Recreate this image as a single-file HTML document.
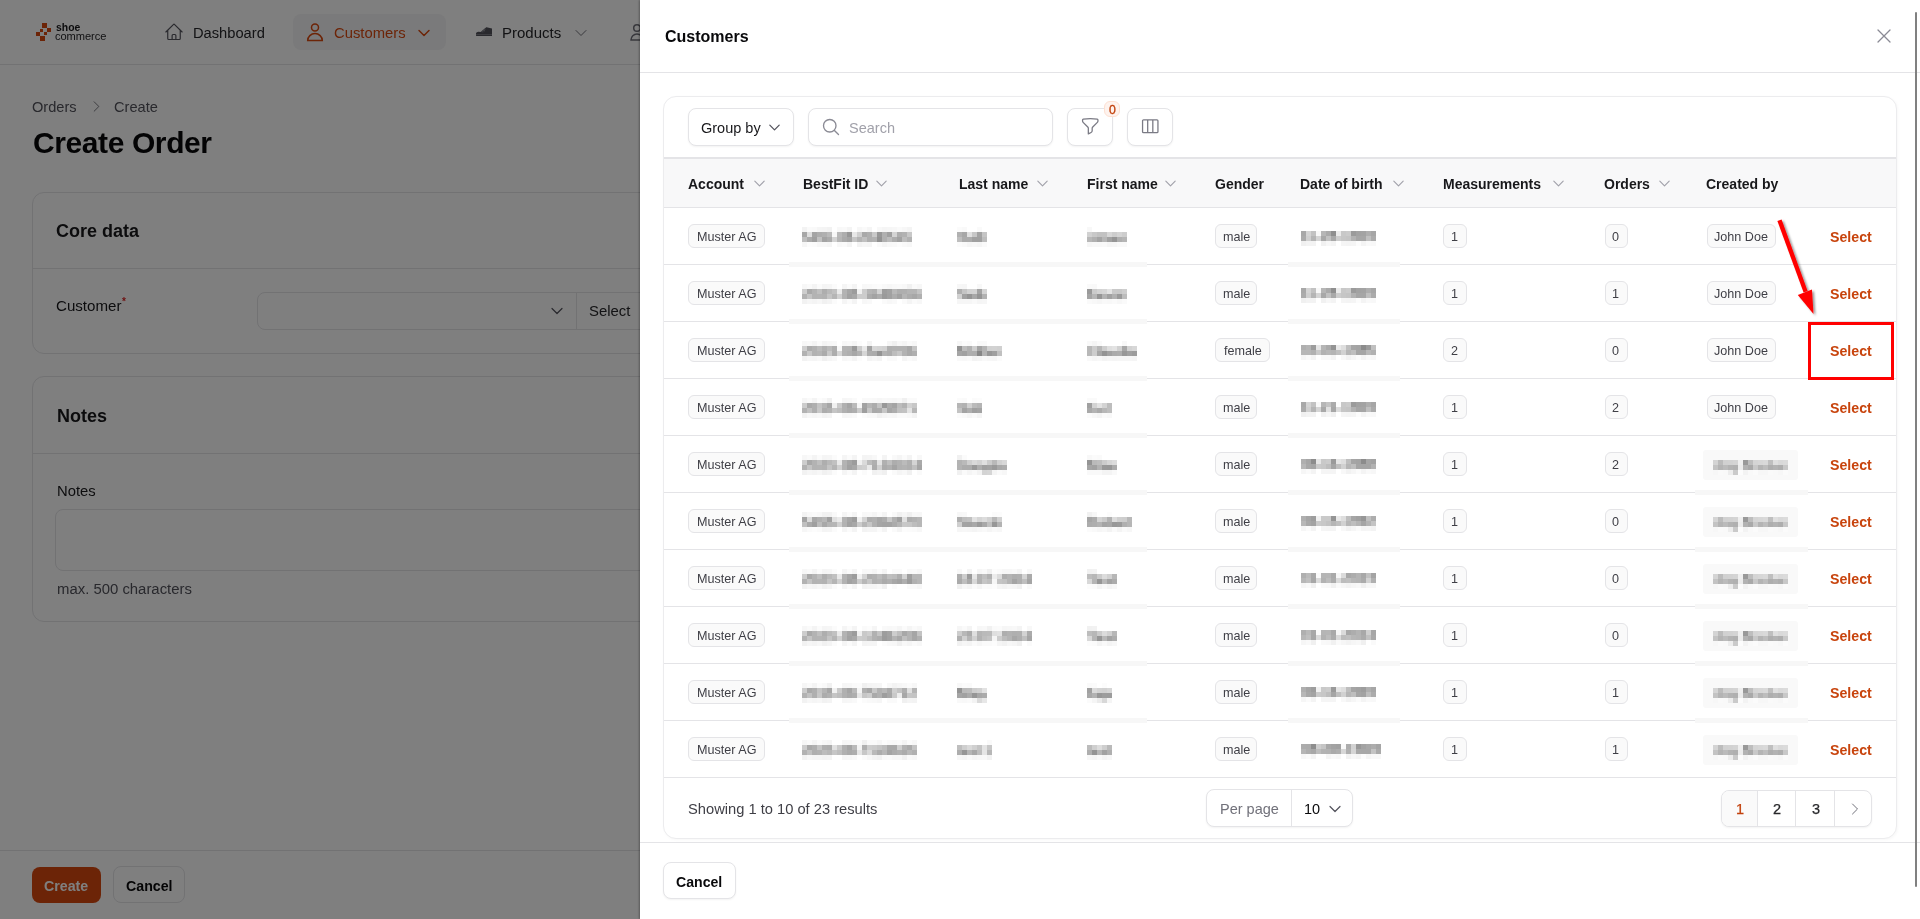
<!DOCTYPE html><html><head><meta charset="utf-8"><style>
html,body{margin:0;padding:0;width:1920px;height:919px;overflow:hidden;background:#fff;font-family:"Liberation Sans",sans-serif}
.a{position:absolute;box-sizing:border-box}
.t{position:absolute;white-space:nowrap;will-change:transform}
</style></head><body>
<div class="a" style="left:0;top:0;width:1920px;height:919px;background:#fff;overflow:hidden">
<div class="a" style="left:0px;top:0px;width:1920px;height:65px;background:#fff;border-bottom:1px solid #e4e4e7"></div>
<div class="a" style="left:42px;top:23px;width:5px;height:5px;background:#d9480f"></div>
<div class="a" style="left:47px;top:27.7px;width:4px;height:4px;background:#d9480f"></div>
<div class="a" style="left:40px;top:29px;width:3px;height:3px;background:#d9480f"></div>
<div class="a" style="left:44.2px;top:31.6px;width:3px;height:3px;background:#d9480f"></div>
<div class="a" style="left:36px;top:32px;width:4px;height:4px;background:#d9480f"></div>
<div class="a" style="left:40px;top:35.8px;width:5px;height:5px;background:#d9480f"></div>
<div class="t" style="left:55.5px;top:23.20px;font-size:10.4px;line-height:10.4px;font-weight:700;color:#18181b;letter-spacing:0px">shoe</div>
<div class="t" style="left:55.3px;top:31.40px;font-size:11.1px;line-height:11.1px;font-weight:400;color:#27272a;letter-spacing:-0.05px">commerce</div>
<svg class="a" style="left:163.5px;top:21.5px" width="20" height="20" viewBox="0 0 24 24" fill="none" stroke="#52525b" stroke-width="1.4" stroke-linecap="round" stroke-linejoin="round"><path d="m2.25 12 8.954-8.955c.44-.439 1.152-.439 1.591 0L21.75 12M4.5 9.75v10.125c0 .621.504 1.125 1.125 1.125H9.75v-4.875c0-.621.504-1.125 1.125-1.125h2.25c.621 0 1.125.504 1.125 1.125V21h4.125c.621 0 1.125-.504 1.125-1.125V9.75M8.25 21h8.25"/></svg>
<div class="t" style="left:192.6px;top:25.56px;font-size:14.7px;line-height:14.7px;font-weight:400;color:#27272a;">Dashboard</div>
<div class="a" style="left:293px;top:14px;width:153px;height:35.5px;background:#f5f5f6;border-radius:8px"></div>
<svg class="a" style="left:306px;top:22px" width="18" height="20" viewBox="0 0 18 20" fill="none" stroke="#d9480f" stroke-width="1.5"><circle cx="9" cy="5.4" r="3.5"/><path d="M1.7 18.6 A7.3 7.0 0 0 1 16.3 18.6 Z"/></svg>
<div class="t" style="left:333.5px;top:25.97px;font-size:14.8px;line-height:14.8px;font-weight:400;color:#d9480f;">Customers</div>
<svg class="a" style="left:416px;top:25px" width="16" height="16" viewBox="0 0 24 24" fill="none" stroke="#d9480f" stroke-width="2.2" stroke-linecap="round" stroke-linejoin="round"><path d="m19.5 8.25-7.5 7.5-7.5-7.5"/></svg>
<svg class="a" style="left:476px;top:27px" width="16" height="9" viewBox="0 0 16 9"><path d="M0 6.3 Q0.4 4.6 2.6 4.7 L4.6 4.9 L10.3 0.3 Q10.8 0 11.6 0.4 L16 1.6 L16 9 L0.4 9 Q0 8.8 0 8.2 Z" fill="#52525b"/><rect x="0" y="7.2" width="16" height="0.7" fill="#8e8e96"/><rect x="5.2" y="4" width="1.1" height="1.1" fill="#8e8e96"/><rect x="6.8" y="2.8" width="1.1" height="1.1" fill="#8e8e96"/><rect x="8.3" y="1.7" width="1.1" height="1.1" fill="#8e8e96"/><rect x="6.3" y="4.3" width="1.1" height="1.1" fill="#8e8e96"/><rect x="7.9" y="3.2" width="1.1" height="1.1" fill="#8e8e96"/></svg>
<div class="t" style="left:502.2px;top:25.30px;font-size:15px;line-height:15px;font-weight:400;color:#27272a;">Products</div>
<svg class="a" style="left:572.5px;top:25px" width="16" height="16" viewBox="0 0 24 24" fill="none" stroke="#71717a" stroke-width="1.5" stroke-linecap="round" stroke-linejoin="round"><path d="m19.5 8.25-7.5 7.5-7.5-7.5"/></svg>
<svg class="a" style="left:630px;top:23px" width="20" height="20" viewBox="0 0 20 20" fill="none" stroke="#71717a" stroke-width="1.5"><circle cx="7" cy="5" r="3.3"/><path d="M1 17 A6 6 0 0 1 13 17 Z"/></svg>
<div class="t" style="left:32.4px;top:99.94px;font-size:14.6px;line-height:14.6px;font-weight:400;color:#52525b;">Orders</div>
<svg class="a" style="left:89px;top:98.5px" width="15" height="15" viewBox="0 0 24 24" fill="none" stroke="#71717a" stroke-width="1.5" stroke-linecap="round" stroke-linejoin="round"><path d="m8.25 4.5 7.5 7.5-7.5 7.5"/></svg>
<div class="t" style="left:114.3px;top:99.94px;font-size:14.6px;line-height:14.6px;font-weight:400;color:#52525b;">Create</div>
<div class="t" style="left:33px;top:127.51px;font-size:30px;line-height:30px;font-weight:700;color:#09090b;letter-spacing:-0.4px">Create Order</div>
<div class="a" style="left:31.8px;top:191.8px;width:1856px;height:162px;background:#fff;border:1px solid #e4e4e7;border-radius:12px"></div>
<div class="a" style="left:32px;top:268px;width:1854px;height:1px;background:#e4e4e7"></div>
<div class="t" style="left:56.2px;top:221.96px;font-size:18px;line-height:18px;font-weight:700;color:#18181b;">Core data</div>
<div class="t" style="left:56.2px;top:298.02px;font-size:15.1px;line-height:15.1px;font-weight:400;color:#18181b;">Customer</div>
<div class="t" style="left:122.3px;top:296.74px;font-size:10px;line-height:10px;font-weight:700;color:#dc2626;">*</div>
<div class="a" style="left:256.5px;top:292px;width:1300px;height:38px;background:#fff;border:1px solid #e4e4e7;border-radius:8px"></div>
<div class="a" style="left:575.5px;top:293px;width:1px;height:36px;background:#e4e4e7"></div>
<svg class="a" style="left:549px;top:302.5px" width="16" height="16" viewBox="0 0 24 24" fill="none" stroke="#52525b" stroke-width="1.8" stroke-linecap="round" stroke-linejoin="round"><path d="m19.5 8.25-7.5 7.5-7.5-7.5"/></svg>
<div class="t" style="left:588.7px;top:304.39px;font-size:14.9px;line-height:14.9px;font-weight:400;color:#27272a;">Select</div>
<div class="a" style="left:31.8px;top:376.4px;width:1856px;height:246px;background:#fff;border:1px solid #e4e4e7;border-radius:12px"></div>
<div class="a" style="left:32px;top:453px;width:1854px;height:1px;background:#e4e4e7"></div>
<div class="t" style="left:56.6px;top:406.56px;font-size:18px;line-height:18px;font-weight:700;color:#18181b;">Notes</div>
<div class="t" style="left:56.6px;top:483.67px;font-size:14.8px;line-height:14.8px;font-weight:400;color:#18181b;">Notes</div>
<div class="a" style="left:55.3px;top:509.3px;width:1810px;height:61.5px;background:#fff;border:1px solid #e4e4e7;border-radius:8px"></div>
<div class="t" style="left:56.6px;top:581.59px;font-size:14.9px;line-height:14.9px;font-weight:400;color:#52525b;">max. 500 characters</div>
<div class="a" style="left:0px;top:850px;width:1920px;height:69px;background:#fff;border-top:1px solid #e4e4e7"></div>
<div class="a" style="left:32.3px;top:867px;width:69px;height:35.5px;background:#d9480f;border-radius:8px"></div>
<div class="t" style="left:44.4px;top:878.88px;font-size:14.2px;line-height:14.2px;font-weight:700;color:#fff;">Create</div>
<div class="a" style="left:112.5px;top:866.3px;width:72px;height:37px;background:#fff;border:1px solid #e4e4e7;border-radius:8px"></div>
<div class="t" style="left:125.6px;top:878.88px;font-size:14.2px;line-height:14.2px;font-weight:700;color:#09090b;">Cancel</div>
</div>
<div class="a" style="left:0px;top:0px;width:1920px;height:919px;background:rgba(0,0,0,0.5)"></div>
<div class="a" style="left:640px;top:0;width:1280px;height:919px;background:#fff;box-shadow:-1px 0 2px rgba(0,0,0,0.3);overflow:hidden">
<div class="t" style="left:24.5px;top:29.06px;font-size:16px;line-height:16px;font-weight:700;color:#09090b;">Customers</div>
<svg class="a" style="left:1232px;top:24px" width="24" height="24" viewBox="0 0 24 24" fill="none" stroke="#8a8a94" stroke-width="1.3" stroke-linecap="round" stroke-linejoin="round"><path d="M6 18 18 6M6 6l12 12"/></svg>
<div class="a" style="left:0px;top:72px;width:1280px;height:1px;background:#e4e4e7"></div>
<div class="a" style="left:23.399999999999977px;top:96px;width:1234px;height:743px;background:#fff;border:1px solid #ececee;border-radius:13px;box-shadow:1px 1px 3px rgba(0,0,0,0.03)"></div>
<div class="a" style="left:47.5px;top:108px;width:106.5px;height:38px;background:#fff;border:1px solid #e4e4e7;border-radius:8px;box-shadow:0 1px 2px rgba(0,0,0,0.05)"></div>
<div class="t" style="left:60.60000000000002px;top:121.03px;font-size:14.5px;line-height:14.5px;font-weight:400;color:#18181b;">Group by</div>
<svg class="a" style="left:127px;top:120px" width="15" height="15" viewBox="0 0 24 24" fill="none" stroke="#52525b" stroke-width="2" stroke-linecap="round" stroke-linejoin="round"><path d="m19.5 8.25-7.5 7.5-7.5-7.5"/></svg>
<div class="a" style="left:168.29999999999995px;top:108px;width:244.5px;height:38px;background:#fff;border:1px solid #e4e4e7;border-radius:8px;box-shadow:0 1px 2px rgba(0,0,0,0.05)"></div>
<svg class="a" style="left:180.5px;top:117px" width="20" height="20" viewBox="0 0 24 24" fill="none" stroke="#8a8a94" stroke-width="1.6" stroke-linecap="round" stroke-linejoin="round"><path d="m21 21-5.197-5.197m0 0A7.5 7.5 0 1 0 5.196 5.196a7.5 7.5 0 0 0 10.607 10.607Z"/></svg>
<div class="t" style="left:209px;top:120.83px;font-size:14.5px;line-height:14.5px;font-weight:400;color:#a1a1aa;">Search</div>
<div class="a" style="left:427.4000000000001px;top:108px;width:46px;height:38px;background:#fff;border:1px solid #e4e4e7;border-radius:8px;box-shadow:0 1px 2px rgba(0,0,0,0.05)"></div>
<svg class="a" style="left:439.5999999999999px;top:116.4px" width="20.5" height="20.5" viewBox="0 0 24 24" fill="none" stroke="#7a7a84" stroke-width="1.5" stroke-linecap="round" stroke-linejoin="round"><path d="M12 3c2.755 0 5.455.232 8.083.678.533.09.917.556.917 1.096v1.044a2.25 2.25 0 0 1-.659 1.591l-5.432 5.432a2.25 2.25 0 0 0-.659 1.591v2.927a2.25 2.25 0 0 1-1.244 2.013L9.75 21v-6.568a2.25 2.25 0 0 0-.659-1.591L3.659 7.409A2.25 2.25 0 0 1 3 5.818V4.774c0-.54.384-1.006.917-1.096A48.32 48.32 0 0 1 12 3Z"/></svg>
<div class="a" style="left:464px;top:101.3px;width:16px;height:15.5px;background:#fef3ee;border:1px solid #fde0d2;border-radius:6px"></div>
<div class="t" style="left:468.79999999999995px;top:103.59px;font-size:12.3px;line-height:12.3px;font-weight:400;color:#c2410c;-webkit-text-stroke:0.3px #c2410c">0</div>
<div class="a" style="left:487.4000000000001px;top:108px;width:46px;height:38px;background:#fff;border:1px solid #e4e4e7;border-radius:8px;box-shadow:0 1px 2px rgba(0,0,0,0.05)"></div>
<svg class="a" style="left:499.5px;top:116px" width="20.5" height="20.5" viewBox="0 0 24 24" fill="none" stroke="#7a7a84" stroke-width="1.5" stroke-linecap="round" stroke-linejoin="round"><path d="M9 4.5v15m6-15v15m-10.875 0h15.75c.621 0 1.125-.504 1.125-1.125V5.625c0-.621-.504-1.125-1.125-1.125H4.125C3.504 4.5 3 5.004 3 5.625v12.75c0 .621.504 1.125 1.125 1.125Z"/></svg>
<div class="a" style="left:24px;top:157px;width:1232px;height:2px;background:#e4e4e7"></div>
<div class="a" style="left:24px;top:159px;width:1232px;height:48px;background:#f8f8f9"></div>
<div class="a" style="left:24px;top:207px;width:1232px;height:1px;background:#e4e4e7"></div>
<div class="t" style="left:48px;top:177.15px;font-size:14px;line-height:14px;font-weight:700;color:#18181b;">Account</div>
<svg class="a" style="left:111.70000000000005px;top:176px" width="15" height="15" viewBox="0 0 24 24" fill="none" stroke="#a1a1aa" stroke-width="1.8" stroke-linecap="round" stroke-linejoin="round"><path d="m19.5 8.25-7.5 7.5-7.5-7.5"/></svg>
<div class="t" style="left:162.70000000000005px;top:177.15px;font-size:14px;line-height:14px;font-weight:700;color:#18181b;">BestFit ID</div>
<svg class="a" style="left:233.5px;top:176px" width="15" height="15" viewBox="0 0 24 24" fill="none" stroke="#a1a1aa" stroke-width="1.8" stroke-linecap="round" stroke-linejoin="round"><path d="m19.5 8.25-7.5 7.5-7.5-7.5"/></svg>
<div class="t" style="left:319.1px;top:177.15px;font-size:14px;line-height:14px;font-weight:700;color:#18181b;">Last name</div>
<svg class="a" style="left:394.5px;top:176px" width="15" height="15" viewBox="0 0 24 24" fill="none" stroke="#a1a1aa" stroke-width="1.8" stroke-linecap="round" stroke-linejoin="round"><path d="m19.5 8.25-7.5 7.5-7.5-7.5"/></svg>
<div class="t" style="left:446.5999999999999px;top:177.15px;font-size:14px;line-height:14px;font-weight:700;color:#18181b;">First name</div>
<svg class="a" style="left:523.3px;top:176px" width="15" height="15" viewBox="0 0 24 24" fill="none" stroke="#a1a1aa" stroke-width="1.8" stroke-linecap="round" stroke-linejoin="round"><path d="m19.5 8.25-7.5 7.5-7.5-7.5"/></svg>
<div class="t" style="left:575.4000000000001px;top:177.15px;font-size:14px;line-height:14px;font-weight:700;color:#18181b;">Gender</div>
<div class="t" style="left:660.3px;top:177.15px;font-size:14px;line-height:14px;font-weight:700;color:#18181b;">Date of birth</div>
<svg class="a" style="left:750.7px;top:176px" width="15" height="15" viewBox="0 0 24 24" fill="none" stroke="#a1a1aa" stroke-width="1.8" stroke-linecap="round" stroke-linejoin="round"><path d="m19.5 8.25-7.5 7.5-7.5-7.5"/></svg>
<div class="t" style="left:802.5px;top:177.15px;font-size:14px;line-height:14px;font-weight:700;color:#18181b;">Measurements</div>
<svg class="a" style="left:910.5px;top:176px" width="15" height="15" viewBox="0 0 24 24" fill="none" stroke="#a1a1aa" stroke-width="1.8" stroke-linecap="round" stroke-linejoin="round"><path d="m19.5 8.25-7.5 7.5-7.5-7.5"/></svg>
<div class="t" style="left:964.2px;top:177.15px;font-size:14px;line-height:14px;font-weight:700;color:#18181b;">Orders</div>
<svg class="a" style="left:1016.7px;top:176px" width="15" height="15" viewBox="0 0 24 24" fill="none" stroke="#a1a1aa" stroke-width="1.8" stroke-linecap="round" stroke-linejoin="round"><path d="m19.5 8.25-7.5 7.5-7.5-7.5"/></svg>
<div class="t" style="left:1065.8px;top:177.15px;font-size:14px;line-height:14px;font-weight:700;color:#18181b;">Created by</div>
<div class="a" style="left:24px;top:264px;width:1232px;height:1px;background:#e4e4e7"></div>
<div class="a" style="left:48.299999999999955px;top:224px;width:76.5px;height:24px;background:#fafafa;border:1px solid #e4e4e7;border-radius:6px"></div>
<div class="t" style="left:56.792187499999955px;top:231.13px;font-size:12.6px;line-height:12.6px;font-weight:400;color:#3f3f46;">Muster AG</div>
<div class="a" style="left:575.3px;top:224px;width:42.2px;height:24px;background:#fafafa;border:1px solid #e4e4e7;border-radius:6px"></div>
<div class="t" style="left:582.7445312499999px;top:231.13px;font-size:12.6px;line-height:12.6px;font-weight:400;color:#3f3f46;">male</div>
<div class="a" style="left:803.3px;top:224px;width:23.3px;height:24px;background:#fafafa;border:1px solid #e4e4e7;border-radius:6px"></div>
<div class="t" style="left:811.44609375px;top:231.13px;font-size:12.6px;line-height:12.6px;font-weight:400;color:#3f3f46;">1</div>
<div class="a" style="left:964.5px;top:224px;width:23px;height:24px;background:#fafafa;border:1px solid #e4e4e7;border-radius:6px"></div>
<div class="t" style="left:972.49609375px;top:231.13px;font-size:12.6px;line-height:12.6px;font-weight:400;color:#3f3f46;">0</div>
<div class="a" style="left:1066.5px;top:224px;width:69px;height:24px;background:#fafafa;border:1px solid #e4e4e7;border-radius:6px"></div>
<div class="t" style="left:1074.03046875px;top:231.13px;font-size:12.6px;line-height:12.6px;font-weight:400;color:#3f3f46;">John Doe</div>
<div class="t" style="left:1189.7px;top:229.98px;font-size:14.2px;line-height:14.2px;font-weight:700;color:#c8440d;">Select</div>
<svg class="a" style="left:162px;top:227px" width="110" height="25" shape-rendering="crispEdges"><rect x="0" y="0" width="5" height="5" fill="rgb(243,243,243)"/><rect x="5" y="0" width="5" height="5" fill="rgb(250,250,250)"/><rect x="10" y="0" width="5" height="5" fill="rgb(249,249,249)"/><rect x="15" y="0" width="5" height="5" fill="rgb(245,245,245)"/><rect x="20" y="0" width="5" height="5" fill="rgb(244,244,244)"/><rect x="25" y="0" width="5" height="5" fill="rgb(242,242,242)"/><rect x="35" y="0" width="5" height="5" fill="rgb(248,248,248)"/><rect x="40" y="0" width="5" height="5" fill="rgb(249,249,249)"/><rect x="45" y="0" width="5" height="5" fill="rgb(244,244,244)"/><rect x="55" y="0" width="5" height="5" fill="rgb(247,247,247)"/><rect x="60" y="0" width="5" height="5" fill="rgb(250,250,250)"/><rect x="65" y="0" width="5" height="5" fill="rgb(245,245,245)"/><rect x="75" y="0" width="5" height="5" fill="rgb(248,248,248)"/><rect x="80" y="0" width="5" height="5" fill="rgb(245,245,245)"/><rect x="85" y="0" width="5" height="5" fill="rgb(246,246,246)"/><rect x="90" y="0" width="5" height="5" fill="rgb(247,247,247)"/><rect x="95" y="0" width="5" height="5" fill="rgb(250,250,250)"/><rect x="100" y="0" width="5" height="5" fill="rgb(247,247,247)"/><rect x="105" y="0" width="5" height="5" fill="rgb(244,244,244)"/><rect x="0" y="5" width="5" height="5" fill="rgb(167,167,167)"/><rect x="5" y="5" width="5" height="5" fill="rgb(223,223,223)"/><rect x="10" y="5" width="5" height="5" fill="rgb(164,164,164)"/><rect x="15" y="5" width="5" height="5" fill="rgb(173,173,173)"/><rect x="20" y="5" width="5" height="5" fill="rgb(176,176,176)"/><rect x="25" y="5" width="5" height="5" fill="rgb(186,186,186)"/><rect x="30" y="5" width="5" height="5" fill="rgb(248,248,248)"/><rect x="35" y="5" width="5" height="5" fill="rgb(185,185,185)"/><rect x="40" y="5" width="5" height="5" fill="rgb(173,173,173)"/><rect x="45" y="5" width="5" height="5" fill="rgb(151,151,151)"/><rect x="50" y="5" width="5" height="5" fill="rgb(232,232,232)"/><rect x="55" y="5" width="5" height="5" fill="rgb(208,208,208)"/><rect x="60" y="5" width="5" height="5" fill="rgb(169,169,169)"/><rect x="65" y="5" width="5" height="5" fill="rgb(175,175,175)"/><rect x="70" y="5" width="5" height="5" fill="rgb(201,201,201)"/><rect x="75" y="5" width="5" height="5" fill="rgb(151,151,151)"/><rect x="80" y="5" width="5" height="5" fill="rgb(176,176,176)"/><rect x="85" y="5" width="5" height="5" fill="rgb(160,160,160)"/><rect x="90" y="5" width="5" height="5" fill="rgb(212,212,212)"/><rect x="95" y="5" width="5" height="5" fill="rgb(174,174,174)"/><rect x="100" y="5" width="5" height="5" fill="rgb(178,178,178)"/><rect x="105" y="5" width="5" height="5" fill="rgb(200,200,200)"/><rect x="0" y="10" width="5" height="5" fill="rgb(190,190,190)"/><rect x="5" y="10" width="5" height="5" fill="rgb(171,171,171)"/><rect x="10" y="10" width="5" height="5" fill="rgb(159,159,159)"/><rect x="15" y="10" width="5" height="5" fill="rgb(193,193,193)"/><rect x="20" y="10" width="5" height="5" fill="rgb(163,163,163)"/><rect x="25" y="10" width="5" height="5" fill="rgb(171,171,171)"/><rect x="30" y="10" width="5" height="5" fill="rgb(211,211,211)"/><rect x="35" y="10" width="5" height="5" fill="rgb(182,182,182)"/><rect x="40" y="10" width="5" height="5" fill="rgb(170,170,170)"/><rect x="45" y="10" width="5" height="5" fill="rgb(164,164,164)"/><rect x="50" y="10" width="5" height="5" fill="rgb(198,198,198)"/><rect x="55" y="10" width="5" height="5" fill="rgb(181,181,181)"/><rect x="60" y="10" width="5" height="5" fill="rgb(192,192,192)"/><rect x="65" y="10" width="5" height="5" fill="rgb(175,175,175)"/><rect x="70" y="10" width="5" height="5" fill="rgb(178,178,178)"/><rect x="75" y="10" width="5" height="5" fill="rgb(146,146,146)"/><rect x="80" y="10" width="5" height="5" fill="rgb(176,176,176)"/><rect x="85" y="10" width="5" height="5" fill="rgb(188,188,188)"/><rect x="90" y="10" width="5" height="5" fill="rgb(173,173,173)"/><rect x="95" y="10" width="5" height="5" fill="rgb(162,162,162)"/><rect x="100" y="10" width="5" height="5" fill="rgb(189,189,189)"/><rect x="105" y="10" width="5" height="5" fill="rgb(178,178,178)"/><rect x="0" y="15" width="5" height="5" fill="rgb(246,246,246)"/><rect x="5" y="15" width="5" height="5" fill="rgb(252,252,252)"/><rect x="10" y="15" width="5" height="5" fill="rgb(251,251,251)"/><rect x="15" y="15" width="5" height="5" fill="rgb(247,247,247)"/><rect x="20" y="15" width="5" height="5" fill="rgb(247,247,247)"/><rect x="25" y="15" width="5" height="5" fill="rgb(245,245,245)"/><rect x="35" y="15" width="5" height="5" fill="rgb(248,248,248)"/><rect x="40" y="15" width="5" height="5" fill="rgb(250,250,250)"/><rect x="45" y="15" width="5" height="5" fill="rgb(244,244,244)"/><rect x="55" y="15" width="5" height="5" fill="rgb(243,243,243)"/><rect x="60" y="15" width="5" height="5" fill="rgb(246,246,246)"/><rect x="65" y="15" width="5" height="5" fill="rgb(245,245,245)"/><rect x="75" y="15" width="5" height="5" fill="rgb(250,250,250)"/><rect x="80" y="15" width="5" height="5" fill="rgb(245,245,245)"/><rect x="85" y="15" width="5" height="5" fill="rgb(248,248,248)"/><rect x="90" y="15" width="5" height="5" fill="rgb(249,249,249)"/><rect x="95" y="15" width="5" height="5" fill="rgb(252,252,252)"/><rect x="100" y="15" width="5" height="5" fill="rgb(249,249,249)"/><rect x="105" y="15" width="5" height="5" fill="rgb(247,247,247)"/></svg>
<svg class="a" style="left:317px;top:227px" width="30" height="25" shape-rendering="crispEdges"><rect x="0" y="0" width="5" height="5" fill="rgb(251,251,251)"/><rect x="5" y="0" width="5" height="5" fill="rgb(249,249,249)"/><rect x="20" y="0" width="5" height="5" fill="rgb(250,250,250)"/><rect x="0" y="5" width="5" height="5" fill="rgb(177,177,177)"/><rect x="5" y="5" width="5" height="5" fill="rgb(167,167,167)"/><rect x="10" y="5" width="5" height="5" fill="rgb(225,225,225)"/><rect x="15" y="5" width="5" height="5" fill="rgb(199,199,199)"/><rect x="20" y="5" width="5" height="5" fill="rgb(163,163,163)"/><rect x="25" y="5" width="5" height="5" fill="rgb(197,197,197)"/><rect x="0" y="10" width="5" height="5" fill="rgb(190,190,190)"/><rect x="5" y="10" width="5" height="5" fill="rgb(171,171,171)"/><rect x="10" y="10" width="5" height="5" fill="rgb(172,172,172)"/><rect x="15" y="10" width="5" height="5" fill="rgb(160,160,160)"/><rect x="20" y="10" width="5" height="5" fill="rgb(160,160,160)"/><rect x="25" y="10" width="5" height="5" fill="rgb(189,189,189)"/><rect x="0" y="15" width="5" height="5" fill="rgb(251,251,251)"/><rect x="5" y="15" width="5" height="5" fill="rgb(249,249,249)"/><rect x="10" y="15" width="5" height="5" fill="rgb(245,245,245)"/><rect x="15" y="15" width="5" height="5" fill="rgb(247,247,247)"/><rect x="20" y="15" width="5" height="5" fill="rgb(245,245,245)"/><rect x="25" y="15" width="5" height="5" fill="rgb(250,250,250)"/></svg>
<svg class="a" style="left:447px;top:227px" width="40" height="25" shape-rendering="crispEdges"><rect x="0" y="0" width="5" height="5" fill="rgb(248,248,248)"/><rect x="0" y="5" width="5" height="5" fill="rgb(209,209,209)"/><rect x="5" y="5" width="5" height="5" fill="rgb(200,200,200)"/><rect x="10" y="5" width="5" height="5" fill="rgb(194,194,194)"/><rect x="15" y="5" width="5" height="5" fill="rgb(194,194,194)"/><rect x="20" y="5" width="5" height="5" fill="rgb(215,215,215)"/><rect x="25" y="5" width="5" height="5" fill="rgb(205,205,205)"/><rect x="30" y="5" width="5" height="5" fill="rgb(212,212,212)"/><rect x="35" y="5" width="5" height="5" fill="rgb(205,205,205)"/><rect x="0" y="10" width="5" height="5" fill="rgb(184,184,184)"/><rect x="5" y="10" width="5" height="5" fill="rgb(176,176,176)"/><rect x="10" y="10" width="5" height="5" fill="rgb(164,164,164)"/><rect x="15" y="10" width="5" height="5" fill="rgb(182,182,182)"/><rect x="20" y="10" width="5" height="5" fill="rgb(162,162,162)"/><rect x="25" y="10" width="5" height="5" fill="rgb(149,149,149)"/><rect x="30" y="10" width="5" height="5" fill="rgb(175,175,175)"/><rect x="35" y="10" width="5" height="5" fill="rgb(181,181,181)"/><rect x="0" y="15" width="5" height="5" fill="rgb(246,246,246)"/><rect x="5" y="15" width="5" height="5" fill="rgb(248,248,248)"/><rect x="10" y="15" width="5" height="5" fill="rgb(248,248,248)"/><rect x="15" y="15" width="5" height="5" fill="rgb(249,249,249)"/><rect x="20" y="15" width="5" height="5" fill="rgb(245,245,245)"/><rect x="25" y="15" width="5" height="5" fill="rgb(246,246,246)"/><rect x="30" y="15" width="5" height="5" fill="rgb(249,249,249)"/><rect x="35" y="15" width="5" height="5" fill="rgb(249,249,249)"/></svg>
<svg class="a" style="left:661px;top:231px" width="75" height="25" shape-rendering="crispEdges"><rect x="0" y="0" width="5" height="5" fill="rgb(168,168,168)"/><rect x="5" y="0" width="5" height="5" fill="rgb(212,212,212)"/><rect x="10" y="0" width="5" height="5" fill="rgb(194,194,194)"/><rect x="15" y="0" width="5" height="5" fill="rgb(248,248,248)"/><rect x="20" y="0" width="5" height="5" fill="rgb(182,182,182)"/><rect x="25" y="0" width="5" height="5" fill="rgb(170,170,170)"/><rect x="30" y="0" width="5" height="5" fill="rgb(143,143,143)"/><rect x="35" y="0" width="5" height="5" fill="rgb(235,235,235)"/><rect x="40" y="0" width="5" height="5" fill="rgb(200,200,200)"/><rect x="45" y="0" width="5" height="5" fill="rgb(203,203,203)"/><rect x="50" y="0" width="5" height="5" fill="rgb(155,155,155)"/><rect x="55" y="0" width="5" height="5" fill="rgb(162,162,162)"/><rect x="60" y="0" width="5" height="5" fill="rgb(163,163,163)"/><rect x="65" y="0" width="5" height="5" fill="rgb(174,174,174)"/><rect x="70" y="0" width="5" height="5" fill="rgb(166,166,166)"/><rect x="0" y="5" width="5" height="5" fill="rgb(171,171,171)"/><rect x="5" y="5" width="5" height="5" fill="rgb(207,207,207)"/><rect x="10" y="5" width="5" height="5" fill="rgb(181,181,181)"/><rect x="15" y="5" width="5" height="5" fill="rgb(213,213,213)"/><rect x="20" y="5" width="5" height="5" fill="rgb(168,168,168)"/><rect x="25" y="5" width="5" height="5" fill="rgb(193,193,193)"/><rect x="30" y="5" width="5" height="5" fill="rgb(169,169,169)"/><rect x="35" y="5" width="5" height="5" fill="rgb(205,205,205)"/><rect x="40" y="5" width="5" height="5" fill="rgb(198,198,198)"/><rect x="45" y="5" width="5" height="5" fill="rgb(196,196,196)"/><rect x="50" y="5" width="5" height="5" fill="rgb(178,178,178)"/><rect x="55" y="5" width="5" height="5" fill="rgb(166,166,166)"/><rect x="60" y="5" width="5" height="5" fill="rgb(166,166,166)"/><rect x="65" y="5" width="5" height="5" fill="rgb(191,191,191)"/><rect x="70" y="5" width="5" height="5" fill="rgb(171,171,171)"/><rect x="0" y="10" width="5" height="5" fill="rgb(240,240,240)"/><rect x="5" y="10" width="5" height="5" fill="rgb(243,243,243)"/><rect x="10" y="10" width="5" height="5" fill="rgb(243,243,243)"/><rect x="20" y="10" width="5" height="5" fill="rgb(241,241,241)"/><rect x="25" y="10" width="5" height="5" fill="rgb(247,247,247)"/><rect x="30" y="10" width="5" height="5" fill="rgb(244,244,244)"/><rect x="40" y="10" width="5" height="5" fill="rgb(245,245,245)"/><rect x="45" y="10" width="5" height="5" fill="rgb(244,244,244)"/><rect x="50" y="10" width="5" height="5" fill="rgb(245,245,245)"/><rect x="55" y="10" width="5" height="5" fill="rgb(252,252,252)"/><rect x="60" y="10" width="5" height="5" fill="rgb(244,244,244)"/><rect x="65" y="10" width="5" height="5" fill="rgb(249,249,249)"/><rect x="70" y="10" width="5" height="5" fill="rgb(248,248,248)"/></svg>
<div class="a" style="left:149px;top:262px;width:358px;height:5px;background:#f7f7f7"></div>
<div class="a" style="left:648px;top:262px;width:112px;height:5px;background:#f7f7f7"></div>
<div class="a" style="left:24px;top:321px;width:1232px;height:1px;background:#e4e4e7"></div>
<div class="a" style="left:48.299999999999955px;top:281px;width:76.5px;height:24px;background:#fafafa;border:1px solid #e4e4e7;border-radius:6px"></div>
<div class="t" style="left:56.792187499999955px;top:288.13px;font-size:12.6px;line-height:12.6px;font-weight:400;color:#3f3f46;">Muster AG</div>
<div class="a" style="left:575.3px;top:281px;width:42.2px;height:24px;background:#fafafa;border:1px solid #e4e4e7;border-radius:6px"></div>
<div class="t" style="left:582.7445312499999px;top:288.13px;font-size:12.6px;line-height:12.6px;font-weight:400;color:#3f3f46;">male</div>
<div class="a" style="left:803.3px;top:281px;width:23.3px;height:24px;background:#fafafa;border:1px solid #e4e4e7;border-radius:6px"></div>
<div class="t" style="left:811.44609375px;top:288.13px;font-size:12.6px;line-height:12.6px;font-weight:400;color:#3f3f46;">1</div>
<div class="a" style="left:964.5px;top:281px;width:23px;height:24px;background:#fafafa;border:1px solid #e4e4e7;border-radius:6px"></div>
<div class="t" style="left:972.49609375px;top:288.13px;font-size:12.6px;line-height:12.6px;font-weight:400;color:#3f3f46;">1</div>
<div class="a" style="left:1066.5px;top:281px;width:69px;height:24px;background:#fafafa;border:1px solid #e4e4e7;border-radius:6px"></div>
<div class="t" style="left:1074.03046875px;top:288.13px;font-size:12.6px;line-height:12.6px;font-weight:400;color:#3f3f46;">John Doe</div>
<div class="t" style="left:1189.7px;top:286.98px;font-size:14.2px;line-height:14.2px;font-weight:700;color:#c8440d;">Select</div>
<svg class="a" style="left:162px;top:284px" width="120" height="25" shape-rendering="crispEdges"><rect x="0" y="0" width="5" height="5" fill="rgb(247,247,247)"/><rect x="5" y="0" width="5" height="5" fill="rgb(250,250,250)"/><rect x="10" y="0" width="5" height="5" fill="rgb(244,244,244)"/><rect x="15" y="0" width="5" height="5" fill="rgb(251,251,251)"/><rect x="20" y="0" width="5" height="5" fill="rgb(245,245,245)"/><rect x="25" y="0" width="5" height="5" fill="rgb(246,246,246)"/><rect x="30" y="0" width="5" height="5" fill="rgb(251,251,251)"/><rect x="40" y="0" width="5" height="5" fill="rgb(245,245,245)"/><rect x="45" y="0" width="5" height="5" fill="rgb(251,251,251)"/><rect x="50" y="0" width="5" height="5" fill="rgb(244,244,244)"/><rect x="60" y="0" width="5" height="5" fill="rgb(248,248,248)"/><rect x="65" y="0" width="5" height="5" fill="rgb(249,249,249)"/><rect x="70" y="0" width="5" height="5" fill="rgb(251,251,251)"/><rect x="75" y="0" width="5" height="5" fill="rgb(252,252,252)"/><rect x="80" y="0" width="5" height="5" fill="rgb(249,249,249)"/><rect x="85" y="0" width="5" height="5" fill="rgb(247,247,247)"/><rect x="90" y="0" width="5" height="5" fill="rgb(249,249,249)"/><rect x="95" y="0" width="5" height="5" fill="rgb(250,250,250)"/><rect x="100" y="0" width="5" height="5" fill="rgb(248,248,248)"/><rect x="105" y="0" width="5" height="5" fill="rgb(241,241,241)"/><rect x="110" y="0" width="5" height="5" fill="rgb(250,250,250)"/><rect x="115" y="0" width="5" height="5" fill="rgb(247,247,247)"/><rect x="0" y="5" width="5" height="5" fill="rgb(205,205,205)"/><rect x="5" y="5" width="5" height="5" fill="rgb(169,169,169)"/><rect x="10" y="5" width="5" height="5" fill="rgb(179,179,179)"/><rect x="15" y="5" width="5" height="5" fill="rgb(191,191,191)"/><rect x="20" y="5" width="5" height="5" fill="rgb(174,174,174)"/><rect x="25" y="5" width="5" height="5" fill="rgb(185,185,185)"/><rect x="30" y="5" width="5" height="5" fill="rgb(193,193,193)"/><rect x="35" y="5" width="5" height="5" fill="rgb(234,234,234)"/><rect x="40" y="5" width="5" height="5" fill="rgb(179,179,179)"/><rect x="45" y="5" width="5" height="5" fill="rgb(166,166,166)"/><rect x="50" y="5" width="5" height="5" fill="rgb(156,156,156)"/><rect x="55" y="5" width="5" height="5" fill="rgb(240,240,240)"/><rect x="60" y="5" width="5" height="5" fill="rgb(204,204,204)"/><rect x="65" y="5" width="5" height="5" fill="rgb(181,181,181)"/><rect x="70" y="5" width="5" height="5" fill="rgb(177,177,177)"/><rect x="75" y="5" width="5" height="5" fill="rgb(210,210,210)"/><rect x="80" y="5" width="5" height="5" fill="rgb(157,157,157)"/><rect x="85" y="5" width="5" height="5" fill="rgb(162,162,162)"/><rect x="90" y="5" width="5" height="5" fill="rgb(184,184,184)"/><rect x="95" y="5" width="5" height="5" fill="rgb(174,174,174)"/><rect x="100" y="5" width="5" height="5" fill="rgb(175,175,175)"/><rect x="105" y="5" width="5" height="5" fill="rgb(180,180,180)"/><rect x="110" y="5" width="5" height="5" fill="rgb(180,180,180)"/><rect x="115" y="5" width="5" height="5" fill="rgb(195,195,195)"/><rect x="0" y="10" width="5" height="5" fill="rgb(178,178,178)"/><rect x="5" y="10" width="5" height="5" fill="rgb(196,196,196)"/><rect x="10" y="10" width="5" height="5" fill="rgb(179,179,179)"/><rect x="15" y="10" width="5" height="5" fill="rgb(180,180,180)"/><rect x="20" y="10" width="5" height="5" fill="rgb(178,178,178)"/><rect x="25" y="10" width="5" height="5" fill="rgb(196,196,196)"/><rect x="30" y="10" width="5" height="5" fill="rgb(181,181,181)"/><rect x="35" y="10" width="5" height="5" fill="rgb(208,208,208)"/><rect x="40" y="10" width="5" height="5" fill="rgb(178,178,178)"/><rect x="45" y="10" width="5" height="5" fill="rgb(162,162,162)"/><rect x="50" y="10" width="5" height="5" fill="rgb(168,168,168)"/><rect x="55" y="10" width="5" height="5" fill="rgb(204,204,204)"/><rect x="60" y="10" width="5" height="5" fill="rgb(204,204,204)"/><rect x="65" y="10" width="5" height="5" fill="rgb(171,171,171)"/><rect x="70" y="10" width="5" height="5" fill="rgb(163,163,163)"/><rect x="75" y="10" width="5" height="5" fill="rgb(173,173,173)"/><rect x="80" y="10" width="5" height="5" fill="rgb(154,154,154)"/><rect x="85" y="10" width="5" height="5" fill="rgb(161,161,161)"/><rect x="90" y="10" width="5" height="5" fill="rgb(173,173,173)"/><rect x="95" y="10" width="5" height="5" fill="rgb(162,162,162)"/><rect x="100" y="10" width="5" height="5" fill="rgb(181,181,181)"/><rect x="105" y="10" width="5" height="5" fill="rgb(172,172,172)"/><rect x="110" y="10" width="5" height="5" fill="rgb(167,167,167)"/><rect x="115" y="10" width="5" height="5" fill="rgb(176,176,176)"/><rect x="0" y="15" width="5" height="5" fill="rgb(242,242,242)"/><rect x="5" y="15" width="5" height="5" fill="rgb(246,246,246)"/><rect x="10" y="15" width="5" height="5" fill="rgb(244,244,244)"/><rect x="15" y="15" width="5" height="5" fill="rgb(247,247,247)"/><rect x="20" y="15" width="5" height="5" fill="rgb(241,241,241)"/><rect x="25" y="15" width="5" height="5" fill="rgb(244,244,244)"/><rect x="30" y="15" width="5" height="5" fill="rgb(251,251,251)"/><rect x="40" y="15" width="5" height="5" fill="rgb(245,245,245)"/><rect x="45" y="15" width="5" height="5" fill="rgb(251,251,251)"/><rect x="50" y="15" width="5" height="5" fill="rgb(244,244,244)"/><rect x="60" y="15" width="5" height="5" fill="rgb(247,247,247)"/><rect x="65" y="15" width="5" height="5" fill="rgb(249,249,249)"/><rect x="80" y="15" width="5" height="5" fill="rgb(250,250,250)"/><rect x="85" y="15" width="5" height="5" fill="rgb(247,247,247)"/><rect x="90" y="15" width="5" height="5" fill="rgb(249,249,249)"/><rect x="100" y="15" width="5" height="5" fill="rgb(250,250,250)"/><rect x="105" y="15" width="5" height="5" fill="rgb(244,244,244)"/><rect x="110" y="15" width="5" height="5" fill="rgb(250,250,250)"/><rect x="115" y="15" width="5" height="5" fill="rgb(247,247,247)"/></svg>
<svg class="a" style="left:317px;top:284px" width="30" height="25" shape-rendering="crispEdges"><rect x="0" y="0" width="5" height="5" fill="rgb(247,247,247)"/><rect x="5" y="0" width="5" height="5" fill="rgb(246,246,246)"/><rect x="20" y="0" width="5" height="5" fill="rgb(248,248,248)"/><rect x="0" y="5" width="5" height="5" fill="rgb(176,176,176)"/><rect x="5" y="5" width="5" height="5" fill="rgb(197,197,197)"/><rect x="10" y="5" width="5" height="5" fill="rgb(210,210,210)"/><rect x="15" y="5" width="5" height="5" fill="rgb(211,211,211)"/><rect x="20" y="5" width="5" height="5" fill="rgb(163,163,163)"/><rect x="25" y="5" width="5" height="5" fill="rgb(212,212,212)"/><rect x="0" y="10" width="5" height="5" fill="rgb(209,209,209)"/><rect x="5" y="10" width="5" height="5" fill="rgb(161,161,161)"/><rect x="10" y="10" width="5" height="5" fill="rgb(149,149,149)"/><rect x="15" y="10" width="5" height="5" fill="rgb(168,168,168)"/><rect x="20" y="10" width="5" height="5" fill="rgb(149,149,149)"/><rect x="25" y="10" width="5" height="5" fill="rgb(178,178,178)"/><rect x="0" y="15" width="5" height="5" fill="rgb(246,246,246)"/><rect x="5" y="15" width="5" height="5" fill="rgb(246,246,246)"/><rect x="10" y="15" width="5" height="5" fill="rgb(246,246,246)"/><rect x="15" y="15" width="5" height="5" fill="rgb(249,249,249)"/><rect x="20" y="15" width="5" height="5" fill="rgb(245,245,245)"/><rect x="25" y="15" width="5" height="5" fill="rgb(246,246,246)"/></svg>
<svg class="a" style="left:447px;top:284px" width="40" height="25" shape-rendering="crispEdges"><rect x="0" y="0" width="5" height="5" fill="rgb(250,250,250)"/><rect x="5" y="0" width="5" height="5" fill="rgb(249,249,249)"/><rect x="0" y="5" width="5" height="5" fill="rgb(154,154,154)"/><rect x="5" y="5" width="5" height="5" fill="rgb(203,203,203)"/><rect x="10" y="5" width="5" height="5" fill="rgb(211,211,211)"/><rect x="15" y="5" width="5" height="5" fill="rgb(214,214,214)"/><rect x="20" y="5" width="5" height="5" fill="rgb(227,227,227)"/><rect x="25" y="5" width="5" height="5" fill="rgb(201,201,201)"/><rect x="30" y="5" width="5" height="5" fill="rgb(200,200,200)"/><rect x="35" y="5" width="5" height="5" fill="rgb(206,206,206)"/><rect x="0" y="10" width="5" height="5" fill="rgb(164,164,164)"/><rect x="5" y="10" width="5" height="5" fill="rgb(182,182,182)"/><rect x="10" y="10" width="5" height="5" fill="rgb(149,149,149)"/><rect x="15" y="10" width="5" height="5" fill="rgb(179,179,179)"/><rect x="20" y="10" width="5" height="5" fill="rgb(161,161,161)"/><rect x="25" y="10" width="5" height="5" fill="rgb(176,176,176)"/><rect x="30" y="10" width="5" height="5" fill="rgb(154,154,154)"/><rect x="35" y="10" width="5" height="5" fill="rgb(189,189,189)"/><rect x="0" y="15" width="5" height="5" fill="rgb(250,250,250)"/><rect x="5" y="15" width="5" height="5" fill="rgb(248,248,248)"/><rect x="10" y="15" width="5" height="5" fill="rgb(246,246,246)"/><rect x="15" y="15" width="5" height="5" fill="rgb(249,249,249)"/><rect x="20" y="15" width="5" height="5" fill="rgb(248,248,248)"/><rect x="25" y="15" width="5" height="5" fill="rgb(250,250,250)"/><rect x="30" y="15" width="5" height="5" fill="rgb(247,247,247)"/><rect x="35" y="15" width="5" height="5" fill="rgb(250,250,250)"/></svg>
<svg class="a" style="left:661px;top:288px" width="75" height="25" shape-rendering="crispEdges"><rect x="0" y="0" width="5" height="5" fill="rgb(168,168,168)"/><rect x="5" y="0" width="5" height="5" fill="rgb(212,212,212)"/><rect x="10" y="0" width="5" height="5" fill="rgb(194,194,194)"/><rect x="15" y="0" width="5" height="5" fill="rgb(248,248,248)"/><rect x="20" y="0" width="5" height="5" fill="rgb(182,182,182)"/><rect x="25" y="0" width="5" height="5" fill="rgb(170,170,170)"/><rect x="30" y="0" width="5" height="5" fill="rgb(143,143,143)"/><rect x="35" y="0" width="5" height="5" fill="rgb(235,235,235)"/><rect x="40" y="0" width="5" height="5" fill="rgb(200,200,200)"/><rect x="45" y="0" width="5" height="5" fill="rgb(203,203,203)"/><rect x="50" y="0" width="5" height="5" fill="rgb(155,155,155)"/><rect x="55" y="0" width="5" height="5" fill="rgb(162,162,162)"/><rect x="60" y="0" width="5" height="5" fill="rgb(163,163,163)"/><rect x="65" y="0" width="5" height="5" fill="rgb(174,174,174)"/><rect x="70" y="0" width="5" height="5" fill="rgb(166,166,166)"/><rect x="0" y="5" width="5" height="5" fill="rgb(171,171,171)"/><rect x="5" y="5" width="5" height="5" fill="rgb(207,207,207)"/><rect x="10" y="5" width="5" height="5" fill="rgb(181,181,181)"/><rect x="15" y="5" width="5" height="5" fill="rgb(213,213,213)"/><rect x="20" y="5" width="5" height="5" fill="rgb(168,168,168)"/><rect x="25" y="5" width="5" height="5" fill="rgb(193,193,193)"/><rect x="30" y="5" width="5" height="5" fill="rgb(169,169,169)"/><rect x="35" y="5" width="5" height="5" fill="rgb(205,205,205)"/><rect x="40" y="5" width="5" height="5" fill="rgb(198,198,198)"/><rect x="45" y="5" width="5" height="5" fill="rgb(196,196,196)"/><rect x="50" y="5" width="5" height="5" fill="rgb(178,178,178)"/><rect x="55" y="5" width="5" height="5" fill="rgb(166,166,166)"/><rect x="60" y="5" width="5" height="5" fill="rgb(166,166,166)"/><rect x="65" y="5" width="5" height="5" fill="rgb(191,191,191)"/><rect x="70" y="5" width="5" height="5" fill="rgb(171,171,171)"/><rect x="0" y="10" width="5" height="5" fill="rgb(240,240,240)"/><rect x="5" y="10" width="5" height="5" fill="rgb(243,243,243)"/><rect x="10" y="10" width="5" height="5" fill="rgb(243,243,243)"/><rect x="20" y="10" width="5" height="5" fill="rgb(241,241,241)"/><rect x="25" y="10" width="5" height="5" fill="rgb(247,247,247)"/><rect x="30" y="10" width="5" height="5" fill="rgb(244,244,244)"/><rect x="40" y="10" width="5" height="5" fill="rgb(245,245,245)"/><rect x="45" y="10" width="5" height="5" fill="rgb(244,244,244)"/><rect x="50" y="10" width="5" height="5" fill="rgb(245,245,245)"/><rect x="55" y="10" width="5" height="5" fill="rgb(252,252,252)"/><rect x="60" y="10" width="5" height="5" fill="rgb(244,244,244)"/><rect x="65" y="10" width="5" height="5" fill="rgb(249,249,249)"/><rect x="70" y="10" width="5" height="5" fill="rgb(248,248,248)"/></svg>
<div class="a" style="left:149px;top:319px;width:358px;height:5px;background:#f7f7f7"></div>
<div class="a" style="left:648px;top:319px;width:112px;height:5px;background:#f7f7f7"></div>
<div class="a" style="left:24px;top:378px;width:1232px;height:1px;background:#e4e4e7"></div>
<div class="a" style="left:48.299999999999955px;top:338px;width:76.5px;height:24px;background:#fafafa;border:1px solid #e4e4e7;border-radius:6px"></div>
<div class="t" style="left:56.792187499999955px;top:345.13px;font-size:12.6px;line-height:12.6px;font-weight:400;color:#3f3f46;">Muster AG</div>
<div class="a" style="left:575.3px;top:338px;width:54.5px;height:24px;background:#fafafa;border:1px solid #e4e4e7;border-radius:6px"></div>
<div class="t" style="left:583.640625px;top:345.13px;font-size:12.6px;line-height:12.6px;font-weight:400;color:#3f3f46;">female</div>
<div class="a" style="left:803.3px;top:338px;width:23.3px;height:24px;background:#fafafa;border:1px solid #e4e4e7;border-radius:6px"></div>
<div class="t" style="left:811.44609375px;top:345.13px;font-size:12.6px;line-height:12.6px;font-weight:400;color:#3f3f46;">2</div>
<div class="a" style="left:964.5px;top:338px;width:23px;height:24px;background:#fafafa;border:1px solid #e4e4e7;border-radius:6px"></div>
<div class="t" style="left:972.49609375px;top:345.13px;font-size:12.6px;line-height:12.6px;font-weight:400;color:#3f3f46;">0</div>
<div class="a" style="left:1066.5px;top:338px;width:69px;height:24px;background:#fafafa;border:1px solid #e4e4e7;border-radius:6px"></div>
<div class="t" style="left:1074.03046875px;top:345.13px;font-size:12.6px;line-height:12.6px;font-weight:400;color:#3f3f46;">John Doe</div>
<div class="t" style="left:1189.7px;top:343.98px;font-size:14.2px;line-height:14.2px;font-weight:700;color:#c8440d;">Select</div>
<svg class="a" style="left:162px;top:341px" width="115" height="25" shape-rendering="crispEdges"><rect x="0" y="0" width="5" height="5" fill="rgb(247,247,247)"/><rect x="5" y="0" width="5" height="5" fill="rgb(249,249,249)"/><rect x="10" y="0" width="5" height="5" fill="rgb(244,244,244)"/><rect x="15" y="0" width="5" height="5" fill="rgb(251,251,251)"/><rect x="20" y="0" width="5" height="5" fill="rgb(244,244,244)"/><rect x="25" y="0" width="5" height="5" fill="rgb(247,247,247)"/><rect x="30" y="0" width="5" height="5" fill="rgb(248,248,248)"/><rect x="40" y="0" width="5" height="5" fill="rgb(247,247,247)"/><rect x="45" y="0" width="5" height="5" fill="rgb(249,249,249)"/><rect x="50" y="0" width="5" height="5" fill="rgb(245,245,245)"/><rect x="55" y="0" width="5" height="5" fill="rgb(252,252,252)"/><rect x="65" y="0" width="5" height="5" fill="rgb(244,244,244)"/><rect x="85" y="0" width="5" height="5" fill="rgb(246,246,246)"/><rect x="90" y="0" width="5" height="5" fill="rgb(240,240,240)"/><rect x="95" y="0" width="5" height="5" fill="rgb(248,248,248)"/><rect x="100" y="0" width="5" height="5" fill="rgb(245,245,245)"/><rect x="105" y="0" width="5" height="5" fill="rgb(250,250,250)"/><rect x="110" y="0" width="5" height="5" fill="rgb(247,247,247)"/><rect x="0" y="5" width="5" height="5" fill="rgb(206,206,206)"/><rect x="5" y="5" width="5" height="5" fill="rgb(172,172,172)"/><rect x="10" y="5" width="5" height="5" fill="rgb(178,178,178)"/><rect x="15" y="5" width="5" height="5" fill="rgb(188,188,188)"/><rect x="20" y="5" width="5" height="5" fill="rgb(177,177,177)"/><rect x="25" y="5" width="5" height="5" fill="rgb(187,187,187)"/><rect x="30" y="5" width="5" height="5" fill="rgb(174,174,174)"/><rect x="35" y="5" width="5" height="5" fill="rgb(248,248,248)"/><rect x="40" y="5" width="5" height="5" fill="rgb(180,180,180)"/><rect x="45" y="5" width="5" height="5" fill="rgb(179,179,179)"/><rect x="50" y="5" width="5" height="5" fill="rgb(154,154,154)"/><rect x="55" y="5" width="5" height="5" fill="rgb(204,204,204)"/><rect x="60" y="5" width="5" height="5" fill="rgb(232,232,232)"/><rect x="65" y="5" width="5" height="5" fill="rgb(163,163,163)"/><rect x="70" y="5" width="5" height="5" fill="rgb(215,215,215)"/><rect x="75" y="5" width="5" height="5" fill="rgb(212,212,212)"/><rect x="80" y="5" width="5" height="5" fill="rgb(209,209,209)"/><rect x="85" y="5" width="5" height="5" fill="rgb(176,176,176)"/><rect x="90" y="5" width="5" height="5" fill="rgb(178,178,178)"/><rect x="95" y="5" width="5" height="5" fill="rgb(178,178,178)"/><rect x="100" y="5" width="5" height="5" fill="rgb(178,178,178)"/><rect x="105" y="5" width="5" height="5" fill="rgb(168,168,168)"/><rect x="110" y="5" width="5" height="5" fill="rgb(196,196,196)"/><rect x="0" y="10" width="5" height="5" fill="rgb(177,177,177)"/><rect x="5" y="10" width="5" height="5" fill="rgb(199,199,199)"/><rect x="10" y="10" width="5" height="5" fill="rgb(178,178,178)"/><rect x="15" y="10" width="5" height="5" fill="rgb(181,181,181)"/><rect x="20" y="10" width="5" height="5" fill="rgb(171,171,171)"/><rect x="25" y="10" width="5" height="5" fill="rgb(200,200,200)"/><rect x="30" y="10" width="5" height="5" fill="rgb(173,173,173)"/><rect x="35" y="10" width="5" height="5" fill="rgb(214,214,214)"/><rect x="40" y="10" width="5" height="5" fill="rgb(179,179,179)"/><rect x="45" y="10" width="5" height="5" fill="rgb(175,175,175)"/><rect x="50" y="10" width="5" height="5" fill="rgb(167,167,167)"/><rect x="55" y="10" width="5" height="5" fill="rgb(178,178,178)"/><rect x="60" y="10" width="5" height="5" fill="rgb(214,214,214)"/><rect x="65" y="10" width="5" height="5" fill="rgb(173,173,173)"/><rect x="70" y="10" width="5" height="5" fill="rgb(171,171,171)"/><rect x="75" y="10" width="5" height="5" fill="rgb(148,148,148)"/><rect x="80" y="10" width="5" height="5" fill="rgb(178,178,178)"/><rect x="85" y="10" width="5" height="5" fill="rgb(173,173,173)"/><rect x="90" y="10" width="5" height="5" fill="rgb(189,189,189)"/><rect x="95" y="10" width="5" height="5" fill="rgb(199,199,199)"/><rect x="100" y="10" width="5" height="5" fill="rgb(178,178,178)"/><rect x="105" y="10" width="5" height="5" fill="rgb(169,169,169)"/><rect x="110" y="10" width="5" height="5" fill="rgb(175,175,175)"/><rect x="0" y="15" width="5" height="5" fill="rgb(242,242,242)"/><rect x="5" y="15" width="5" height="5" fill="rgb(246,246,246)"/><rect x="10" y="15" width="5" height="5" fill="rgb(245,245,245)"/><rect x="15" y="15" width="5" height="5" fill="rgb(248,248,248)"/><rect x="20" y="15" width="5" height="5" fill="rgb(240,240,240)"/><rect x="25" y="15" width="5" height="5" fill="rgb(245,245,245)"/><rect x="30" y="15" width="5" height="5" fill="rgb(248,248,248)"/><rect x="40" y="15" width="5" height="5" fill="rgb(247,247,247)"/><rect x="45" y="15" width="5" height="5" fill="rgb(249,249,249)"/><rect x="50" y="15" width="5" height="5" fill="rgb(244,244,244)"/><rect x="55" y="15" width="5" height="5" fill="rgb(252,252,252)"/><rect x="65" y="15" width="5" height="5" fill="rgb(244,244,244)"/><rect x="70" y="15" width="5" height="5" fill="rgb(247,247,247)"/><rect x="75" y="15" width="5" height="5" fill="rgb(244,244,244)"/><rect x="85" y="15" width="5" height="5" fill="rgb(250,250,250)"/><rect x="90" y="15" width="5" height="5" fill="rgb(250,250,250)"/><rect x="100" y="15" width="5" height="5" fill="rgb(245,245,245)"/><rect x="105" y="15" width="5" height="5" fill="rgb(250,250,250)"/><rect x="110" y="15" width="5" height="5" fill="rgb(247,247,247)"/></svg>
<svg class="a" style="left:317px;top:341px" width="45" height="25" shape-rendering="crispEdges"><rect x="0" y="0" width="5" height="5" fill="rgb(247,247,247)"/><rect x="5" y="0" width="5" height="5" fill="rgb(252,252,252)"/><rect x="10" y="0" width="5" height="5" fill="rgb(250,250,250)"/><rect x="20" y="0" width="5" height="5" fill="rgb(249,249,249)"/><rect x="25" y="0" width="5" height="5" fill="rgb(249,249,249)"/><rect x="0" y="5" width="5" height="5" fill="rgb(147,147,147)"/><rect x="5" y="5" width="5" height="5" fill="rgb(189,189,189)"/><rect x="10" y="5" width="5" height="5" fill="rgb(177,177,177)"/><rect x="15" y="5" width="5" height="5" fill="rgb(205,205,205)"/><rect x="20" y="5" width="5" height="5" fill="rgb(163,163,163)"/><rect x="25" y="5" width="5" height="5" fill="rgb(180,180,180)"/><rect x="30" y="5" width="5" height="5" fill="rgb(209,209,209)"/><rect x="35" y="5" width="5" height="5" fill="rgb(210,210,210)"/><rect x="40" y="5" width="5" height="5" fill="rgb(208,208,208)"/><rect x="0" y="10" width="5" height="5" fill="rgb(165,165,165)"/><rect x="5" y="10" width="5" height="5" fill="rgb(161,161,161)"/><rect x="10" y="10" width="5" height="5" fill="rgb(174,174,174)"/><rect x="15" y="10" width="5" height="5" fill="rgb(173,173,173)"/><rect x="20" y="10" width="5" height="5" fill="rgb(135,135,135)"/><rect x="25" y="10" width="5" height="5" fill="rgb(179,179,179)"/><rect x="30" y="10" width="5" height="5" fill="rgb(151,151,151)"/><rect x="35" y="10" width="5" height="5" fill="rgb(159,159,159)"/><rect x="40" y="10" width="5" height="5" fill="rgb(192,192,192)"/><rect x="0" y="15" width="5" height="5" fill="rgb(249,249,249)"/><rect x="5" y="15" width="5" height="5" fill="rgb(248,248,248)"/><rect x="10" y="15" width="5" height="5" fill="rgb(250,250,250)"/><rect x="15" y="15" width="5" height="5" fill="rgb(243,243,243)"/><rect x="20" y="15" width="5" height="5" fill="rgb(245,245,245)"/><rect x="25" y="15" width="5" height="5" fill="rgb(249,249,249)"/><rect x="30" y="15" width="5" height="5" fill="rgb(247,247,247)"/><rect x="35" y="15" width="5" height="5" fill="rgb(246,246,246)"/><rect x="40" y="15" width="5" height="5" fill="rgb(251,251,251)"/></svg>
<svg class="a" style="left:447px;top:341px" width="50" height="25" shape-rendering="crispEdges"><rect x="0" y="0" width="5" height="5" fill="rgb(249,249,249)"/><rect x="5" y="0" width="5" height="5" fill="rgb(245,245,245)"/><rect x="10" y="0" width="5" height="5" fill="rgb(250,250,250)"/><rect x="35" y="0" width="5" height="5" fill="rgb(248,248,248)"/><rect x="0" y="5" width="5" height="5" fill="rgb(184,184,184)"/><rect x="5" y="5" width="5" height="5" fill="rgb(204,204,204)"/><rect x="10" y="5" width="5" height="5" fill="rgb(183,183,183)"/><rect x="15" y="5" width="5" height="5" fill="rgb(206,206,206)"/><rect x="20" y="5" width="5" height="5" fill="rgb(223,223,223)"/><rect x="25" y="5" width="5" height="5" fill="rgb(227,227,227)"/><rect x="30" y="5" width="5" height="5" fill="rgb(209,209,209)"/><rect x="35" y="5" width="5" height="5" fill="rgb(167,167,167)"/><rect x="40" y="5" width="5" height="5" fill="rgb(210,210,210)"/><rect x="45" y="5" width="5" height="5" fill="rgb(215,215,215)"/><rect x="0" y="10" width="5" height="5" fill="rgb(184,184,184)"/><rect x="5" y="10" width="5" height="5" fill="rgb(205,205,205)"/><rect x="10" y="10" width="5" height="5" fill="rgb(167,167,167)"/><rect x="15" y="10" width="5" height="5" fill="rgb(148,148,148)"/><rect x="20" y="10" width="5" height="5" fill="rgb(162,162,162)"/><rect x="25" y="10" width="5" height="5" fill="rgb(171,171,171)"/><rect x="30" y="10" width="5" height="5" fill="rgb(173,173,173)"/><rect x="35" y="10" width="5" height="5" fill="rgb(152,152,152)"/><rect x="40" y="10" width="5" height="5" fill="rgb(161,161,161)"/><rect x="45" y="10" width="5" height="5" fill="rgb(156,156,156)"/><rect x="0" y="15" width="5" height="5" fill="rgb(249,249,249)"/><rect x="5" y="15" width="5" height="5" fill="rgb(246,246,246)"/><rect x="10" y="15" width="5" height="5" fill="rgb(248,248,248)"/><rect x="15" y="15" width="5" height="5" fill="rgb(244,244,244)"/><rect x="20" y="15" width="5" height="5" fill="rgb(246,246,246)"/><rect x="25" y="15" width="5" height="5" fill="rgb(245,245,245)"/><rect x="30" y="15" width="5" height="5" fill="rgb(246,246,246)"/><rect x="35" y="15" width="5" height="5" fill="rgb(246,246,246)"/><rect x="40" y="15" width="5" height="5" fill="rgb(246,246,246)"/><rect x="45" y="15" width="5" height="5" fill="rgb(245,245,245)"/></svg>
<svg class="a" style="left:661px;top:345px" width="75" height="25" shape-rendering="crispEdges"><rect x="0" y="0" width="5" height="5" fill="rgb(175,175,175)"/><rect x="5" y="0" width="5" height="5" fill="rgb(180,180,180)"/><rect x="10" y="0" width="5" height="5" fill="rgb(156,156,156)"/><rect x="15" y="0" width="5" height="5" fill="rgb(230,230,230)"/><rect x="20" y="0" width="5" height="5" fill="rgb(181,181,181)"/><rect x="25" y="0" width="5" height="5" fill="rgb(170,170,170)"/><rect x="30" y="0" width="5" height="5" fill="rgb(147,147,147)"/><rect x="35" y="0" width="5" height="5" fill="rgb(233,233,233)"/><rect x="40" y="0" width="5" height="5" fill="rgb(222,222,222)"/><rect x="45" y="0" width="5" height="5" fill="rgb(190,190,190)"/><rect x="50" y="0" width="5" height="5" fill="rgb(165,165,165)"/><rect x="55" y="0" width="5" height="5" fill="rgb(163,163,163)"/><rect x="60" y="0" width="5" height="5" fill="rgb(139,139,139)"/><rect x="65" y="0" width="5" height="5" fill="rgb(155,155,155)"/><rect x="70" y="0" width="5" height="5" fill="rgb(192,192,192)"/><rect x="0" y="5" width="5" height="5" fill="rgb(183,183,183)"/><rect x="5" y="5" width="5" height="5" fill="rgb(183,183,183)"/><rect x="10" y="5" width="5" height="5" fill="rgb(177,177,177)"/><rect x="15" y="5" width="5" height="5" fill="rgb(201,201,201)"/><rect x="20" y="5" width="5" height="5" fill="rgb(178,178,178)"/><rect x="25" y="5" width="5" height="5" fill="rgb(183,183,183)"/><rect x="30" y="5" width="5" height="5" fill="rgb(180,180,180)"/><rect x="35" y="5" width="5" height="5" fill="rgb(191,191,191)"/><rect x="40" y="5" width="5" height="5" fill="rgb(209,209,209)"/><rect x="45" y="5" width="5" height="5" fill="rgb(182,182,182)"/><rect x="50" y="5" width="5" height="5" fill="rgb(190,190,190)"/><rect x="55" y="5" width="5" height="5" fill="rgb(165,165,165)"/><rect x="60" y="5" width="5" height="5" fill="rgb(165,165,165)"/><rect x="65" y="5" width="5" height="5" fill="rgb(184,184,184)"/><rect x="70" y="5" width="5" height="5" fill="rgb(177,177,177)"/><rect x="0" y="10" width="5" height="5" fill="rgb(246,246,246)"/><rect x="5" y="10" width="5" height="5" fill="rgb(250,250,250)"/><rect x="10" y="10" width="5" height="5" fill="rgb(244,244,244)"/><rect x="20" y="10" width="5" height="5" fill="rgb(249,249,249)"/><rect x="25" y="10" width="5" height="5" fill="rgb(249,249,249)"/><rect x="30" y="10" width="5" height="5" fill="rgb(244,244,244)"/><rect x="40" y="10" width="5" height="5" fill="rgb(248,248,248)"/><rect x="45" y="10" width="5" height="5" fill="rgb(242,242,242)"/><rect x="50" y="10" width="5" height="5" fill="rgb(246,246,246)"/><rect x="55" y="10" width="5" height="5" fill="rgb(251,251,251)"/><rect x="60" y="10" width="5" height="5" fill="rgb(244,244,244)"/><rect x="65" y="10" width="5" height="5" fill="rgb(249,249,249)"/><rect x="70" y="10" width="5" height="5" fill="rgb(247,247,247)"/></svg>
<div class="a" style="left:149px;top:376px;width:358px;height:5px;background:#f7f7f7"></div>
<div class="a" style="left:648px;top:376px;width:112px;height:5px;background:#f7f7f7"></div>
<div class="a" style="left:24px;top:435px;width:1232px;height:1px;background:#e4e4e7"></div>
<div class="a" style="left:48.299999999999955px;top:395px;width:76.5px;height:24px;background:#fafafa;border:1px solid #e4e4e7;border-radius:6px"></div>
<div class="t" style="left:56.792187499999955px;top:402.13px;font-size:12.6px;line-height:12.6px;font-weight:400;color:#3f3f46;">Muster AG</div>
<div class="a" style="left:575.3px;top:395px;width:42.2px;height:24px;background:#fafafa;border:1px solid #e4e4e7;border-radius:6px"></div>
<div class="t" style="left:582.7445312499999px;top:402.13px;font-size:12.6px;line-height:12.6px;font-weight:400;color:#3f3f46;">male</div>
<div class="a" style="left:803.3px;top:395px;width:23.3px;height:24px;background:#fafafa;border:1px solid #e4e4e7;border-radius:6px"></div>
<div class="t" style="left:811.44609375px;top:402.13px;font-size:12.6px;line-height:12.6px;font-weight:400;color:#3f3f46;">1</div>
<div class="a" style="left:964.5px;top:395px;width:23px;height:24px;background:#fafafa;border:1px solid #e4e4e7;border-radius:6px"></div>
<div class="t" style="left:972.49609375px;top:402.13px;font-size:12.6px;line-height:12.6px;font-weight:400;color:#3f3f46;">2</div>
<div class="a" style="left:1066.5px;top:395px;width:69px;height:24px;background:#fafafa;border:1px solid #e4e4e7;border-radius:6px"></div>
<div class="t" style="left:1074.03046875px;top:402.13px;font-size:12.6px;line-height:12.6px;font-weight:400;color:#3f3f46;">John Doe</div>
<div class="t" style="left:1189.7px;top:400.98px;font-size:14.2px;line-height:14.2px;font-weight:700;color:#c8440d;">Select</div>
<svg class="a" style="left:162px;top:398px" width="115" height="25" shape-rendering="crispEdges"><rect x="0" y="0" width="5" height="5" fill="rgb(246,246,246)"/><rect x="5" y="0" width="5" height="5" fill="rgb(250,250,250)"/><rect x="10" y="0" width="5" height="5" fill="rgb(244,244,244)"/><rect x="15" y="0" width="5" height="5" fill="rgb(252,252,252)"/><rect x="20" y="0" width="5" height="5" fill="rgb(249,249,249)"/><rect x="25" y="0" width="5" height="5" fill="rgb(241,241,241)"/><rect x="40" y="0" width="5" height="5" fill="rgb(246,246,246)"/><rect x="45" y="0" width="5" height="5" fill="rgb(247,247,247)"/><rect x="50" y="0" width="5" height="5" fill="rgb(250,250,250)"/><rect x="60" y="0" width="5" height="5" fill="rgb(249,249,249)"/><rect x="65" y="0" width="5" height="5" fill="rgb(249,249,249)"/><rect x="70" y="0" width="5" height="5" fill="rgb(248,248,248)"/><rect x="75" y="0" width="5" height="5" fill="rgb(246,246,246)"/><rect x="80" y="0" width="5" height="5" fill="rgb(248,248,248)"/><rect x="85" y="0" width="5" height="5" fill="rgb(247,247,247)"/><rect x="90" y="0" width="5" height="5" fill="rgb(246,246,246)"/><rect x="95" y="0" width="5" height="5" fill="rgb(248,248,248)"/><rect x="100" y="0" width="5" height="5" fill="rgb(240,240,240)"/><rect x="105" y="0" width="5" height="5" fill="rgb(250,250,250)"/><rect x="110" y="0" width="5" height="5" fill="rgb(250,250,250)"/><rect x="0" y="5" width="5" height="5" fill="rgb(204,204,204)"/><rect x="5" y="5" width="5" height="5" fill="rgb(169,169,169)"/><rect x="10" y="5" width="5" height="5" fill="rgb(175,175,175)"/><rect x="15" y="5" width="5" height="5" fill="rgb(196,196,196)"/><rect x="20" y="5" width="5" height="5" fill="rgb(181,181,181)"/><rect x="25" y="5" width="5" height="5" fill="rgb(166,166,166)"/><rect x="30" y="5" width="5" height="5" fill="rgb(241,241,241)"/><rect x="35" y="5" width="5" height="5" fill="rgb(202,202,202)"/><rect x="40" y="5" width="5" height="5" fill="rgb(176,176,176)"/><rect x="45" y="5" width="5" height="5" fill="rgb(165,165,165)"/><rect x="50" y="5" width="5" height="5" fill="rgb(186,186,186)"/><rect x="55" y="5" width="5" height="5" fill="rgb(246,246,246)"/><rect x="60" y="5" width="5" height="5" fill="rgb(162,162,162)"/><rect x="65" y="5" width="5" height="5" fill="rgb(181,181,181)"/><rect x="70" y="5" width="5" height="5" fill="rgb(172,172,172)"/><rect x="75" y="5" width="5" height="5" fill="rgb(195,195,195)"/><rect x="80" y="5" width="5" height="5" fill="rgb(152,152,152)"/><rect x="85" y="5" width="5" height="5" fill="rgb(171,171,171)"/><rect x="90" y="5" width="5" height="5" fill="rgb(164,164,164)"/><rect x="95" y="5" width="5" height="5" fill="rgb(188,188,188)"/><rect x="100" y="5" width="5" height="5" fill="rgb(178,178,178)"/><rect x="105" y="5" width="5" height="5" fill="rgb(209,209,209)"/><rect x="110" y="5" width="5" height="5" fill="rgb(199,199,199)"/><rect x="0" y="10" width="5" height="5" fill="rgb(178,178,178)"/><rect x="5" y="10" width="5" height="5" fill="rgb(193,193,193)"/><rect x="10" y="10" width="5" height="5" fill="rgb(175,175,175)"/><rect x="15" y="10" width="5" height="5" fill="rgb(199,199,199)"/><rect x="20" y="10" width="5" height="5" fill="rgb(172,172,172)"/><rect x="25" y="10" width="5" height="5" fill="rgb(177,177,177)"/><rect x="30" y="10" width="5" height="5" fill="rgb(197,197,197)"/><rect x="35" y="10" width="5" height="5" fill="rgb(190,190,190)"/><rect x="40" y="10" width="5" height="5" fill="rgb(176,176,176)"/><rect x="45" y="10" width="5" height="5" fill="rgb(170,170,170)"/><rect x="50" y="10" width="5" height="5" fill="rgb(174,174,174)"/><rect x="55" y="10" width="5" height="5" fill="rgb(203,203,203)"/><rect x="60" y="10" width="5" height="5" fill="rgb(158,158,158)"/><rect x="65" y="10" width="5" height="5" fill="rgb(197,197,197)"/><rect x="70" y="10" width="5" height="5" fill="rgb(169,169,169)"/><rect x="75" y="10" width="5" height="5" fill="rgb(171,171,171)"/><rect x="80" y="10" width="5" height="5" fill="rgb(198,198,198)"/><rect x="85" y="10" width="5" height="5" fill="rgb(166,166,166)"/><rect x="90" y="10" width="5" height="5" fill="rgb(173,173,173)"/><rect x="95" y="10" width="5" height="5" fill="rgb(192,192,192)"/><rect x="100" y="10" width="5" height="5" fill="rgb(194,194,194)"/><rect x="105" y="10" width="5" height="5" fill="rgb(227,227,227)"/><rect x="110" y="10" width="5" height="5" fill="rgb(183,183,183)"/><rect x="0" y="15" width="5" height="5" fill="rgb(242,242,242)"/><rect x="5" y="15" width="5" height="5" fill="rgb(247,247,247)"/><rect x="10" y="15" width="5" height="5" fill="rgb(245,245,245)"/><rect x="15" y="15" width="5" height="5" fill="rgb(247,247,247)"/><rect x="20" y="15" width="5" height="5" fill="rgb(242,242,242)"/><rect x="25" y="15" width="5" height="5" fill="rgb(244,244,244)"/><rect x="40" y="15" width="5" height="5" fill="rgb(246,246,246)"/><rect x="45" y="15" width="5" height="5" fill="rgb(247,247,247)"/><rect x="50" y="15" width="5" height="5" fill="rgb(249,249,249)"/><rect x="60" y="15" width="5" height="5" fill="rgb(251,251,251)"/><rect x="65" y="15" width="5" height="5" fill="rgb(248,248,248)"/><rect x="70" y="15" width="5" height="5" fill="rgb(248,248,248)"/><rect x="75" y="15" width="5" height="5" fill="rgb(241,241,241)"/><rect x="80" y="15" width="5" height="5" fill="rgb(245,245,245)"/><rect x="85" y="15" width="5" height="5" fill="rgb(247,247,247)"/><rect x="90" y="15" width="5" height="5" fill="rgb(246,246,246)"/><rect x="95" y="15" width="5" height="5" fill="rgb(250,250,250)"/><rect x="100" y="15" width="5" height="5" fill="rgb(250,250,250)"/><rect x="105" y="15" width="5" height="5" fill="rgb(248,248,248)"/><rect x="110" y="15" width="5" height="5" fill="rgb(243,243,243)"/></svg>
<svg class="a" style="left:317px;top:398px" width="25" height="25" shape-rendering="crispEdges"><rect x="0" y="0" width="5" height="5" fill="rgb(251,251,251)"/><rect x="5" y="0" width="5" height="5" fill="rgb(250,250,250)"/><rect x="15" y="0" width="5" height="5" fill="rgb(251,251,251)"/><rect x="20" y="0" width="5" height="5" fill="rgb(252,252,252)"/><rect x="0" y="5" width="5" height="5" fill="rgb(182,182,182)"/><rect x="5" y="5" width="5" height="5" fill="rgb(178,178,178)"/><rect x="10" y="5" width="5" height="5" fill="rgb(208,208,208)"/><rect x="15" y="5" width="5" height="5" fill="rgb(186,186,186)"/><rect x="20" y="5" width="5" height="5" fill="rgb(180,180,180)"/><rect x="0" y="10" width="5" height="5" fill="rgb(195,195,195)"/><rect x="5" y="10" width="5" height="5" fill="rgb(163,163,163)"/><rect x="10" y="10" width="5" height="5" fill="rgb(174,174,174)"/><rect x="15" y="10" width="5" height="5" fill="rgb(159,159,159)"/><rect x="20" y="10" width="5" height="5" fill="rgb(163,163,163)"/><rect x="0" y="15" width="5" height="5" fill="rgb(251,251,251)"/><rect x="5" y="15" width="5" height="5" fill="rgb(249,249,249)"/><rect x="10" y="15" width="5" height="5" fill="rgb(245,245,245)"/><rect x="15" y="15" width="5" height="5" fill="rgb(249,249,249)"/><rect x="20" y="15" width="5" height="5" fill="rgb(244,244,244)"/></svg>
<svg class="a" style="left:447px;top:398px" width="25" height="25" shape-rendering="crispEdges"><rect x="0" y="0" width="5" height="5" fill="rgb(250,250,250)"/><rect x="5" y="0" width="5" height="5" fill="rgb(250,250,250)"/><rect x="0" y="5" width="5" height="5" fill="rgb(160,160,160)"/><rect x="5" y="5" width="5" height="5" fill="rgb(211,211,211)"/><rect x="10" y="5" width="5" height="5" fill="rgb(227,227,227)"/><rect x="15" y="5" width="5" height="5" fill="rgb(211,211,211)"/><rect x="20" y="5" width="5" height="5" fill="rgb(189,189,189)"/><rect x="0" y="10" width="5" height="5" fill="rgb(169,169,169)"/><rect x="5" y="10" width="5" height="5" fill="rgb(179,179,179)"/><rect x="10" y="10" width="5" height="5" fill="rgb(170,170,170)"/><rect x="15" y="10" width="5" height="5" fill="rgb(183,183,183)"/><rect x="20" y="10" width="5" height="5" fill="rgb(190,190,190)"/><rect x="0" y="15" width="5" height="5" fill="rgb(251,251,251)"/><rect x="5" y="15" width="5" height="5" fill="rgb(247,247,247)"/><rect x="10" y="15" width="5" height="5" fill="rgb(244,244,244)"/><rect x="15" y="15" width="5" height="5" fill="rgb(250,250,250)"/><rect x="20" y="15" width="5" height="5" fill="rgb(248,248,248)"/></svg>
<svg class="a" style="left:661px;top:402px" width="75" height="25" shape-rendering="crispEdges"><rect x="0" y="0" width="5" height="5" fill="rgb(168,168,168)"/><rect x="5" y="0" width="5" height="5" fill="rgb(212,212,212)"/><rect x="10" y="0" width="5" height="5" fill="rgb(194,194,194)"/><rect x="15" y="0" width="5" height="5" fill="rgb(248,248,248)"/><rect x="20" y="0" width="5" height="5" fill="rgb(182,182,182)"/><rect x="25" y="0" width="5" height="5" fill="rgb(195,195,195)"/><rect x="30" y="0" width="5" height="5" fill="rgb(171,171,171)"/><rect x="35" y="0" width="5" height="5" fill="rgb(252,252,252)"/><rect x="40" y="0" width="5" height="5" fill="rgb(200,200,200)"/><rect x="45" y="0" width="5" height="5" fill="rgb(203,203,203)"/><rect x="50" y="0" width="5" height="5" fill="rgb(155,155,155)"/><rect x="55" y="0" width="5" height="5" fill="rgb(162,162,162)"/><rect x="60" y="0" width="5" height="5" fill="rgb(163,163,163)"/><rect x="65" y="0" width="5" height="5" fill="rgb(174,174,174)"/><rect x="70" y="0" width="5" height="5" fill="rgb(166,166,166)"/><rect x="0" y="5" width="5" height="5" fill="rgb(171,171,171)"/><rect x="5" y="5" width="5" height="5" fill="rgb(207,207,207)"/><rect x="10" y="5" width="5" height="5" fill="rgb(181,181,181)"/><rect x="15" y="5" width="5" height="5" fill="rgb(213,213,213)"/><rect x="20" y="5" width="5" height="5" fill="rgb(168,168,168)"/><rect x="25" y="5" width="5" height="5" fill="rgb(224,224,224)"/><rect x="30" y="5" width="5" height="5" fill="rgb(167,167,167)"/><rect x="35" y="5" width="5" height="5" fill="rgb(220,220,220)"/><rect x="40" y="5" width="5" height="5" fill="rgb(198,198,198)"/><rect x="45" y="5" width="5" height="5" fill="rgb(196,196,196)"/><rect x="50" y="5" width="5" height="5" fill="rgb(178,178,178)"/><rect x="55" y="5" width="5" height="5" fill="rgb(166,166,166)"/><rect x="60" y="5" width="5" height="5" fill="rgb(166,166,166)"/><rect x="65" y="5" width="5" height="5" fill="rgb(191,191,191)"/><rect x="70" y="5" width="5" height="5" fill="rgb(171,171,171)"/><rect x="0" y="10" width="5" height="5" fill="rgb(240,240,240)"/><rect x="5" y="10" width="5" height="5" fill="rgb(243,243,243)"/><rect x="10" y="10" width="5" height="5" fill="rgb(243,243,243)"/><rect x="20" y="10" width="5" height="5" fill="rgb(241,241,241)"/><rect x="25" y="10" width="5" height="5" fill="rgb(246,246,246)"/><rect x="30" y="10" width="5" height="5" fill="rgb(240,240,240)"/><rect x="40" y="10" width="5" height="5" fill="rgb(245,245,245)"/><rect x="45" y="10" width="5" height="5" fill="rgb(244,244,244)"/><rect x="50" y="10" width="5" height="5" fill="rgb(245,245,245)"/><rect x="55" y="10" width="5" height="5" fill="rgb(252,252,252)"/><rect x="60" y="10" width="5" height="5" fill="rgb(244,244,244)"/><rect x="65" y="10" width="5" height="5" fill="rgb(249,249,249)"/><rect x="70" y="10" width="5" height="5" fill="rgb(248,248,248)"/></svg>
<div class="a" style="left:149px;top:433px;width:358px;height:5px;background:#f7f7f7"></div>
<div class="a" style="left:648px;top:433px;width:112px;height:5px;background:#f7f7f7"></div>
<div class="a" style="left:24px;top:492px;width:1232px;height:1px;background:#e4e4e7"></div>
<div class="a" style="left:48.299999999999955px;top:452px;width:76.5px;height:24px;background:#fafafa;border:1px solid #e4e4e7;border-radius:6px"></div>
<div class="t" style="left:56.792187499999955px;top:459.13px;font-size:12.6px;line-height:12.6px;font-weight:400;color:#3f3f46;">Muster AG</div>
<div class="a" style="left:575.3px;top:452px;width:42.2px;height:24px;background:#fafafa;border:1px solid #e4e4e7;border-radius:6px"></div>
<div class="t" style="left:582.7445312499999px;top:459.13px;font-size:12.6px;line-height:12.6px;font-weight:400;color:#3f3f46;">male</div>
<div class="a" style="left:803.3px;top:452px;width:23.3px;height:24px;background:#fafafa;border:1px solid #e4e4e7;border-radius:6px"></div>
<div class="t" style="left:811.44609375px;top:459.13px;font-size:12.6px;line-height:12.6px;font-weight:400;color:#3f3f46;">1</div>
<div class="a" style="left:964.5px;top:452px;width:23px;height:24px;background:#fafafa;border:1px solid #e4e4e7;border-radius:6px"></div>
<div class="t" style="left:972.49609375px;top:459.13px;font-size:12.6px;line-height:12.6px;font-weight:400;color:#3f3f46;">2</div>
<div class="a" style="left:1063px;top:450px;width:94.5px;height:30px;background:#f9f9f9;border-radius:3px"></div>
<svg class="a" style="left:1073px;top:460px" width="75" height="25" shape-rendering="crispEdges"><rect x="0" y="0" width="5" height="5" fill="rgb(212,212,212)"/><rect x="5" y="0" width="5" height="5" fill="rgb(188,188,188)"/><rect x="10" y="0" width="5" height="5" fill="rgb(209,209,209)"/><rect x="15" y="0" width="5" height="5" fill="rgb(210,210,210)"/><rect x="20" y="0" width="5" height="5" fill="rgb(212,212,212)"/><rect x="25" y="0" width="5" height="5" fill="rgb(239,239,239)"/><rect x="30" y="0" width="5" height="5" fill="rgb(153,153,153)"/><rect x="35" y="0" width="5" height="5" fill="rgb(190,190,190)"/><rect x="40" y="0" width="5" height="5" fill="rgb(213,213,213)"/><rect x="45" y="0" width="5" height="5" fill="rgb(215,215,215)"/><rect x="50" y="0" width="5" height="5" fill="rgb(217,217,217)"/><rect x="55" y="0" width="5" height="5" fill="rgb(191,191,191)"/><rect x="60" y="0" width="5" height="5" fill="rgb(223,223,223)"/><rect x="65" y="0" width="5" height="5" fill="rgb(217,217,217)"/><rect x="70" y="0" width="5" height="5" fill="rgb(219,219,219)"/><rect x="0" y="5" width="5" height="5" fill="rgb(195,195,195)"/><rect x="5" y="5" width="5" height="5" fill="rgb(180,180,180)"/><rect x="10" y="5" width="5" height="5" fill="rgb(187,187,187)"/><rect x="15" y="5" width="5" height="5" fill="rgb(179,179,179)"/><rect x="20" y="5" width="5" height="5" fill="rgb(176,176,176)"/><rect x="25" y="5" width="5" height="5" fill="rgb(236,236,236)"/><rect x="30" y="5" width="5" height="5" fill="rgb(178,178,178)"/><rect x="35" y="5" width="5" height="5" fill="rgb(169,169,169)"/><rect x="40" y="5" width="5" height="5" fill="rgb(200,200,200)"/><rect x="45" y="5" width="5" height="5" fill="rgb(180,180,180)"/><rect x="50" y="5" width="5" height="5" fill="rgb(189,189,189)"/><rect x="55" y="5" width="5" height="5" fill="rgb(174,174,174)"/><rect x="60" y="5" width="5" height="5" fill="rgb(179,179,179)"/><rect x="65" y="5" width="5" height="5" fill="rgb(174,174,174)"/><rect x="70" y="5" width="5" height="5" fill="rgb(200,200,200)"/><rect x="0" y="10" width="5" height="5" fill="rgb(247,247,247)"/><rect x="5" y="10" width="5" height="5" fill="rgb(250,250,250)"/><rect x="10" y="10" width="5" height="5" fill="rgb(249,249,249)"/><rect x="15" y="10" width="5" height="5" fill="rgb(237,237,237)"/><rect x="20" y="10" width="5" height="5" fill="rgb(202,202,202)"/><rect x="25" y="10" width="5" height="5" fill="rgb(252,252,252)"/><rect x="30" y="10" width="5" height="5" fill="rgb(243,243,243)"/><rect x="35" y="10" width="5" height="5" fill="rgb(249,249,249)"/><rect x="40" y="10" width="5" height="5" fill="rgb(251,251,251)"/><rect x="45" y="10" width="5" height="5" fill="rgb(247,247,247)"/><rect x="50" y="10" width="5" height="5" fill="rgb(247,247,247)"/><rect x="55" y="10" width="5" height="5" fill="rgb(250,250,250)"/><rect x="60" y="10" width="5" height="5" fill="rgb(249,249,249)"/><rect x="65" y="10" width="5" height="5" fill="rgb(247,247,247)"/><rect x="70" y="10" width="5" height="5" fill="rgb(251,251,251)"/></svg>
<div class="t" style="left:1189.7px;top:457.98px;font-size:14.2px;line-height:14.2px;font-weight:700;color:#c8440d;">Select</div>
<svg class="a" style="left:162px;top:455px" width="120" height="25" shape-rendering="crispEdges"><rect x="0" y="0" width="5" height="5" fill="rgb(247,247,247)"/><rect x="5" y="0" width="5" height="5" fill="rgb(250,250,250)"/><rect x="10" y="0" width="5" height="5" fill="rgb(244,244,244)"/><rect x="15" y="0" width="5" height="5" fill="rgb(251,251,251)"/><rect x="20" y="0" width="5" height="5" fill="rgb(245,245,245)"/><rect x="25" y="0" width="5" height="5" fill="rgb(246,246,246)"/><rect x="30" y="0" width="5" height="5" fill="rgb(251,251,251)"/><rect x="40" y="0" width="5" height="5" fill="rgb(245,245,245)"/><rect x="45" y="0" width="5" height="5" fill="rgb(251,251,251)"/><rect x="50" y="0" width="5" height="5" fill="rgb(244,244,244)"/><rect x="60" y="0" width="5" height="5" fill="rgb(244,244,244)"/><rect x="65" y="0" width="5" height="5" fill="rgb(245,245,245)"/><rect x="70" y="0" width="5" height="5" fill="rgb(248,248,248)"/><rect x="80" y="0" width="5" height="5" fill="rgb(244,244,244)"/><rect x="90" y="0" width="5" height="5" fill="rgb(249,249,249)"/><rect x="95" y="0" width="5" height="5" fill="rgb(245,245,245)"/><rect x="100" y="0" width="5" height="5" fill="rgb(251,251,251)"/><rect x="105" y="0" width="5" height="5" fill="rgb(244,244,244)"/><rect x="115" y="0" width="5" height="5" fill="rgb(248,248,248)"/><rect x="0" y="5" width="5" height="5" fill="rgb(205,205,205)"/><rect x="5" y="5" width="5" height="5" fill="rgb(169,169,169)"/><rect x="10" y="5" width="5" height="5" fill="rgb(179,179,179)"/><rect x="15" y="5" width="5" height="5" fill="rgb(191,191,191)"/><rect x="20" y="5" width="5" height="5" fill="rgb(174,174,174)"/><rect x="25" y="5" width="5" height="5" fill="rgb(185,185,185)"/><rect x="30" y="5" width="5" height="5" fill="rgb(193,193,193)"/><rect x="35" y="5" width="5" height="5" fill="rgb(234,234,234)"/><rect x="40" y="5" width="5" height="5" fill="rgb(179,179,179)"/><rect x="45" y="5" width="5" height="5" fill="rgb(166,166,166)"/><rect x="50" y="5" width="5" height="5" fill="rgb(156,156,156)"/><rect x="55" y="5" width="5" height="5" fill="rgb(240,240,240)"/><rect x="60" y="5" width="5" height="5" fill="rgb(218,218,218)"/><rect x="65" y="5" width="5" height="5" fill="rgb(188,188,188)"/><rect x="70" y="5" width="5" height="5" fill="rgb(175,175,175)"/><rect x="75" y="5" width="5" height="5" fill="rgb(228,228,228)"/><rect x="80" y="5" width="5" height="5" fill="rgb(176,176,176)"/><rect x="85" y="5" width="5" height="5" fill="rgb(191,191,191)"/><rect x="90" y="5" width="5" height="5" fill="rgb(173,173,173)"/><rect x="95" y="5" width="5" height="5" fill="rgb(178,178,178)"/><rect x="100" y="5" width="5" height="5" fill="rgb(187,187,187)"/><rect x="105" y="5" width="5" height="5" fill="rgb(176,176,176)"/><rect x="110" y="5" width="5" height="5" fill="rgb(212,212,212)"/><rect x="115" y="5" width="5" height="5" fill="rgb(170,170,170)"/><rect x="0" y="10" width="5" height="5" fill="rgb(178,178,178)"/><rect x="5" y="10" width="5" height="5" fill="rgb(196,196,196)"/><rect x="10" y="10" width="5" height="5" fill="rgb(179,179,179)"/><rect x="15" y="10" width="5" height="5" fill="rgb(180,180,180)"/><rect x="20" y="10" width="5" height="5" fill="rgb(178,178,178)"/><rect x="25" y="10" width="5" height="5" fill="rgb(196,196,196)"/><rect x="30" y="10" width="5" height="5" fill="rgb(181,181,181)"/><rect x="35" y="10" width="5" height="5" fill="rgb(208,208,208)"/><rect x="40" y="10" width="5" height="5" fill="rgb(178,178,178)"/><rect x="45" y="10" width="5" height="5" fill="rgb(162,162,162)"/><rect x="50" y="10" width="5" height="5" fill="rgb(168,168,168)"/><rect x="55" y="10" width="5" height="5" fill="rgb(205,205,205)"/><rect x="60" y="10" width="5" height="5" fill="rgb(208,208,208)"/><rect x="65" y="10" width="5" height="5" fill="rgb(233,233,233)"/><rect x="70" y="10" width="5" height="5" fill="rgb(172,172,172)"/><rect x="75" y="10" width="5" height="5" fill="rgb(208,208,208)"/><rect x="80" y="10" width="5" height="5" fill="rgb(171,171,171)"/><rect x="85" y="10" width="5" height="5" fill="rgb(176,176,176)"/><rect x="90" y="10" width="5" height="5" fill="rgb(164,164,164)"/><rect x="95" y="10" width="5" height="5" fill="rgb(177,177,177)"/><rect x="100" y="10" width="5" height="5" fill="rgb(179,179,179)"/><rect x="105" y="10" width="5" height="5" fill="rgb(175,175,175)"/><rect x="110" y="10" width="5" height="5" fill="rgb(191,191,191)"/><rect x="115" y="10" width="5" height="5" fill="rgb(165,165,165)"/><rect x="0" y="15" width="5" height="5" fill="rgb(242,242,242)"/><rect x="5" y="15" width="5" height="5" fill="rgb(246,246,246)"/><rect x="10" y="15" width="5" height="5" fill="rgb(244,244,244)"/><rect x="15" y="15" width="5" height="5" fill="rgb(247,247,247)"/><rect x="20" y="15" width="5" height="5" fill="rgb(241,241,241)"/><rect x="25" y="15" width="5" height="5" fill="rgb(244,244,244)"/><rect x="30" y="15" width="5" height="5" fill="rgb(251,251,251)"/><rect x="40" y="15" width="5" height="5" fill="rgb(245,245,245)"/><rect x="45" y="15" width="5" height="5" fill="rgb(251,251,251)"/><rect x="50" y="15" width="5" height="5" fill="rgb(244,244,244)"/><rect x="60" y="15" width="5" height="5" fill="rgb(251,251,251)"/><rect x="70" y="15" width="5" height="5" fill="rgb(241,241,241)"/><rect x="75" y="15" width="5" height="5" fill="rgb(244,244,244)"/><rect x="80" y="15" width="5" height="5" fill="rgb(240,240,240)"/><rect x="90" y="15" width="5" height="5" fill="rgb(250,250,250)"/><rect x="95" y="15" width="5" height="5" fill="rgb(245,245,245)"/><rect x="100" y="15" width="5" height="5" fill="rgb(248,248,248)"/><rect x="105" y="15" width="5" height="5" fill="rgb(241,241,241)"/><rect x="115" y="15" width="5" height="5" fill="rgb(250,250,250)"/></svg>
<svg class="a" style="left:317px;top:455px" width="50" height="25" shape-rendering="crispEdges"><rect x="0" y="0" width="5" height="5" fill="rgb(241,241,241)"/><rect x="5" y="0" width="5" height="5" fill="rgb(251,251,251)"/><rect x="0" y="5" width="5" height="5" fill="rgb(179,179,179)"/><rect x="5" y="5" width="5" height="5" fill="rgb(186,186,186)"/><rect x="10" y="5" width="5" height="5" fill="rgb(207,207,207)"/><rect x="15" y="5" width="5" height="5" fill="rgb(218,218,218)"/><rect x="20" y="5" width="5" height="5" fill="rgb(211,211,211)"/><rect x="25" y="5" width="5" height="5" fill="rgb(224,224,224)"/><rect x="30" y="5" width="5" height="5" fill="rgb(204,204,204)"/><rect x="35" y="5" width="5" height="5" fill="rgb(185,185,185)"/><rect x="40" y="5" width="5" height="5" fill="rgb(209,209,209)"/><rect x="45" y="5" width="5" height="5" fill="rgb(216,216,216)"/><rect x="0" y="10" width="5" height="5" fill="rgb(179,179,179)"/><rect x="5" y="10" width="5" height="5" fill="rgb(172,172,172)"/><rect x="10" y="10" width="5" height="5" fill="rgb(172,172,172)"/><rect x="15" y="10" width="5" height="5" fill="rgb(153,153,153)"/><rect x="20" y="10" width="5" height="5" fill="rgb(174,174,174)"/><rect x="25" y="10" width="5" height="5" fill="rgb(160,160,160)"/><rect x="30" y="10" width="5" height="5" fill="rgb(163,163,163)"/><rect x="35" y="10" width="5" height="5" fill="rgb(154,154,154)"/><rect x="40" y="10" width="5" height="5" fill="rgb(169,169,169)"/><rect x="45" y="10" width="5" height="5" fill="rgb(173,173,173)"/><rect x="0" y="15" width="5" height="5" fill="rgb(241,241,241)"/><rect x="5" y="15" width="5" height="5" fill="rgb(250,250,250)"/><rect x="10" y="15" width="5" height="5" fill="rgb(245,245,245)"/><rect x="15" y="15" width="5" height="5" fill="rgb(249,249,249)"/><rect x="20" y="15" width="5" height="5" fill="rgb(243,243,243)"/><rect x="25" y="15" width="5" height="5" fill="rgb(211,211,211)"/><rect x="30" y="15" width="5" height="5" fill="rgb(213,213,213)"/><rect x="35" y="15" width="5" height="5" fill="rgb(244,244,244)"/><rect x="40" y="15" width="5" height="5" fill="rgb(250,250,250)"/><rect x="45" y="15" width="5" height="5" fill="rgb(247,247,247)"/></svg>
<svg class="a" style="left:447px;top:455px" width="30" height="25" shape-rendering="crispEdges"><rect x="0" y="0" width="5" height="5" fill="rgb(248,248,248)"/><rect x="5" y="0" width="5" height="5" fill="rgb(251,251,251)"/><rect x="10" y="0" width="5" height="5" fill="rgb(250,250,250)"/><rect x="0" y="5" width="5" height="5" fill="rgb(148,148,148)"/><rect x="5" y="5" width="5" height="5" fill="rgb(186,186,186)"/><rect x="10" y="5" width="5" height="5" fill="rgb(190,190,190)"/><rect x="15" y="5" width="5" height="5" fill="rgb(204,204,204)"/><rect x="20" y="5" width="5" height="5" fill="rgb(214,214,214)"/><rect x="25" y="5" width="5" height="5" fill="rgb(220,220,220)"/><rect x="0" y="10" width="5" height="5" fill="rgb(165,165,165)"/><rect x="5" y="10" width="5" height="5" fill="rgb(161,161,161)"/><rect x="10" y="10" width="5" height="5" fill="rgb(178,178,178)"/><rect x="15" y="10" width="5" height="5" fill="rgb(152,152,152)"/><rect x="20" y="10" width="5" height="5" fill="rgb(151,151,151)"/><rect x="25" y="10" width="5" height="5" fill="rgb(171,171,171)"/><rect x="0" y="15" width="5" height="5" fill="rgb(249,249,249)"/><rect x="5" y="15" width="5" height="5" fill="rgb(249,249,249)"/><rect x="10" y="15" width="5" height="5" fill="rgb(249,249,249)"/><rect x="15" y="15" width="5" height="5" fill="rgb(244,244,244)"/><rect x="20" y="15" width="5" height="5" fill="rgb(244,244,244)"/><rect x="25" y="15" width="5" height="5" fill="rgb(249,249,249)"/></svg>
<svg class="a" style="left:661px;top:459px" width="75" height="25" shape-rendering="crispEdges"><rect x="0" y="0" width="5" height="5" fill="rgb(175,175,175)"/><rect x="5" y="0" width="5" height="5" fill="rgb(166,166,166)"/><rect x="10" y="0" width="5" height="5" fill="rgb(140,140,140)"/><rect x="15" y="0" width="5" height="5" fill="rgb(230,230,230)"/><rect x="20" y="0" width="5" height="5" fill="rgb(201,201,201)"/><rect x="25" y="0" width="5" height="5" fill="rgb(204,204,204)"/><rect x="30" y="0" width="5" height="5" fill="rgb(154,154,154)"/><rect x="35" y="0" width="5" height="5" fill="rgb(229,229,229)"/><rect x="40" y="0" width="5" height="5" fill="rgb(222,222,222)"/><rect x="45" y="0" width="5" height="5" fill="rgb(190,190,190)"/><rect x="50" y="0" width="5" height="5" fill="rgb(165,165,165)"/><rect x="55" y="0" width="5" height="5" fill="rgb(163,163,163)"/><rect x="60" y="0" width="5" height="5" fill="rgb(140,140,140)"/><rect x="65" y="0" width="5" height="5" fill="rgb(166,166,166)"/><rect x="70" y="0" width="5" height="5" fill="rgb(162,162,162)"/><rect x="0" y="5" width="5" height="5" fill="rgb(183,183,183)"/><rect x="5" y="5" width="5" height="5" fill="rgb(168,168,168)"/><rect x="10" y="5" width="5" height="5" fill="rgb(165,165,165)"/><rect x="15" y="5" width="5" height="5" fill="rgb(202,202,202)"/><rect x="20" y="5" width="5" height="5" fill="rgb(199,199,199)"/><rect x="25" y="5" width="5" height="5" fill="rgb(190,190,190)"/><rect x="30" y="5" width="5" height="5" fill="rgb(165,165,165)"/><rect x="35" y="5" width="5" height="5" fill="rgb(191,191,191)"/><rect x="40" y="5" width="5" height="5" fill="rgb(209,209,209)"/><rect x="45" y="5" width="5" height="5" fill="rgb(182,182,182)"/><rect x="50" y="5" width="5" height="5" fill="rgb(190,190,190)"/><rect x="55" y="5" width="5" height="5" fill="rgb(165,165,165)"/><rect x="60" y="5" width="5" height="5" fill="rgb(165,165,165)"/><rect x="65" y="5" width="5" height="5" fill="rgb(165,165,165)"/><rect x="70" y="5" width="5" height="5" fill="rgb(178,178,178)"/><rect x="0" y="10" width="5" height="5" fill="rgb(246,246,246)"/><rect x="5" y="10" width="5" height="5" fill="rgb(250,250,250)"/><rect x="10" y="10" width="5" height="5" fill="rgb(244,244,244)"/><rect x="20" y="10" width="5" height="5" fill="rgb(245,245,245)"/><rect x="25" y="10" width="5" height="5" fill="rgb(245,245,245)"/><rect x="30" y="10" width="5" height="5" fill="rgb(245,245,245)"/><rect x="40" y="10" width="5" height="5" fill="rgb(248,248,248)"/><rect x="45" y="10" width="5" height="5" fill="rgb(242,242,242)"/><rect x="50" y="10" width="5" height="5" fill="rgb(246,246,246)"/><rect x="55" y="10" width="5" height="5" fill="rgb(251,251,251)"/><rect x="60" y="10" width="5" height="5" fill="rgb(244,244,244)"/><rect x="65" y="10" width="5" height="5" fill="rgb(249,249,249)"/><rect x="70" y="10" width="5" height="5" fill="rgb(247,247,247)"/></svg>
<div class="a" style="left:149px;top:490px;width:358px;height:5px;background:#f7f7f7"></div>
<div class="a" style="left:648px;top:490px;width:112px;height:5px;background:#f7f7f7"></div>
<div class="a" style="left:1055px;top:490px;width:113px;height:5px;background:#f7f7f7"></div>
<div class="a" style="left:24px;top:549px;width:1232px;height:1px;background:#e4e4e7"></div>
<div class="a" style="left:48.299999999999955px;top:509px;width:76.5px;height:24px;background:#fafafa;border:1px solid #e4e4e7;border-radius:6px"></div>
<div class="t" style="left:56.792187499999955px;top:516.13px;font-size:12.6px;line-height:12.6px;font-weight:400;color:#3f3f46;">Muster AG</div>
<div class="a" style="left:575.3px;top:509px;width:42.2px;height:24px;background:#fafafa;border:1px solid #e4e4e7;border-radius:6px"></div>
<div class="t" style="left:582.7445312499999px;top:516.13px;font-size:12.6px;line-height:12.6px;font-weight:400;color:#3f3f46;">male</div>
<div class="a" style="left:803.3px;top:509px;width:23.3px;height:24px;background:#fafafa;border:1px solid #e4e4e7;border-radius:6px"></div>
<div class="t" style="left:811.44609375px;top:516.13px;font-size:12.6px;line-height:12.6px;font-weight:400;color:#3f3f46;">1</div>
<div class="a" style="left:964.5px;top:509px;width:23px;height:24px;background:#fafafa;border:1px solid #e4e4e7;border-radius:6px"></div>
<div class="t" style="left:972.49609375px;top:516.13px;font-size:12.6px;line-height:12.6px;font-weight:400;color:#3f3f46;">0</div>
<div class="a" style="left:1063px;top:507px;width:94.5px;height:30px;background:#f9f9f9;border-radius:3px"></div>
<svg class="a" style="left:1073px;top:517px" width="75" height="25" shape-rendering="crispEdges"><rect x="0" y="0" width="5" height="5" fill="rgb(212,212,212)"/><rect x="5" y="0" width="5" height="5" fill="rgb(188,188,188)"/><rect x="10" y="0" width="5" height="5" fill="rgb(209,209,209)"/><rect x="15" y="0" width="5" height="5" fill="rgb(210,210,210)"/><rect x="20" y="0" width="5" height="5" fill="rgb(212,212,212)"/><rect x="25" y="0" width="5" height="5" fill="rgb(239,239,239)"/><rect x="30" y="0" width="5" height="5" fill="rgb(153,153,153)"/><rect x="35" y="0" width="5" height="5" fill="rgb(190,190,190)"/><rect x="40" y="0" width="5" height="5" fill="rgb(213,213,213)"/><rect x="45" y="0" width="5" height="5" fill="rgb(215,215,215)"/><rect x="50" y="0" width="5" height="5" fill="rgb(217,217,217)"/><rect x="55" y="0" width="5" height="5" fill="rgb(191,191,191)"/><rect x="60" y="0" width="5" height="5" fill="rgb(223,223,223)"/><rect x="65" y="0" width="5" height="5" fill="rgb(217,217,217)"/><rect x="70" y="0" width="5" height="5" fill="rgb(219,219,219)"/><rect x="0" y="5" width="5" height="5" fill="rgb(195,195,195)"/><rect x="5" y="5" width="5" height="5" fill="rgb(180,180,180)"/><rect x="10" y="5" width="5" height="5" fill="rgb(187,187,187)"/><rect x="15" y="5" width="5" height="5" fill="rgb(179,179,179)"/><rect x="20" y="5" width="5" height="5" fill="rgb(176,176,176)"/><rect x="25" y="5" width="5" height="5" fill="rgb(236,236,236)"/><rect x="30" y="5" width="5" height="5" fill="rgb(178,178,178)"/><rect x="35" y="5" width="5" height="5" fill="rgb(169,169,169)"/><rect x="40" y="5" width="5" height="5" fill="rgb(200,200,200)"/><rect x="45" y="5" width="5" height="5" fill="rgb(180,180,180)"/><rect x="50" y="5" width="5" height="5" fill="rgb(189,189,189)"/><rect x="55" y="5" width="5" height="5" fill="rgb(174,174,174)"/><rect x="60" y="5" width="5" height="5" fill="rgb(179,179,179)"/><rect x="65" y="5" width="5" height="5" fill="rgb(174,174,174)"/><rect x="70" y="5" width="5" height="5" fill="rgb(200,200,200)"/><rect x="0" y="10" width="5" height="5" fill="rgb(247,247,247)"/><rect x="5" y="10" width="5" height="5" fill="rgb(250,250,250)"/><rect x="10" y="10" width="5" height="5" fill="rgb(249,249,249)"/><rect x="15" y="10" width="5" height="5" fill="rgb(237,237,237)"/><rect x="20" y="10" width="5" height="5" fill="rgb(202,202,202)"/><rect x="25" y="10" width="5" height="5" fill="rgb(252,252,252)"/><rect x="30" y="10" width="5" height="5" fill="rgb(243,243,243)"/><rect x="35" y="10" width="5" height="5" fill="rgb(249,249,249)"/><rect x="40" y="10" width="5" height="5" fill="rgb(251,251,251)"/><rect x="45" y="10" width="5" height="5" fill="rgb(247,247,247)"/><rect x="50" y="10" width="5" height="5" fill="rgb(247,247,247)"/><rect x="55" y="10" width="5" height="5" fill="rgb(250,250,250)"/><rect x="60" y="10" width="5" height="5" fill="rgb(249,249,249)"/><rect x="65" y="10" width="5" height="5" fill="rgb(247,247,247)"/><rect x="70" y="10" width="5" height="5" fill="rgb(251,251,251)"/></svg>
<div class="t" style="left:1189.7px;top:514.98px;font-size:14.2px;line-height:14.2px;font-weight:700;color:#c8440d;">Select</div>
<svg class="a" style="left:162px;top:512px" width="120" height="25" shape-rendering="crispEdges"><rect x="0" y="0" width="5" height="5" fill="rgb(243,243,243)"/><rect x="5" y="0" width="5" height="5" fill="rgb(248,248,248)"/><rect x="10" y="0" width="5" height="5" fill="rgb(250,250,250)"/><rect x="15" y="0" width="5" height="5" fill="rgb(248,248,248)"/><rect x="20" y="0" width="5" height="5" fill="rgb(242,242,242)"/><rect x="25" y="0" width="5" height="5" fill="rgb(242,242,242)"/><rect x="30" y="0" width="5" height="5" fill="rgb(249,249,249)"/><rect x="40" y="0" width="5" height="5" fill="rgb(245,245,245)"/><rect x="45" y="0" width="5" height="5" fill="rgb(251,251,251)"/><rect x="50" y="0" width="5" height="5" fill="rgb(244,244,244)"/><rect x="60" y="0" width="5" height="5" fill="rgb(248,248,248)"/><rect x="65" y="0" width="5" height="5" fill="rgb(249,249,249)"/><rect x="70" y="0" width="5" height="5" fill="rgb(245,245,245)"/><rect x="75" y="0" width="5" height="5" fill="rgb(251,251,251)"/><rect x="80" y="0" width="5" height="5" fill="rgb(244,244,244)"/><rect x="90" y="0" width="5" height="5" fill="rgb(249,249,249)"/><rect x="95" y="0" width="5" height="5" fill="rgb(241,241,241)"/><rect x="100" y="0" width="5" height="5" fill="rgb(246,246,246)"/><rect x="105" y="0" width="5" height="5" fill="rgb(240,240,240)"/><rect x="110" y="0" width="5" height="5" fill="rgb(248,248,248)"/><rect x="115" y="0" width="5" height="5" fill="rgb(247,247,247)"/><rect x="0" y="5" width="5" height="5" fill="rgb(164,164,164)"/><rect x="5" y="5" width="5" height="5" fill="rgb(219,219,219)"/><rect x="10" y="5" width="5" height="5" fill="rgb(168,168,168)"/><rect x="15" y="5" width="5" height="5" fill="rgb(176,176,176)"/><rect x="20" y="5" width="5" height="5" fill="rgb(183,183,183)"/><rect x="25" y="5" width="5" height="5" fill="rgb(160,160,160)"/><rect x="30" y="5" width="5" height="5" fill="rgb(224,224,224)"/><rect x="35" y="5" width="5" height="5" fill="rgb(234,234,234)"/><rect x="40" y="5" width="5" height="5" fill="rgb(179,179,179)"/><rect x="45" y="5" width="5" height="5" fill="rgb(166,166,166)"/><rect x="50" y="5" width="5" height="5" fill="rgb(156,156,156)"/><rect x="55" y="5" width="5" height="5" fill="rgb(240,240,240)"/><rect x="60" y="5" width="5" height="5" fill="rgb(211,211,211)"/><rect x="65" y="5" width="5" height="5" fill="rgb(174,174,174)"/><rect x="70" y="5" width="5" height="5" fill="rgb(177,177,177)"/><rect x="75" y="5" width="5" height="5" fill="rgb(167,167,167)"/><rect x="80" y="5" width="5" height="5" fill="rgb(173,173,173)"/><rect x="85" y="5" width="5" height="5" fill="rgb(200,200,200)"/><rect x="90" y="5" width="5" height="5" fill="rgb(176,176,176)"/><rect x="95" y="5" width="5" height="5" fill="rgb(160,160,160)"/><rect x="100" y="5" width="5" height="5" fill="rgb(224,224,224)"/><rect x="105" y="5" width="5" height="5" fill="rgb(174,174,174)"/><rect x="110" y="5" width="5" height="5" fill="rgb(178,178,178)"/><rect x="115" y="5" width="5" height="5" fill="rgb(183,183,183)"/><rect x="0" y="10" width="5" height="5" fill="rgb(192,192,192)"/><rect x="5" y="10" width="5" height="5" fill="rgb(170,170,170)"/><rect x="10" y="10" width="5" height="5" fill="rgb(159,159,159)"/><rect x="15" y="10" width="5" height="5" fill="rgb(188,188,188)"/><rect x="20" y="10" width="5" height="5" fill="rgb(168,168,168)"/><rect x="25" y="10" width="5" height="5" fill="rgb(180,180,180)"/><rect x="30" y="10" width="5" height="5" fill="rgb(182,182,182)"/><rect x="35" y="10" width="5" height="5" fill="rgb(208,208,208)"/><rect x="40" y="10" width="5" height="5" fill="rgb(178,178,178)"/><rect x="45" y="10" width="5" height="5" fill="rgb(162,162,162)"/><rect x="50" y="10" width="5" height="5" fill="rgb(168,168,168)"/><rect x="55" y="10" width="5" height="5" fill="rgb(204,204,204)"/><rect x="60" y="10" width="5" height="5" fill="rgb(183,183,183)"/><rect x="65" y="10" width="5" height="5" fill="rgb(198,198,198)"/><rect x="70" y="10" width="5" height="5" fill="rgb(177,177,177)"/><rect x="75" y="10" width="5" height="5" fill="rgb(166,166,166)"/><rect x="80" y="10" width="5" height="5" fill="rgb(164,164,164)"/><rect x="85" y="10" width="5" height="5" fill="rgb(164,164,164)"/><rect x="90" y="10" width="5" height="5" fill="rgb(171,171,171)"/><rect x="95" y="10" width="5" height="5" fill="rgb(181,181,181)"/><rect x="100" y="10" width="5" height="5" fill="rgb(200,200,200)"/><rect x="105" y="10" width="5" height="5" fill="rgb(198,198,198)"/><rect x="110" y="10" width="5" height="5" fill="rgb(189,189,189)"/><rect x="115" y="10" width="5" height="5" fill="rgb(183,183,183)"/><rect x="0" y="15" width="5" height="5" fill="rgb(246,246,246)"/><rect x="5" y="15" width="5" height="5" fill="rgb(250,250,250)"/><rect x="10" y="15" width="5" height="5" fill="rgb(252,252,252)"/><rect x="15" y="15" width="5" height="5" fill="rgb(250,250,250)"/><rect x="20" y="15" width="5" height="5" fill="rgb(244,244,244)"/><rect x="25" y="15" width="5" height="5" fill="rgb(245,245,245)"/><rect x="30" y="15" width="5" height="5" fill="rgb(251,251,251)"/><rect x="40" y="15" width="5" height="5" fill="rgb(245,245,245)"/><rect x="45" y="15" width="5" height="5" fill="rgb(251,251,251)"/><rect x="50" y="15" width="5" height="5" fill="rgb(244,244,244)"/><rect x="60" y="15" width="5" height="5" fill="rgb(243,243,243)"/><rect x="65" y="15" width="5" height="5" fill="rgb(245,245,245)"/><rect x="70" y="15" width="5" height="5" fill="rgb(245,245,245)"/><rect x="75" y="15" width="5" height="5" fill="rgb(251,251,251)"/><rect x="80" y="15" width="5" height="5" fill="rgb(244,244,244)"/><rect x="90" y="15" width="5" height="5" fill="rgb(250,250,250)"/><rect x="95" y="15" width="5" height="5" fill="rgb(244,244,244)"/><rect x="100" y="15" width="5" height="5" fill="rgb(252,252,252)"/><rect x="105" y="15" width="5" height="5" fill="rgb(251,251,251)"/><rect x="110" y="15" width="5" height="5" fill="rgb(250,250,250)"/><rect x="115" y="15" width="5" height="5" fill="rgb(247,247,247)"/></svg>
<svg class="a" style="left:317px;top:512px" width="45" height="25" shape-rendering="crispEdges"><rect x="0" y="0" width="5" height="5" fill="rgb(247,247,247)"/><rect x="5" y="0" width="5" height="5" fill="rgb(248,248,248)"/><rect x="35" y="0" width="5" height="5" fill="rgb(251,251,251)"/><rect x="40" y="0" width="5" height="5" fill="rgb(252,252,252)"/><rect x="0" y="5" width="5" height="5" fill="rgb(176,176,176)"/><rect x="5" y="5" width="5" height="5" fill="rgb(190,190,190)"/><rect x="10" y="5" width="5" height="5" fill="rgb(193,193,193)"/><rect x="15" y="5" width="5" height="5" fill="rgb(226,226,226)"/><rect x="20" y="5" width="5" height="5" fill="rgb(213,213,213)"/><rect x="25" y="5" width="5" height="5" fill="rgb(220,220,220)"/><rect x="30" y="5" width="5" height="5" fill="rgb(209,209,209)"/><rect x="35" y="5" width="5" height="5" fill="rgb(184,184,184)"/><rect x="40" y="5" width="5" height="5" fill="rgb(209,209,209)"/><rect x="0" y="10" width="5" height="5" fill="rgb(207,207,207)"/><rect x="5" y="10" width="5" height="5" fill="rgb(163,163,163)"/><rect x="10" y="10" width="5" height="5" fill="rgb(162,162,162)"/><rect x="15" y="10" width="5" height="5" fill="rgb(168,168,168)"/><rect x="20" y="10" width="5" height="5" fill="rgb(154,154,154)"/><rect x="25" y="10" width="5" height="5" fill="rgb(168,168,168)"/><rect x="30" y="10" width="5" height="5" fill="rgb(192,192,192)"/><rect x="35" y="10" width="5" height="5" fill="rgb(151,151,151)"/><rect x="40" y="10" width="5" height="5" fill="rgb(179,179,179)"/><rect x="0" y="15" width="5" height="5" fill="rgb(246,246,246)"/><rect x="5" y="15" width="5" height="5" fill="rgb(247,247,247)"/><rect x="10" y="15" width="5" height="5" fill="rgb(246,246,246)"/><rect x="15" y="15" width="5" height="5" fill="rgb(244,244,244)"/><rect x="20" y="15" width="5" height="5" fill="rgb(247,247,247)"/><rect x="25" y="15" width="5" height="5" fill="rgb(249,249,249)"/><rect x="30" y="15" width="5" height="5" fill="rgb(245,245,245)"/><rect x="35" y="15" width="5" height="5" fill="rgb(249,249,249)"/><rect x="40" y="15" width="5" height="5" fill="rgb(247,247,247)"/></svg>
<svg class="a" style="left:447px;top:512px" width="45" height="25" shape-rendering="crispEdges"><rect x="0" y="0" width="5" height="5" fill="rgb(241,241,241)"/><rect x="5" y="0" width="5" height="5" fill="rgb(247,247,247)"/><rect x="20" y="0" width="5" height="5" fill="rgb(252,252,252)"/><rect x="0" y="5" width="5" height="5" fill="rgb(165,165,165)"/><rect x="5" y="5" width="5" height="5" fill="rgb(172,172,172)"/><rect x="10" y="5" width="5" height="5" fill="rgb(212,212,212)"/><rect x="15" y="5" width="5" height="5" fill="rgb(202,202,202)"/><rect x="20" y="5" width="5" height="5" fill="rgb(178,178,178)"/><rect x="25" y="5" width="5" height="5" fill="rgb(220,220,220)"/><rect x="30" y="5" width="5" height="5" fill="rgb(207,207,207)"/><rect x="35" y="5" width="5" height="5" fill="rgb(205,205,205)"/><rect x="40" y="5" width="5" height="5" fill="rgb(184,184,184)"/><rect x="0" y="10" width="5" height="5" fill="rgb(172,172,172)"/><rect x="5" y="10" width="5" height="5" fill="rgb(174,174,174)"/><rect x="10" y="10" width="5" height="5" fill="rgb(179,179,179)"/><rect x="15" y="10" width="5" height="5" fill="rgb(164,164,164)"/><rect x="20" y="10" width="5" height="5" fill="rgb(167,167,167)"/><rect x="25" y="10" width="5" height="5" fill="rgb(152,152,152)"/><rect x="30" y="10" width="5" height="5" fill="rgb(155,155,155)"/><rect x="35" y="10" width="5" height="5" fill="rgb(176,176,176)"/><rect x="40" y="10" width="5" height="5" fill="rgb(182,182,182)"/><rect x="0" y="15" width="5" height="5" fill="rgb(251,251,251)"/><rect x="5" y="15" width="5" height="5" fill="rgb(249,249,249)"/><rect x="10" y="15" width="5" height="5" fill="rgb(246,246,246)"/><rect x="15" y="15" width="5" height="5" fill="rgb(248,248,248)"/><rect x="20" y="15" width="5" height="5" fill="rgb(243,243,243)"/><rect x="25" y="15" width="5" height="5" fill="rgb(250,250,250)"/><rect x="30" y="15" width="5" height="5" fill="rgb(244,244,244)"/><rect x="35" y="15" width="5" height="5" fill="rgb(250,250,250)"/><rect x="40" y="15" width="5" height="5" fill="rgb(247,247,247)"/></svg>
<svg class="a" style="left:661px;top:516px" width="75" height="25" shape-rendering="crispEdges"><rect x="0" y="0" width="5" height="5" fill="rgb(175,175,175)"/><rect x="5" y="0" width="5" height="5" fill="rgb(165,165,165)"/><rect x="10" y="0" width="5" height="5" fill="rgb(157,157,157)"/><rect x="15" y="0" width="5" height="5" fill="rgb(241,241,241)"/><rect x="20" y="0" width="5" height="5" fill="rgb(201,201,201)"/><rect x="25" y="0" width="5" height="5" fill="rgb(201,201,201)"/><rect x="30" y="0" width="5" height="5" fill="rgb(148,148,148)"/><rect x="35" y="0" width="5" height="5" fill="rgb(233,233,233)"/><rect x="40" y="0" width="5" height="5" fill="rgb(222,222,222)"/><rect x="45" y="0" width="5" height="5" fill="rgb(190,190,190)"/><rect x="50" y="0" width="5" height="5" fill="rgb(165,165,165)"/><rect x="55" y="0" width="5" height="5" fill="rgb(160,160,160)"/><rect x="60" y="0" width="5" height="5" fill="rgb(150,150,150)"/><rect x="65" y="0" width="5" height="5" fill="rgb(192,192,192)"/><rect x="70" y="0" width="5" height="5" fill="rgb(173,173,173)"/><rect x="0" y="5" width="5" height="5" fill="rgb(183,183,183)"/><rect x="5" y="5" width="5" height="5" fill="rgb(168,168,168)"/><rect x="10" y="5" width="5" height="5" fill="rgb(163,163,163)"/><rect x="15" y="5" width="5" height="5" fill="rgb(202,202,202)"/><rect x="20" y="5" width="5" height="5" fill="rgb(199,199,199)"/><rect x="25" y="5" width="5" height="5" fill="rgb(194,194,194)"/><rect x="30" y="5" width="5" height="5" fill="rgb(181,181,181)"/><rect x="35" y="5" width="5" height="5" fill="rgb(191,191,191)"/><rect x="40" y="5" width="5" height="5" fill="rgb(209,209,209)"/><rect x="45" y="5" width="5" height="5" fill="rgb(182,182,182)"/><rect x="50" y="5" width="5" height="5" fill="rgb(190,190,190)"/><rect x="55" y="5" width="5" height="5" fill="rgb(180,180,180)"/><rect x="60" y="5" width="5" height="5" fill="rgb(165,165,165)"/><rect x="65" y="5" width="5" height="5" fill="rgb(180,180,180)"/><rect x="70" y="5" width="5" height="5" fill="rgb(196,196,196)"/><rect x="0" y="10" width="5" height="5" fill="rgb(246,246,246)"/><rect x="5" y="10" width="5" height="5" fill="rgb(251,251,251)"/><rect x="10" y="10" width="5" height="5" fill="rgb(244,244,244)"/><rect x="20" y="10" width="5" height="5" fill="rgb(245,245,245)"/><rect x="25" y="10" width="5" height="5" fill="rgb(244,244,244)"/><rect x="30" y="10" width="5" height="5" fill="rgb(244,244,244)"/><rect x="40" y="10" width="5" height="5" fill="rgb(248,248,248)"/><rect x="45" y="10" width="5" height="5" fill="rgb(242,242,242)"/><rect x="50" y="10" width="5" height="5" fill="rgb(246,246,246)"/><rect x="55" y="10" width="5" height="5" fill="rgb(251,251,251)"/><rect x="60" y="10" width="5" height="5" fill="rgb(245,245,245)"/><rect x="65" y="10" width="5" height="5" fill="rgb(246,246,246)"/><rect x="70" y="10" width="5" height="5" fill="rgb(243,243,243)"/></svg>
<div class="a" style="left:149px;top:547px;width:358px;height:5px;background:#f7f7f7"></div>
<div class="a" style="left:648px;top:547px;width:112px;height:5px;background:#f7f7f7"></div>
<div class="a" style="left:1055px;top:547px;width:113px;height:5px;background:#f7f7f7"></div>
<div class="a" style="left:24px;top:606px;width:1232px;height:1px;background:#e4e4e7"></div>
<div class="a" style="left:48.299999999999955px;top:566px;width:76.5px;height:24px;background:#fafafa;border:1px solid #e4e4e7;border-radius:6px"></div>
<div class="t" style="left:56.792187499999955px;top:573.13px;font-size:12.6px;line-height:12.6px;font-weight:400;color:#3f3f46;">Muster AG</div>
<div class="a" style="left:575.3px;top:566px;width:42.2px;height:24px;background:#fafafa;border:1px solid #e4e4e7;border-radius:6px"></div>
<div class="t" style="left:582.7445312499999px;top:573.13px;font-size:12.6px;line-height:12.6px;font-weight:400;color:#3f3f46;">male</div>
<div class="a" style="left:803.3px;top:566px;width:23.3px;height:24px;background:#fafafa;border:1px solid #e4e4e7;border-radius:6px"></div>
<div class="t" style="left:811.44609375px;top:573.13px;font-size:12.6px;line-height:12.6px;font-weight:400;color:#3f3f46;">1</div>
<div class="a" style="left:964.5px;top:566px;width:23px;height:24px;background:#fafafa;border:1px solid #e4e4e7;border-radius:6px"></div>
<div class="t" style="left:972.49609375px;top:573.13px;font-size:12.6px;line-height:12.6px;font-weight:400;color:#3f3f46;">0</div>
<div class="a" style="left:1063px;top:564px;width:94.5px;height:30px;background:#f9f9f9;border-radius:3px"></div>
<svg class="a" style="left:1073px;top:574px" width="75" height="25" shape-rendering="crispEdges"><rect x="0" y="0" width="5" height="5" fill="rgb(212,212,212)"/><rect x="5" y="0" width="5" height="5" fill="rgb(188,188,188)"/><rect x="10" y="0" width="5" height="5" fill="rgb(209,209,209)"/><rect x="15" y="0" width="5" height="5" fill="rgb(210,210,210)"/><rect x="20" y="0" width="5" height="5" fill="rgb(212,212,212)"/><rect x="25" y="0" width="5" height="5" fill="rgb(239,239,239)"/><rect x="30" y="0" width="5" height="5" fill="rgb(153,153,153)"/><rect x="35" y="0" width="5" height="5" fill="rgb(190,190,190)"/><rect x="40" y="0" width="5" height="5" fill="rgb(213,213,213)"/><rect x="45" y="0" width="5" height="5" fill="rgb(215,215,215)"/><rect x="50" y="0" width="5" height="5" fill="rgb(217,217,217)"/><rect x="55" y="0" width="5" height="5" fill="rgb(191,191,191)"/><rect x="60" y="0" width="5" height="5" fill="rgb(223,223,223)"/><rect x="65" y="0" width="5" height="5" fill="rgb(217,217,217)"/><rect x="70" y="0" width="5" height="5" fill="rgb(219,219,219)"/><rect x="0" y="5" width="5" height="5" fill="rgb(195,195,195)"/><rect x="5" y="5" width="5" height="5" fill="rgb(180,180,180)"/><rect x="10" y="5" width="5" height="5" fill="rgb(187,187,187)"/><rect x="15" y="5" width="5" height="5" fill="rgb(179,179,179)"/><rect x="20" y="5" width="5" height="5" fill="rgb(176,176,176)"/><rect x="25" y="5" width="5" height="5" fill="rgb(236,236,236)"/><rect x="30" y="5" width="5" height="5" fill="rgb(178,178,178)"/><rect x="35" y="5" width="5" height="5" fill="rgb(169,169,169)"/><rect x="40" y="5" width="5" height="5" fill="rgb(200,200,200)"/><rect x="45" y="5" width="5" height="5" fill="rgb(180,180,180)"/><rect x="50" y="5" width="5" height="5" fill="rgb(189,189,189)"/><rect x="55" y="5" width="5" height="5" fill="rgb(174,174,174)"/><rect x="60" y="5" width="5" height="5" fill="rgb(179,179,179)"/><rect x="65" y="5" width="5" height="5" fill="rgb(174,174,174)"/><rect x="70" y="5" width="5" height="5" fill="rgb(200,200,200)"/><rect x="0" y="10" width="5" height="5" fill="rgb(247,247,247)"/><rect x="5" y="10" width="5" height="5" fill="rgb(250,250,250)"/><rect x="10" y="10" width="5" height="5" fill="rgb(249,249,249)"/><rect x="15" y="10" width="5" height="5" fill="rgb(237,237,237)"/><rect x="20" y="10" width="5" height="5" fill="rgb(202,202,202)"/><rect x="25" y="10" width="5" height="5" fill="rgb(252,252,252)"/><rect x="30" y="10" width="5" height="5" fill="rgb(243,243,243)"/><rect x="35" y="10" width="5" height="5" fill="rgb(249,249,249)"/><rect x="40" y="10" width="5" height="5" fill="rgb(251,251,251)"/><rect x="45" y="10" width="5" height="5" fill="rgb(247,247,247)"/><rect x="50" y="10" width="5" height="5" fill="rgb(247,247,247)"/><rect x="55" y="10" width="5" height="5" fill="rgb(250,250,250)"/><rect x="60" y="10" width="5" height="5" fill="rgb(249,249,249)"/><rect x="65" y="10" width="5" height="5" fill="rgb(247,247,247)"/><rect x="70" y="10" width="5" height="5" fill="rgb(251,251,251)"/></svg>
<div class="t" style="left:1189.7px;top:571.98px;font-size:14.2px;line-height:14.2px;font-weight:700;color:#c8440d;">Select</div>
<svg class="a" style="left:162px;top:569px" width="120" height="25" shape-rendering="crispEdges"><rect x="0" y="0" width="5" height="5" fill="rgb(247,247,247)"/><rect x="5" y="0" width="5" height="5" fill="rgb(250,250,250)"/><rect x="10" y="0" width="5" height="5" fill="rgb(244,244,244)"/><rect x="15" y="0" width="5" height="5" fill="rgb(251,251,251)"/><rect x="20" y="0" width="5" height="5" fill="rgb(245,245,245)"/><rect x="25" y="0" width="5" height="5" fill="rgb(246,246,246)"/><rect x="30" y="0" width="5" height="5" fill="rgb(251,251,251)"/><rect x="40" y="0" width="5" height="5" fill="rgb(245,245,245)"/><rect x="45" y="0" width="5" height="5" fill="rgb(251,251,251)"/><rect x="50" y="0" width="5" height="5" fill="rgb(244,244,244)"/><rect x="60" y="0" width="5" height="5" fill="rgb(248,248,248)"/><rect x="65" y="0" width="5" height="5" fill="rgb(249,249,249)"/><rect x="70" y="0" width="5" height="5" fill="rgb(245,245,245)"/><rect x="75" y="0" width="5" height="5" fill="rgb(251,251,251)"/><rect x="80" y="0" width="5" height="5" fill="rgb(244,244,244)"/><rect x="90" y="0" width="5" height="5" fill="rgb(250,250,250)"/><rect x="95" y="0" width="5" height="5" fill="rgb(250,250,250)"/><rect x="105" y="0" width="5" height="5" fill="rgb(249,249,249)"/><rect x="110" y="0" width="5" height="5" fill="rgb(250,250,250)"/><rect x="115" y="0" width="5" height="5" fill="rgb(247,247,247)"/><rect x="0" y="5" width="5" height="5" fill="rgb(205,205,205)"/><rect x="5" y="5" width="5" height="5" fill="rgb(169,169,169)"/><rect x="10" y="5" width="5" height="5" fill="rgb(179,179,179)"/><rect x="15" y="5" width="5" height="5" fill="rgb(191,191,191)"/><rect x="20" y="5" width="5" height="5" fill="rgb(174,174,174)"/><rect x="25" y="5" width="5" height="5" fill="rgb(185,185,185)"/><rect x="30" y="5" width="5" height="5" fill="rgb(193,193,193)"/><rect x="35" y="5" width="5" height="5" fill="rgb(234,234,234)"/><rect x="40" y="5" width="5" height="5" fill="rgb(179,179,179)"/><rect x="45" y="5" width="5" height="5" fill="rgb(166,166,166)"/><rect x="50" y="5" width="5" height="5" fill="rgb(156,156,156)"/><rect x="55" y="5" width="5" height="5" fill="rgb(240,240,240)"/><rect x="60" y="5" width="5" height="5" fill="rgb(211,211,211)"/><rect x="65" y="5" width="5" height="5" fill="rgb(174,174,174)"/><rect x="70" y="5" width="5" height="5" fill="rgb(177,177,177)"/><rect x="75" y="5" width="5" height="5" fill="rgb(187,187,187)"/><rect x="80" y="5" width="5" height="5" fill="rgb(176,176,176)"/><rect x="85" y="5" width="5" height="5" fill="rgb(191,191,191)"/><rect x="90" y="5" width="5" height="5" fill="rgb(188,188,188)"/><rect x="95" y="5" width="5" height="5" fill="rgb(174,174,174)"/><rect x="100" y="5" width="5" height="5" fill="rgb(211,211,211)"/><rect x="105" y="5" width="5" height="5" fill="rgb(159,159,159)"/><rect x="110" y="5" width="5" height="5" fill="rgb(183,183,183)"/><rect x="115" y="5" width="5" height="5" fill="rgb(183,183,183)"/><rect x="0" y="10" width="5" height="5" fill="rgb(178,178,178)"/><rect x="5" y="10" width="5" height="5" fill="rgb(196,196,196)"/><rect x="10" y="10" width="5" height="5" fill="rgb(179,179,179)"/><rect x="15" y="10" width="5" height="5" fill="rgb(180,180,180)"/><rect x="20" y="10" width="5" height="5" fill="rgb(178,178,178)"/><rect x="25" y="10" width="5" height="5" fill="rgb(196,196,196)"/><rect x="30" y="10" width="5" height="5" fill="rgb(181,181,181)"/><rect x="35" y="10" width="5" height="5" fill="rgb(208,208,208)"/><rect x="40" y="10" width="5" height="5" fill="rgb(178,178,178)"/><rect x="45" y="10" width="5" height="5" fill="rgb(162,162,162)"/><rect x="50" y="10" width="5" height="5" fill="rgb(168,168,168)"/><rect x="55" y="10" width="5" height="5" fill="rgb(204,204,204)"/><rect x="60" y="10" width="5" height="5" fill="rgb(183,183,183)"/><rect x="65" y="10" width="5" height="5" fill="rgb(198,198,198)"/><rect x="70" y="10" width="5" height="5" fill="rgb(177,177,177)"/><rect x="75" y="10" width="5" height="5" fill="rgb(180,180,180)"/><rect x="80" y="10" width="5" height="5" fill="rgb(171,171,171)"/><rect x="85" y="10" width="5" height="5" fill="rgb(176,176,176)"/><rect x="90" y="10" width="5" height="5" fill="rgb(167,167,167)"/><rect x="95" y="10" width="5" height="5" fill="rgb(162,162,162)"/><rect x="100" y="10" width="5" height="5" fill="rgb(174,174,174)"/><rect x="105" y="10" width="5" height="5" fill="rgb(156,156,156)"/><rect x="110" y="10" width="5" height="5" fill="rgb(177,177,177)"/><rect x="115" y="10" width="5" height="5" fill="rgb(183,183,183)"/><rect x="0" y="15" width="5" height="5" fill="rgb(242,242,242)"/><rect x="5" y="15" width="5" height="5" fill="rgb(246,246,246)"/><rect x="10" y="15" width="5" height="5" fill="rgb(244,244,244)"/><rect x="15" y="15" width="5" height="5" fill="rgb(247,247,247)"/><rect x="20" y="15" width="5" height="5" fill="rgb(241,241,241)"/><rect x="25" y="15" width="5" height="5" fill="rgb(244,244,244)"/><rect x="30" y="15" width="5" height="5" fill="rgb(251,251,251)"/><rect x="40" y="15" width="5" height="5" fill="rgb(245,245,245)"/><rect x="45" y="15" width="5" height="5" fill="rgb(251,251,251)"/><rect x="50" y="15" width="5" height="5" fill="rgb(244,244,244)"/><rect x="60" y="15" width="5" height="5" fill="rgb(243,243,243)"/><rect x="65" y="15" width="5" height="5" fill="rgb(245,245,245)"/><rect x="70" y="15" width="5" height="5" fill="rgb(245,245,245)"/><rect x="75" y="15" width="5" height="5" fill="rgb(248,248,248)"/><rect x="80" y="15" width="5" height="5" fill="rgb(240,240,240)"/><rect x="90" y="15" width="5" height="5" fill="rgb(251,251,251)"/><rect x="105" y="15" width="5" height="5" fill="rgb(250,250,250)"/><rect x="110" y="15" width="5" height="5" fill="rgb(250,250,250)"/><rect x="115" y="15" width="5" height="5" fill="rgb(247,247,247)"/></svg>
<svg class="a" style="left:317px;top:569px" width="75" height="25" shape-rendering="crispEdges"><rect x="0" y="0" width="5" height="5" fill="rgb(248,248,248)"/><rect x="10" y="0" width="5" height="5" fill="rgb(244,244,244)"/><rect x="20" y="0" width="5" height="5" fill="rgb(246,246,246)"/><rect x="25" y="0" width="5" height="5" fill="rgb(249,249,249)"/><rect x="30" y="0" width="5" height="5" fill="rgb(240,240,240)"/><rect x="35" y="0" width="5" height="5" fill="rgb(252,252,252)"/><rect x="40" y="0" width="5" height="5" fill="rgb(250,250,250)"/><rect x="45" y="0" width="5" height="5" fill="rgb(247,247,247)"/><rect x="50" y="0" width="5" height="5" fill="rgb(247,247,247)"/><rect x="55" y="0" width="5" height="5" fill="rgb(249,249,249)"/><rect x="60" y="0" width="5" height="5" fill="rgb(244,244,244)"/><rect x="70" y="0" width="5" height="5" fill="rgb(248,248,248)"/><rect x="0" y="5" width="5" height="5" fill="rgb(174,174,174)"/><rect x="5" y="5" width="5" height="5" fill="rgb(206,206,206)"/><rect x="10" y="5" width="5" height="5" fill="rgb(155,155,155)"/><rect x="15" y="5" width="5" height="5" fill="rgb(231,231,231)"/><rect x="20" y="5" width="5" height="5" fill="rgb(179,179,179)"/><rect x="25" y="5" width="5" height="5" fill="rgb(191,191,191)"/><rect x="30" y="5" width="5" height="5" fill="rgb(177,177,177)"/><rect x="35" y="5" width="5" height="5" fill="rgb(236,236,236)"/><rect x="40" y="5" width="5" height="5" fill="rgb(220,220,220)"/><rect x="45" y="5" width="5" height="5" fill="rgb(174,174,174)"/><rect x="50" y="5" width="5" height="5" fill="rgb(180,180,180)"/><rect x="55" y="5" width="5" height="5" fill="rgb(174,174,174)"/><rect x="60" y="5" width="5" height="5" fill="rgb(176,176,176)"/><rect x="65" y="5" width="5" height="5" fill="rgb(212,212,212)"/><rect x="70" y="5" width="5" height="5" fill="rgb(170,170,170)"/><rect x="0" y="10" width="5" height="5" fill="rgb(170,170,170)"/><rect x="5" y="10" width="5" height="5" fill="rgb(190,190,190)"/><rect x="10" y="10" width="5" height="5" fill="rgb(169,169,169)"/><rect x="15" y="10" width="5" height="5" fill="rgb(216,216,216)"/><rect x="20" y="10" width="5" height="5" fill="rgb(178,178,178)"/><rect x="25" y="10" width="5" height="5" fill="rgb(197,197,197)"/><rect x="30" y="10" width="5" height="5" fill="rgb(191,191,191)"/><rect x="35" y="10" width="5" height="5" fill="rgb(246,246,246)"/><rect x="40" y="10" width="5" height="5" fill="rgb(196,196,196)"/><rect x="45" y="10" width="5" height="5" fill="rgb(193,193,193)"/><rect x="50" y="10" width="5" height="5" fill="rgb(180,180,180)"/><rect x="55" y="10" width="5" height="5" fill="rgb(164,164,164)"/><rect x="60" y="10" width="5" height="5" fill="rgb(175,175,175)"/><rect x="65" y="10" width="5" height="5" fill="rgb(191,191,191)"/><rect x="70" y="10" width="5" height="5" fill="rgb(165,165,165)"/><rect x="0" y="15" width="5" height="5" fill="rgb(240,240,240)"/><rect x="5" y="15" width="5" height="5" fill="rgb(247,247,247)"/><rect x="10" y="15" width="5" height="5" fill="rgb(244,244,244)"/><rect x="15" y="15" width="5" height="5" fill="rgb(250,250,250)"/><rect x="20" y="15" width="5" height="5" fill="rgb(245,245,245)"/><rect x="25" y="15" width="5" height="5" fill="rgb(251,251,251)"/><rect x="30" y="15" width="5" height="5" fill="rgb(250,250,250)"/><rect x="35" y="15" width="5" height="5" fill="rgb(252,252,252)"/><rect x="40" y="15" width="5" height="5" fill="rgb(245,245,245)"/><rect x="45" y="15" width="5" height="5" fill="rgb(243,243,243)"/><rect x="50" y="15" width="5" height="5" fill="rgb(246,246,246)"/><rect x="55" y="15" width="5" height="5" fill="rgb(245,245,245)"/><rect x="60" y="15" width="5" height="5" fill="rgb(241,241,241)"/><rect x="70" y="15" width="5" height="5" fill="rgb(250,250,250)"/></svg>
<svg class="a" style="left:447px;top:569px" width="30" height="25" shape-rendering="crispEdges"><rect x="0" y="0" width="5" height="5" fill="rgb(241,241,241)"/><rect x="5" y="0" width="5" height="5" fill="rgb(242,242,242)"/><rect x="0" y="5" width="5" height="5" fill="rgb(189,189,189)"/><rect x="5" y="5" width="5" height="5" fill="rgb(183,183,183)"/><rect x="10" y="5" width="5" height="5" fill="rgb(203,203,203)"/><rect x="15" y="5" width="5" height="5" fill="rgb(220,220,220)"/><rect x="20" y="5" width="5" height="5" fill="rgb(209,209,209)"/><rect x="25" y="5" width="5" height="5" fill="rgb(183,183,183)"/><rect x="0" y="10" width="5" height="5" fill="rgb(216,216,216)"/><rect x="5" y="10" width="5" height="5" fill="rgb(181,181,181)"/><rect x="10" y="10" width="5" height="5" fill="rgb(150,150,150)"/><rect x="15" y="10" width="5" height="5" fill="rgb(184,184,184)"/><rect x="20" y="10" width="5" height="5" fill="rgb(163,163,163)"/><rect x="25" y="10" width="5" height="5" fill="rgb(172,172,172)"/><rect x="0" y="15" width="5" height="5" fill="rgb(252,252,252)"/><rect x="5" y="15" width="5" height="5" fill="rgb(251,251,251)"/><rect x="10" y="15" width="5" height="5" fill="rgb(244,244,244)"/><rect x="15" y="15" width="5" height="5" fill="rgb(249,249,249)"/><rect x="20" y="15" width="5" height="5" fill="rgb(244,244,244)"/><rect x="25" y="15" width="5" height="5" fill="rgb(247,247,247)"/></svg>
<svg class="a" style="left:661px;top:573px" width="75" height="25" shape-rendering="crispEdges"><rect x="0" y="0" width="5" height="5" fill="rgb(175,175,175)"/><rect x="5" y="0" width="5" height="5" fill="rgb(186,186,186)"/><rect x="10" y="0" width="5" height="5" fill="rgb(168,168,168)"/><rect x="15" y="0" width="5" height="5" fill="rgb(250,250,250)"/><rect x="20" y="0" width="5" height="5" fill="rgb(181,181,181)"/><rect x="25" y="0" width="5" height="5" fill="rgb(182,182,182)"/><rect x="30" y="0" width="5" height="5" fill="rgb(169,169,169)"/><rect x="35" y="0" width="5" height="5" fill="rgb(246,246,246)"/><rect x="40" y="0" width="5" height="5" fill="rgb(219,219,219)"/><rect x="45" y="0" width="5" height="5" fill="rgb(168,168,168)"/><rect x="50" y="0" width="5" height="5" fill="rgb(173,173,173)"/><rect x="55" y="0" width="5" height="5" fill="rgb(180,180,180)"/><rect x="60" y="0" width="5" height="5" fill="rgb(168,168,168)"/><rect x="65" y="0" width="5" height="5" fill="rgb(193,193,193)"/><rect x="70" y="0" width="5" height="5" fill="rgb(164,164,164)"/><rect x="0" y="5" width="5" height="5" fill="rgb(183,183,183)"/><rect x="5" y="5" width="5" height="5" fill="rgb(191,191,191)"/><rect x="10" y="5" width="5" height="5" fill="rgb(167,167,167)"/><rect x="15" y="5" width="5" height="5" fill="rgb(219,219,219)"/><rect x="20" y="5" width="5" height="5" fill="rgb(178,178,178)"/><rect x="25" y="5" width="5" height="5" fill="rgb(188,188,188)"/><rect x="30" y="5" width="5" height="5" fill="rgb(172,172,172)"/><rect x="35" y="5" width="5" height="5" fill="rgb(218,218,218)"/><rect x="40" y="5" width="5" height="5" fill="rgb(188,188,188)"/><rect x="45" y="5" width="5" height="5" fill="rgb(191,191,191)"/><rect x="50" y="5" width="5" height="5" fill="rgb(182,182,182)"/><rect x="55" y="5" width="5" height="5" fill="rgb(180,180,180)"/><rect x="60" y="5" width="5" height="5" fill="rgb(171,171,171)"/><rect x="65" y="5" width="5" height="5" fill="rgb(210,210,210)"/><rect x="70" y="5" width="5" height="5" fill="rgb(176,176,176)"/><rect x="0" y="10" width="5" height="5" fill="rgb(246,246,246)"/><rect x="5" y="10" width="5" height="5" fill="rgb(249,249,249)"/><rect x="10" y="10" width="5" height="5" fill="rgb(240,240,240)"/><rect x="20" y="10" width="5" height="5" fill="rgb(249,249,249)"/><rect x="25" y="10" width="5" height="5" fill="rgb(248,248,248)"/><rect x="30" y="10" width="5" height="5" fill="rgb(241,241,241)"/><rect x="35" y="10" width="5" height="5" fill="rgb(250,250,250)"/><rect x="40" y="10" width="5" height="5" fill="rgb(246,246,246)"/><rect x="45" y="10" width="5" height="5" fill="rgb(243,243,243)"/><rect x="50" y="10" width="5" height="5" fill="rgb(246,246,246)"/><rect x="55" y="10" width="5" height="5" fill="rgb(248,248,248)"/><rect x="60" y="10" width="5" height="5" fill="rgb(240,240,240)"/><rect x="65" y="10" width="5" height="5" fill="rgb(247,247,247)"/><rect x="70" y="10" width="5" height="5" fill="rgb(247,247,247)"/></svg>
<div class="a" style="left:149px;top:604px;width:358px;height:5px;background:#f7f7f7"></div>
<div class="a" style="left:648px;top:604px;width:112px;height:5px;background:#f7f7f7"></div>
<div class="a" style="left:1055px;top:604px;width:113px;height:5px;background:#f7f7f7"></div>
<div class="a" style="left:24px;top:663px;width:1232px;height:1px;background:#e4e4e7"></div>
<div class="a" style="left:48.299999999999955px;top:623px;width:76.5px;height:24px;background:#fafafa;border:1px solid #e4e4e7;border-radius:6px"></div>
<div class="t" style="left:56.792187499999955px;top:630.13px;font-size:12.6px;line-height:12.6px;font-weight:400;color:#3f3f46;">Muster AG</div>
<div class="a" style="left:575.3px;top:623px;width:42.2px;height:24px;background:#fafafa;border:1px solid #e4e4e7;border-radius:6px"></div>
<div class="t" style="left:582.7445312499999px;top:630.13px;font-size:12.6px;line-height:12.6px;font-weight:400;color:#3f3f46;">male</div>
<div class="a" style="left:803.3px;top:623px;width:23.3px;height:24px;background:#fafafa;border:1px solid #e4e4e7;border-radius:6px"></div>
<div class="t" style="left:811.44609375px;top:630.13px;font-size:12.6px;line-height:12.6px;font-weight:400;color:#3f3f46;">1</div>
<div class="a" style="left:964.5px;top:623px;width:23px;height:24px;background:#fafafa;border:1px solid #e4e4e7;border-radius:6px"></div>
<div class="t" style="left:972.49609375px;top:630.13px;font-size:12.6px;line-height:12.6px;font-weight:400;color:#3f3f46;">0</div>
<div class="a" style="left:1063px;top:621px;width:94.5px;height:30px;background:#f9f9f9;border-radius:3px"></div>
<svg class="a" style="left:1073px;top:631px" width="75" height="25" shape-rendering="crispEdges"><rect x="0" y="0" width="5" height="5" fill="rgb(212,212,212)"/><rect x="5" y="0" width="5" height="5" fill="rgb(188,188,188)"/><rect x="10" y="0" width="5" height="5" fill="rgb(209,209,209)"/><rect x="15" y="0" width="5" height="5" fill="rgb(210,210,210)"/><rect x="20" y="0" width="5" height="5" fill="rgb(212,212,212)"/><rect x="25" y="0" width="5" height="5" fill="rgb(239,239,239)"/><rect x="30" y="0" width="5" height="5" fill="rgb(153,153,153)"/><rect x="35" y="0" width="5" height="5" fill="rgb(190,190,190)"/><rect x="40" y="0" width="5" height="5" fill="rgb(213,213,213)"/><rect x="45" y="0" width="5" height="5" fill="rgb(215,215,215)"/><rect x="50" y="0" width="5" height="5" fill="rgb(217,217,217)"/><rect x="55" y="0" width="5" height="5" fill="rgb(191,191,191)"/><rect x="60" y="0" width="5" height="5" fill="rgb(223,223,223)"/><rect x="65" y="0" width="5" height="5" fill="rgb(217,217,217)"/><rect x="70" y="0" width="5" height="5" fill="rgb(219,219,219)"/><rect x="0" y="5" width="5" height="5" fill="rgb(195,195,195)"/><rect x="5" y="5" width="5" height="5" fill="rgb(180,180,180)"/><rect x="10" y="5" width="5" height="5" fill="rgb(187,187,187)"/><rect x="15" y="5" width="5" height="5" fill="rgb(179,179,179)"/><rect x="20" y="5" width="5" height="5" fill="rgb(176,176,176)"/><rect x="25" y="5" width="5" height="5" fill="rgb(236,236,236)"/><rect x="30" y="5" width="5" height="5" fill="rgb(178,178,178)"/><rect x="35" y="5" width="5" height="5" fill="rgb(169,169,169)"/><rect x="40" y="5" width="5" height="5" fill="rgb(200,200,200)"/><rect x="45" y="5" width="5" height="5" fill="rgb(180,180,180)"/><rect x="50" y="5" width="5" height="5" fill="rgb(189,189,189)"/><rect x="55" y="5" width="5" height="5" fill="rgb(174,174,174)"/><rect x="60" y="5" width="5" height="5" fill="rgb(179,179,179)"/><rect x="65" y="5" width="5" height="5" fill="rgb(174,174,174)"/><rect x="70" y="5" width="5" height="5" fill="rgb(200,200,200)"/><rect x="0" y="10" width="5" height="5" fill="rgb(247,247,247)"/><rect x="5" y="10" width="5" height="5" fill="rgb(250,250,250)"/><rect x="10" y="10" width="5" height="5" fill="rgb(249,249,249)"/><rect x="15" y="10" width="5" height="5" fill="rgb(237,237,237)"/><rect x="20" y="10" width="5" height="5" fill="rgb(202,202,202)"/><rect x="25" y="10" width="5" height="5" fill="rgb(252,252,252)"/><rect x="30" y="10" width="5" height="5" fill="rgb(243,243,243)"/><rect x="35" y="10" width="5" height="5" fill="rgb(249,249,249)"/><rect x="40" y="10" width="5" height="5" fill="rgb(251,251,251)"/><rect x="45" y="10" width="5" height="5" fill="rgb(247,247,247)"/><rect x="50" y="10" width="5" height="5" fill="rgb(247,247,247)"/><rect x="55" y="10" width="5" height="5" fill="rgb(250,250,250)"/><rect x="60" y="10" width="5" height="5" fill="rgb(249,249,249)"/><rect x="65" y="10" width="5" height="5" fill="rgb(247,247,247)"/><rect x="70" y="10" width="5" height="5" fill="rgb(251,251,251)"/></svg>
<div class="t" style="left:1189.7px;top:628.98px;font-size:14.2px;line-height:14.2px;font-weight:700;color:#c8440d;">Select</div>
<svg class="a" style="left:162px;top:626px" width="120" height="25" shape-rendering="crispEdges"><rect x="0" y="0" width="5" height="5" fill="rgb(247,247,247)"/><rect x="5" y="0" width="5" height="5" fill="rgb(250,250,250)"/><rect x="10" y="0" width="5" height="5" fill="rgb(244,244,244)"/><rect x="15" y="0" width="5" height="5" fill="rgb(251,251,251)"/><rect x="20" y="0" width="5" height="5" fill="rgb(245,245,245)"/><rect x="25" y="0" width="5" height="5" fill="rgb(246,246,246)"/><rect x="30" y="0" width="5" height="5" fill="rgb(251,251,251)"/><rect x="40" y="0" width="5" height="5" fill="rgb(245,245,245)"/><rect x="45" y="0" width="5" height="5" fill="rgb(251,251,251)"/><rect x="50" y="0" width="5" height="5" fill="rgb(244,244,244)"/><rect x="60" y="0" width="5" height="5" fill="rgb(250,250,250)"/><rect x="65" y="0" width="5" height="5" fill="rgb(252,252,252)"/><rect x="70" y="0" width="5" height="5" fill="rgb(245,245,245)"/><rect x="80" y="0" width="5" height="5" fill="rgb(249,249,249)"/><rect x="85" y="0" width="5" height="5" fill="rgb(248,248,248)"/><rect x="90" y="0" width="5" height="5" fill="rgb(249,249,249)"/><rect x="95" y="0" width="5" height="5" fill="rgb(245,245,245)"/><rect x="100" y="0" width="5" height="5" fill="rgb(251,251,251)"/><rect x="105" y="0" width="5" height="5" fill="rgb(245,245,245)"/><rect x="110" y="0" width="5" height="5" fill="rgb(250,250,250)"/><rect x="115" y="0" width="5" height="5" fill="rgb(247,247,247)"/><rect x="0" y="5" width="5" height="5" fill="rgb(205,205,205)"/><rect x="5" y="5" width="5" height="5" fill="rgb(169,169,169)"/><rect x="10" y="5" width="5" height="5" fill="rgb(179,179,179)"/><rect x="15" y="5" width="5" height="5" fill="rgb(191,191,191)"/><rect x="20" y="5" width="5" height="5" fill="rgb(174,174,174)"/><rect x="25" y="5" width="5" height="5" fill="rgb(185,185,185)"/><rect x="30" y="5" width="5" height="5" fill="rgb(193,193,193)"/><rect x="35" y="5" width="5" height="5" fill="rgb(234,234,234)"/><rect x="40" y="5" width="5" height="5" fill="rgb(179,179,179)"/><rect x="45" y="5" width="5" height="5" fill="rgb(166,166,166)"/><rect x="50" y="5" width="5" height="5" fill="rgb(156,156,156)"/><rect x="55" y="5" width="5" height="5" fill="rgb(240,240,240)"/><rect x="60" y="5" width="5" height="5" fill="rgb(201,201,201)"/><rect x="65" y="5" width="5" height="5" fill="rgb(207,207,207)"/><rect x="70" y="5" width="5" height="5" fill="rgb(177,177,177)"/><rect x="75" y="5" width="5" height="5" fill="rgb(196,196,196)"/><rect x="80" y="5" width="5" height="5" fill="rgb(157,157,157)"/><rect x="85" y="5" width="5" height="5" fill="rgb(163,163,163)"/><rect x="90" y="5" width="5" height="5" fill="rgb(205,205,205)"/><rect x="95" y="5" width="5" height="5" fill="rgb(190,190,190)"/><rect x="100" y="5" width="5" height="5" fill="rgb(168,168,168)"/><rect x="105" y="5" width="5" height="5" fill="rgb(179,179,179)"/><rect x="110" y="5" width="5" height="5" fill="rgb(165,165,165)"/><rect x="115" y="5" width="5" height="5" fill="rgb(195,195,195)"/><rect x="0" y="10" width="5" height="5" fill="rgb(178,178,178)"/><rect x="5" y="10" width="5" height="5" fill="rgb(196,196,196)"/><rect x="10" y="10" width="5" height="5" fill="rgb(179,179,179)"/><rect x="15" y="10" width="5" height="5" fill="rgb(180,180,180)"/><rect x="20" y="10" width="5" height="5" fill="rgb(178,178,178)"/><rect x="25" y="10" width="5" height="5" fill="rgb(196,196,196)"/><rect x="30" y="10" width="5" height="5" fill="rgb(181,181,181)"/><rect x="35" y="10" width="5" height="5" fill="rgb(208,208,208)"/><rect x="40" y="10" width="5" height="5" fill="rgb(178,178,178)"/><rect x="45" y="10" width="5" height="5" fill="rgb(162,162,162)"/><rect x="50" y="10" width="5" height="5" fill="rgb(168,168,168)"/><rect x="55" y="10" width="5" height="5" fill="rgb(204,204,204)"/><rect x="60" y="10" width="5" height="5" fill="rgb(201,201,201)"/><rect x="65" y="10" width="5" height="5" fill="rgb(190,190,190)"/><rect x="70" y="10" width="5" height="5" fill="rgb(177,177,177)"/><rect x="75" y="10" width="5" height="5" fill="rgb(173,173,173)"/><rect x="80" y="10" width="5" height="5" fill="rgb(155,155,155)"/><rect x="85" y="10" width="5" height="5" fill="rgb(161,161,161)"/><rect x="90" y="10" width="5" height="5" fill="rgb(179,179,179)"/><rect x="95" y="10" width="5" height="5" fill="rgb(168,168,168)"/><rect x="100" y="10" width="5" height="5" fill="rgb(191,191,191)"/><rect x="105" y="10" width="5" height="5" fill="rgb(179,179,179)"/><rect x="110" y="10" width="5" height="5" fill="rgb(166,166,166)"/><rect x="115" y="10" width="5" height="5" fill="rgb(176,176,176)"/><rect x="0" y="15" width="5" height="5" fill="rgb(242,242,242)"/><rect x="5" y="15" width="5" height="5" fill="rgb(246,246,246)"/><rect x="10" y="15" width="5" height="5" fill="rgb(244,244,244)"/><rect x="15" y="15" width="5" height="5" fill="rgb(247,247,247)"/><rect x="20" y="15" width="5" height="5" fill="rgb(241,241,241)"/><rect x="25" y="15" width="5" height="5" fill="rgb(244,244,244)"/><rect x="30" y="15" width="5" height="5" fill="rgb(251,251,251)"/><rect x="40" y="15" width="5" height="5" fill="rgb(245,245,245)"/><rect x="45" y="15" width="5" height="5" fill="rgb(251,251,251)"/><rect x="50" y="15" width="5" height="5" fill="rgb(244,244,244)"/><rect x="60" y="15" width="5" height="5" fill="rgb(244,244,244)"/><rect x="65" y="15" width="5" height="5" fill="rgb(245,245,245)"/><rect x="70" y="15" width="5" height="5" fill="rgb(245,245,245)"/><rect x="80" y="15" width="5" height="5" fill="rgb(251,251,251)"/><rect x="85" y="15" width="5" height="5" fill="rgb(248,248,248)"/><rect x="90" y="15" width="5" height="5" fill="rgb(247,247,247)"/><rect x="95" y="15" width="5" height="5" fill="rgb(240,240,240)"/><rect x="100" y="15" width="5" height="5" fill="rgb(248,248,248)"/><rect x="105" y="15" width="5" height="5" fill="rgb(245,245,245)"/><rect x="110" y="15" width="5" height="5" fill="rgb(250,250,250)"/><rect x="115" y="15" width="5" height="5" fill="rgb(247,247,247)"/></svg>
<svg class="a" style="left:317px;top:626px" width="75" height="25" shape-rendering="crispEdges"><rect x="0" y="0" width="5" height="5" fill="rgb(246,246,246)"/><rect x="5" y="0" width="5" height="5" fill="rgb(250,250,250)"/><rect x="10" y="0" width="5" height="5" fill="rgb(244,244,244)"/><rect x="20" y="0" width="5" height="5" fill="rgb(247,247,247)"/><rect x="25" y="0" width="5" height="5" fill="rgb(248,248,248)"/><rect x="30" y="0" width="5" height="5" fill="rgb(241,241,241)"/><rect x="35" y="0" width="5" height="5" fill="rgb(250,250,250)"/><rect x="40" y="0" width="5" height="5" fill="rgb(251,251,251)"/><rect x="45" y="0" width="5" height="5" fill="rgb(246,246,246)"/><rect x="50" y="0" width="5" height="5" fill="rgb(247,247,247)"/><rect x="55" y="0" width="5" height="5" fill="rgb(248,248,248)"/><rect x="60" y="0" width="5" height="5" fill="rgb(244,244,244)"/><rect x="70" y="0" width="5" height="5" fill="rgb(248,248,248)"/><rect x="0" y="5" width="5" height="5" fill="rgb(205,205,205)"/><rect x="5" y="5" width="5" height="5" fill="rgb(184,184,184)"/><rect x="10" y="5" width="5" height="5" fill="rgb(171,171,171)"/><rect x="15" y="5" width="5" height="5" fill="rgb(223,223,223)"/><rect x="20" y="5" width="5" height="5" fill="rgb(181,181,181)"/><rect x="25" y="5" width="5" height="5" fill="rgb(186,186,186)"/><rect x="30" y="5" width="5" height="5" fill="rgb(187,187,187)"/><rect x="35" y="5" width="5" height="5" fill="rgb(223,223,223)"/><rect x="40" y="5" width="5" height="5" fill="rgb(226,226,226)"/><rect x="45" y="5" width="5" height="5" fill="rgb(174,174,174)"/><rect x="50" y="5" width="5" height="5" fill="rgb(178,178,178)"/><rect x="55" y="5" width="5" height="5" fill="rgb(175,175,175)"/><rect x="60" y="5" width="5" height="5" fill="rgb(176,176,176)"/><rect x="65" y="5" width="5" height="5" fill="rgb(211,211,211)"/><rect x="70" y="5" width="5" height="5" fill="rgb(171,171,171)"/><rect x="0" y="10" width="5" height="5" fill="rgb(177,177,177)"/><rect x="5" y="10" width="5" height="5" fill="rgb(209,209,209)"/><rect x="10" y="10" width="5" height="5" fill="rgb(182,182,182)"/><rect x="15" y="10" width="5" height="5" fill="rgb(209,209,209)"/><rect x="20" y="10" width="5" height="5" fill="rgb(178,178,178)"/><rect x="25" y="10" width="5" height="5" fill="rgb(190,190,190)"/><rect x="30" y="10" width="5" height="5" fill="rgb(195,195,195)"/><rect x="35" y="10" width="5" height="5" fill="rgb(245,245,245)"/><rect x="40" y="10" width="5" height="5" fill="rgb(205,205,205)"/><rect x="45" y="10" width="5" height="5" fill="rgb(188,188,188)"/><rect x="50" y="10" width="5" height="5" fill="rgb(180,180,180)"/><rect x="55" y="10" width="5" height="5" fill="rgb(167,167,167)"/><rect x="60" y="10" width="5" height="5" fill="rgb(174,174,174)"/><rect x="65" y="10" width="5" height="5" fill="rgb(191,191,191)"/><rect x="70" y="10" width="5" height="5" fill="rgb(165,165,165)"/><rect x="0" y="15" width="5" height="5" fill="rgb(242,242,242)"/><rect x="5" y="15" width="5" height="5" fill="rgb(246,246,246)"/><rect x="10" y="15" width="5" height="5" fill="rgb(244,244,244)"/><rect x="15" y="15" width="5" height="5" fill="rgb(250,250,250)"/><rect x="20" y="15" width="5" height="5" fill="rgb(246,246,246)"/><rect x="25" y="15" width="5" height="5" fill="rgb(250,250,250)"/><rect x="30" y="15" width="5" height="5" fill="rgb(250,250,250)"/><rect x="35" y="15" width="5" height="5" fill="rgb(252,252,252)"/><rect x="40" y="15" width="5" height="5" fill="rgb(245,245,245)"/><rect x="45" y="15" width="5" height="5" fill="rgb(242,242,242)"/><rect x="50" y="15" width="5" height="5" fill="rgb(247,247,247)"/><rect x="55" y="15" width="5" height="5" fill="rgb(245,245,245)"/><rect x="60" y="15" width="5" height="5" fill="rgb(240,240,240)"/><rect x="70" y="15" width="5" height="5" fill="rgb(250,250,250)"/></svg>
<svg class="a" style="left:447px;top:626px" width="30" height="25" shape-rendering="crispEdges"><rect x="0" y="0" width="5" height="5" fill="rgb(241,241,241)"/><rect x="5" y="0" width="5" height="5" fill="rgb(242,242,242)"/><rect x="0" y="5" width="5" height="5" fill="rgb(189,189,189)"/><rect x="5" y="5" width="5" height="5" fill="rgb(183,183,183)"/><rect x="10" y="5" width="5" height="5" fill="rgb(203,203,203)"/><rect x="15" y="5" width="5" height="5" fill="rgb(220,220,220)"/><rect x="20" y="5" width="5" height="5" fill="rgb(209,209,209)"/><rect x="25" y="5" width="5" height="5" fill="rgb(183,183,183)"/><rect x="0" y="10" width="5" height="5" fill="rgb(216,216,216)"/><rect x="5" y="10" width="5" height="5" fill="rgb(181,181,181)"/><rect x="10" y="10" width="5" height="5" fill="rgb(150,150,150)"/><rect x="15" y="10" width="5" height="5" fill="rgb(184,184,184)"/><rect x="20" y="10" width="5" height="5" fill="rgb(163,163,163)"/><rect x="25" y="10" width="5" height="5" fill="rgb(172,172,172)"/><rect x="0" y="15" width="5" height="5" fill="rgb(252,252,252)"/><rect x="5" y="15" width="5" height="5" fill="rgb(251,251,251)"/><rect x="10" y="15" width="5" height="5" fill="rgb(244,244,244)"/><rect x="15" y="15" width="5" height="5" fill="rgb(249,249,249)"/><rect x="20" y="15" width="5" height="5" fill="rgb(244,244,244)"/><rect x="25" y="15" width="5" height="5" fill="rgb(247,247,247)"/></svg>
<svg class="a" style="left:661px;top:630px" width="75" height="25" shape-rendering="crispEdges"><rect x="0" y="0" width="5" height="5" fill="rgb(175,175,175)"/><rect x="5" y="0" width="5" height="5" fill="rgb(186,186,186)"/><rect x="10" y="0" width="5" height="5" fill="rgb(168,168,168)"/><rect x="15" y="0" width="5" height="5" fill="rgb(250,250,250)"/><rect x="20" y="0" width="5" height="5" fill="rgb(181,181,181)"/><rect x="25" y="0" width="5" height="5" fill="rgb(182,182,182)"/><rect x="30" y="0" width="5" height="5" fill="rgb(169,169,169)"/><rect x="35" y="0" width="5" height="5" fill="rgb(246,246,246)"/><rect x="40" y="0" width="5" height="5" fill="rgb(219,219,219)"/><rect x="45" y="0" width="5" height="5" fill="rgb(168,168,168)"/><rect x="50" y="0" width="5" height="5" fill="rgb(173,173,173)"/><rect x="55" y="0" width="5" height="5" fill="rgb(180,180,180)"/><rect x="60" y="0" width="5" height="5" fill="rgb(168,168,168)"/><rect x="65" y="0" width="5" height="5" fill="rgb(208,208,208)"/><rect x="70" y="0" width="5" height="5" fill="rgb(166,166,166)"/><rect x="0" y="5" width="5" height="5" fill="rgb(183,183,183)"/><rect x="5" y="5" width="5" height="5" fill="rgb(191,191,191)"/><rect x="10" y="5" width="5" height="5" fill="rgb(167,167,167)"/><rect x="15" y="5" width="5" height="5" fill="rgb(219,219,219)"/><rect x="20" y="5" width="5" height="5" fill="rgb(178,178,178)"/><rect x="25" y="5" width="5" height="5" fill="rgb(188,188,188)"/><rect x="30" y="5" width="5" height="5" fill="rgb(172,172,172)"/><rect x="35" y="5" width="5" height="5" fill="rgb(218,218,218)"/><rect x="40" y="5" width="5" height="5" fill="rgb(188,188,188)"/><rect x="45" y="5" width="5" height="5" fill="rgb(191,191,191)"/><rect x="50" y="5" width="5" height="5" fill="rgb(182,182,182)"/><rect x="55" y="5" width="5" height="5" fill="rgb(180,180,180)"/><rect x="60" y="5" width="5" height="5" fill="rgb(171,171,171)"/><rect x="65" y="5" width="5" height="5" fill="rgb(193,193,193)"/><rect x="70" y="5" width="5" height="5" fill="rgb(168,168,168)"/><rect x="0" y="10" width="5" height="5" fill="rgb(246,246,246)"/><rect x="5" y="10" width="5" height="5" fill="rgb(249,249,249)"/><rect x="10" y="10" width="5" height="5" fill="rgb(240,240,240)"/><rect x="20" y="10" width="5" height="5" fill="rgb(249,249,249)"/><rect x="25" y="10" width="5" height="5" fill="rgb(248,248,248)"/><rect x="30" y="10" width="5" height="5" fill="rgb(241,241,241)"/><rect x="35" y="10" width="5" height="5" fill="rgb(250,250,250)"/><rect x="40" y="10" width="5" height="5" fill="rgb(246,246,246)"/><rect x="45" y="10" width="5" height="5" fill="rgb(243,243,243)"/><rect x="50" y="10" width="5" height="5" fill="rgb(246,246,246)"/><rect x="55" y="10" width="5" height="5" fill="rgb(248,248,248)"/><rect x="60" y="10" width="5" height="5" fill="rgb(240,240,240)"/><rect x="70" y="10" width="5" height="5" fill="rgb(250,250,250)"/></svg>
<div class="a" style="left:149px;top:661px;width:358px;height:5px;background:#f7f7f7"></div>
<div class="a" style="left:648px;top:661px;width:112px;height:5px;background:#f7f7f7"></div>
<div class="a" style="left:1055px;top:661px;width:113px;height:5px;background:#f7f7f7"></div>
<div class="a" style="left:24px;top:720px;width:1232px;height:1px;background:#e4e4e7"></div>
<div class="a" style="left:48.299999999999955px;top:680px;width:76.5px;height:24px;background:#fafafa;border:1px solid #e4e4e7;border-radius:6px"></div>
<div class="t" style="left:56.792187499999955px;top:687.13px;font-size:12.6px;line-height:12.6px;font-weight:400;color:#3f3f46;">Muster AG</div>
<div class="a" style="left:575.3px;top:680px;width:42.2px;height:24px;background:#fafafa;border:1px solid #e4e4e7;border-radius:6px"></div>
<div class="t" style="left:582.7445312499999px;top:687.13px;font-size:12.6px;line-height:12.6px;font-weight:400;color:#3f3f46;">male</div>
<div class="a" style="left:803.3px;top:680px;width:23.3px;height:24px;background:#fafafa;border:1px solid #e4e4e7;border-radius:6px"></div>
<div class="t" style="left:811.44609375px;top:687.13px;font-size:12.6px;line-height:12.6px;font-weight:400;color:#3f3f46;">1</div>
<div class="a" style="left:964.5px;top:680px;width:23px;height:24px;background:#fafafa;border:1px solid #e4e4e7;border-radius:6px"></div>
<div class="t" style="left:972.49609375px;top:687.13px;font-size:12.6px;line-height:12.6px;font-weight:400;color:#3f3f46;">1</div>
<div class="a" style="left:1063px;top:678px;width:94.5px;height:30px;background:#f9f9f9;border-radius:3px"></div>
<svg class="a" style="left:1073px;top:688px" width="75" height="25" shape-rendering="crispEdges"><rect x="0" y="0" width="5" height="5" fill="rgb(212,212,212)"/><rect x="5" y="0" width="5" height="5" fill="rgb(188,188,188)"/><rect x="10" y="0" width="5" height="5" fill="rgb(209,209,209)"/><rect x="15" y="0" width="5" height="5" fill="rgb(210,210,210)"/><rect x="20" y="0" width="5" height="5" fill="rgb(212,212,212)"/><rect x="25" y="0" width="5" height="5" fill="rgb(239,239,239)"/><rect x="30" y="0" width="5" height="5" fill="rgb(153,153,153)"/><rect x="35" y="0" width="5" height="5" fill="rgb(190,190,190)"/><rect x="40" y="0" width="5" height="5" fill="rgb(213,213,213)"/><rect x="45" y="0" width="5" height="5" fill="rgb(215,215,215)"/><rect x="50" y="0" width="5" height="5" fill="rgb(217,217,217)"/><rect x="55" y="0" width="5" height="5" fill="rgb(191,191,191)"/><rect x="60" y="0" width="5" height="5" fill="rgb(223,223,223)"/><rect x="65" y="0" width="5" height="5" fill="rgb(217,217,217)"/><rect x="70" y="0" width="5" height="5" fill="rgb(219,219,219)"/><rect x="0" y="5" width="5" height="5" fill="rgb(195,195,195)"/><rect x="5" y="5" width="5" height="5" fill="rgb(180,180,180)"/><rect x="10" y="5" width="5" height="5" fill="rgb(187,187,187)"/><rect x="15" y="5" width="5" height="5" fill="rgb(179,179,179)"/><rect x="20" y="5" width="5" height="5" fill="rgb(176,176,176)"/><rect x="25" y="5" width="5" height="5" fill="rgb(236,236,236)"/><rect x="30" y="5" width="5" height="5" fill="rgb(178,178,178)"/><rect x="35" y="5" width="5" height="5" fill="rgb(169,169,169)"/><rect x="40" y="5" width="5" height="5" fill="rgb(200,200,200)"/><rect x="45" y="5" width="5" height="5" fill="rgb(180,180,180)"/><rect x="50" y="5" width="5" height="5" fill="rgb(189,189,189)"/><rect x="55" y="5" width="5" height="5" fill="rgb(174,174,174)"/><rect x="60" y="5" width="5" height="5" fill="rgb(179,179,179)"/><rect x="65" y="5" width="5" height="5" fill="rgb(174,174,174)"/><rect x="70" y="5" width="5" height="5" fill="rgb(200,200,200)"/><rect x="0" y="10" width="5" height="5" fill="rgb(247,247,247)"/><rect x="5" y="10" width="5" height="5" fill="rgb(250,250,250)"/><rect x="10" y="10" width="5" height="5" fill="rgb(249,249,249)"/><rect x="15" y="10" width="5" height="5" fill="rgb(237,237,237)"/><rect x="20" y="10" width="5" height="5" fill="rgb(202,202,202)"/><rect x="25" y="10" width="5" height="5" fill="rgb(252,252,252)"/><rect x="30" y="10" width="5" height="5" fill="rgb(243,243,243)"/><rect x="35" y="10" width="5" height="5" fill="rgb(249,249,249)"/><rect x="40" y="10" width="5" height="5" fill="rgb(251,251,251)"/><rect x="45" y="10" width="5" height="5" fill="rgb(247,247,247)"/><rect x="50" y="10" width="5" height="5" fill="rgb(247,247,247)"/><rect x="55" y="10" width="5" height="5" fill="rgb(250,250,250)"/><rect x="60" y="10" width="5" height="5" fill="rgb(249,249,249)"/><rect x="65" y="10" width="5" height="5" fill="rgb(247,247,247)"/><rect x="70" y="10" width="5" height="5" fill="rgb(251,251,251)"/></svg>
<div class="t" style="left:1189.7px;top:685.98px;font-size:14.2px;line-height:14.2px;font-weight:700;color:#c8440d;">Select</div>
<svg class="a" style="left:162px;top:683px" width="115" height="25" shape-rendering="crispEdges"><rect x="0" y="0" width="5" height="5" fill="rgb(246,246,246)"/><rect x="5" y="0" width="5" height="5" fill="rgb(250,250,250)"/><rect x="10" y="0" width="5" height="5" fill="rgb(244,244,244)"/><rect x="15" y="0" width="5" height="5" fill="rgb(252,252,252)"/><rect x="20" y="0" width="5" height="5" fill="rgb(249,249,249)"/><rect x="25" y="0" width="5" height="5" fill="rgb(241,241,241)"/><rect x="40" y="0" width="5" height="5" fill="rgb(246,246,246)"/><rect x="45" y="0" width="5" height="5" fill="rgb(247,247,247)"/><rect x="50" y="0" width="5" height="5" fill="rgb(250,250,250)"/><rect x="55" y="0" width="5" height="5" fill="rgb(251,251,251)"/><rect x="60" y="0" width="5" height="5" fill="rgb(240,240,240)"/><rect x="65" y="0" width="5" height="5" fill="rgb(244,244,244)"/><rect x="70" y="0" width="5" height="5" fill="rgb(245,245,245)"/><rect x="75" y="0" width="5" height="5" fill="rgb(246,246,246)"/><rect x="85" y="0" width="5" height="5" fill="rgb(248,248,248)"/><rect x="90" y="0" width="5" height="5" fill="rgb(243,243,243)"/><rect x="95" y="0" width="5" height="5" fill="rgb(246,246,246)"/><rect x="100" y="0" width="5" height="5" fill="rgb(248,248,248)"/><rect x="105" y="0" width="5" height="5" fill="rgb(251,251,251)"/><rect x="110" y="0" width="5" height="5" fill="rgb(247,247,247)"/><rect x="0" y="5" width="5" height="5" fill="rgb(204,204,204)"/><rect x="5" y="5" width="5" height="5" fill="rgb(169,169,169)"/><rect x="10" y="5" width="5" height="5" fill="rgb(175,175,175)"/><rect x="15" y="5" width="5" height="5" fill="rgb(196,196,196)"/><rect x="20" y="5" width="5" height="5" fill="rgb(181,181,181)"/><rect x="25" y="5" width="5" height="5" fill="rgb(166,166,166)"/><rect x="30" y="5" width="5" height="5" fill="rgb(241,241,241)"/><rect x="35" y="5" width="5" height="5" fill="rgb(202,202,202)"/><rect x="40" y="5" width="5" height="5" fill="rgb(176,176,176)"/><rect x="45" y="5" width="5" height="5" fill="rgb(165,165,165)"/><rect x="50" y="5" width="5" height="5" fill="rgb(186,186,186)"/><rect x="55" y="5" width="5" height="5" fill="rgb(244,244,244)"/><rect x="60" y="5" width="5" height="5" fill="rgb(176,176,176)"/><rect x="65" y="5" width="5" height="5" fill="rgb(167,167,167)"/><rect x="70" y="5" width="5" height="5" fill="rgb(199,199,199)"/><rect x="75" y="5" width="5" height="5" fill="rgb(178,178,178)"/><rect x="80" y="5" width="5" height="5" fill="rgb(185,185,185)"/><rect x="85" y="5" width="5" height="5" fill="rgb(170,170,170)"/><rect x="90" y="5" width="5" height="5" fill="rgb(207,207,207)"/><rect x="95" y="5" width="5" height="5" fill="rgb(196,196,196)"/><rect x="100" y="5" width="5" height="5" fill="rgb(175,175,175)"/><rect x="105" y="5" width="5" height="5" fill="rgb(223,223,223)"/><rect x="110" y="5" width="5" height="5" fill="rgb(181,181,181)"/><rect x="0" y="10" width="5" height="5" fill="rgb(178,178,178)"/><rect x="5" y="10" width="5" height="5" fill="rgb(193,193,193)"/><rect x="10" y="10" width="5" height="5" fill="rgb(175,175,175)"/><rect x="15" y="10" width="5" height="5" fill="rgb(199,199,199)"/><rect x="20" y="10" width="5" height="5" fill="rgb(172,172,172)"/><rect x="25" y="10" width="5" height="5" fill="rgb(177,177,177)"/><rect x="30" y="10" width="5" height="5" fill="rgb(197,197,197)"/><rect x="35" y="10" width="5" height="5" fill="rgb(190,190,190)"/><rect x="40" y="10" width="5" height="5" fill="rgb(176,176,176)"/><rect x="45" y="10" width="5" height="5" fill="rgb(170,170,170)"/><rect x="50" y="10" width="5" height="5" fill="rgb(174,174,174)"/><rect x="55" y="10" width="5" height="5" fill="rgb(230,230,230)"/><rect x="60" y="10" width="5" height="5" fill="rgb(198,198,198)"/><rect x="65" y="10" width="5" height="5" fill="rgb(205,205,205)"/><rect x="70" y="10" width="5" height="5" fill="rgb(170,170,170)"/><rect x="75" y="10" width="5" height="5" fill="rgb(177,177,177)"/><rect x="80" y="10" width="5" height="5" fill="rgb(158,158,158)"/><rect x="85" y="10" width="5" height="5" fill="rgb(167,167,167)"/><rect x="90" y="10" width="5" height="5" fill="rgb(201,201,201)"/><rect x="95" y="10" width="5" height="5" fill="rgb(237,237,237)"/><rect x="100" y="10" width="5" height="5" fill="rgb(167,167,167)"/><rect x="105" y="10" width="5" height="5" fill="rgb(198,198,198)"/><rect x="110" y="10" width="5" height="5" fill="rgb(196,196,196)"/><rect x="0" y="15" width="5" height="5" fill="rgb(242,242,242)"/><rect x="5" y="15" width="5" height="5" fill="rgb(247,247,247)"/><rect x="10" y="15" width="5" height="5" fill="rgb(245,245,245)"/><rect x="15" y="15" width="5" height="5" fill="rgb(247,247,247)"/><rect x="20" y="15" width="5" height="5" fill="rgb(242,242,242)"/><rect x="25" y="15" width="5" height="5" fill="rgb(244,244,244)"/><rect x="40" y="15" width="5" height="5" fill="rgb(246,246,246)"/><rect x="45" y="15" width="5" height="5" fill="rgb(247,247,247)"/><rect x="50" y="15" width="5" height="5" fill="rgb(249,249,249)"/><rect x="60" y="15" width="5" height="5" fill="rgb(251,251,251)"/><rect x="65" y="15" width="5" height="5" fill="rgb(249,249,249)"/><rect x="70" y="15" width="5" height="5" fill="rgb(248,248,248)"/><rect x="75" y="15" width="5" height="5" fill="rgb(246,246,246)"/><rect x="85" y="15" width="5" height="5" fill="rgb(250,250,250)"/><rect x="90" y="15" width="5" height="5" fill="rgb(250,250,250)"/><rect x="100" y="15" width="5" height="5" fill="rgb(240,240,240)"/><rect x="105" y="15" width="5" height="5" fill="rgb(244,244,244)"/><rect x="110" y="15" width="5" height="5" fill="rgb(243,243,243)"/></svg>
<svg class="a" style="left:317px;top:683px" width="30" height="25" shape-rendering="crispEdges"><rect x="0" y="0" width="5" height="5" fill="rgb(248,248,248)"/><rect x="5" y="0" width="5" height="5" fill="rgb(251,251,251)"/><rect x="10" y="0" width="5" height="5" fill="rgb(250,250,250)"/><rect x="0" y="5" width="5" height="5" fill="rgb(148,148,148)"/><rect x="5" y="5" width="5" height="5" fill="rgb(186,186,186)"/><rect x="10" y="5" width="5" height="5" fill="rgb(188,188,188)"/><rect x="15" y="5" width="5" height="5" fill="rgb(205,205,205)"/><rect x="20" y="5" width="5" height="5" fill="rgb(209,209,209)"/><rect x="25" y="5" width="5" height="5" fill="rgb(226,226,226)"/><rect x="0" y="10" width="5" height="5" fill="rgb(165,165,165)"/><rect x="5" y="10" width="5" height="5" fill="rgb(161,161,161)"/><rect x="10" y="10" width="5" height="5" fill="rgb(171,171,171)"/><rect x="15" y="10" width="5" height="5" fill="rgb(150,150,150)"/><rect x="20" y="10" width="5" height="5" fill="rgb(167,167,167)"/><rect x="25" y="10" width="5" height="5" fill="rgb(171,171,171)"/><rect x="0" y="15" width="5" height="5" fill="rgb(249,249,249)"/><rect x="5" y="15" width="5" height="5" fill="rgb(248,248,248)"/><rect x="10" y="15" width="5" height="5" fill="rgb(250,250,250)"/><rect x="15" y="15" width="5" height="5" fill="rgb(243,243,243)"/><rect x="20" y="15" width="5" height="5" fill="rgb(218,218,218)"/><rect x="25" y="15" width="5" height="5" fill="rgb(231,231,231)"/></svg>
<svg class="a" style="left:447px;top:683px" width="25" height="25" shape-rendering="crispEdges"><rect x="0" y="0" width="5" height="5" fill="rgb(250,250,250)"/><rect x="5" y="0" width="5" height="5" fill="rgb(251,251,251)"/><rect x="15" y="0" width="5" height="5" fill="rgb(252,252,252)"/><rect x="0" y="5" width="5" height="5" fill="rgb(161,161,161)"/><rect x="5" y="5" width="5" height="5" fill="rgb(218,218,218)"/><rect x="10" y="5" width="5" height="5" fill="rgb(211,211,211)"/><rect x="15" y="5" width="5" height="5" fill="rgb(209,209,209)"/><rect x="20" y="5" width="5" height="5" fill="rgb(214,214,214)"/><rect x="0" y="10" width="5" height="5" fill="rgb(168,168,168)"/><rect x="5" y="10" width="5" height="5" fill="rgb(178,178,178)"/><rect x="10" y="10" width="5" height="5" fill="rgb(151,151,151)"/><rect x="15" y="10" width="5" height="5" fill="rgb(157,157,157)"/><rect x="20" y="10" width="5" height="5" fill="rgb(156,156,156)"/><rect x="0" y="15" width="5" height="5" fill="rgb(251,251,251)"/><rect x="5" y="15" width="5" height="5" fill="rgb(245,245,245)"/><rect x="10" y="15" width="5" height="5" fill="rgb(235,235,235)"/><rect x="15" y="15" width="5" height="5" fill="rgb(216,216,216)"/><rect x="20" y="15" width="5" height="5" fill="rgb(245,245,245)"/></svg>
<svg class="a" style="left:661px;top:687px" width="75" height="25" shape-rendering="crispEdges"><rect x="0" y="0" width="5" height="5" fill="rgb(175,175,175)"/><rect x="5" y="0" width="5" height="5" fill="rgb(165,165,165)"/><rect x="10" y="0" width="5" height="5" fill="rgb(157,157,157)"/><rect x="15" y="0" width="5" height="5" fill="rgb(241,241,241)"/><rect x="20" y="0" width="5" height="5" fill="rgb(201,201,201)"/><rect x="25" y="0" width="5" height="5" fill="rgb(204,204,204)"/><rect x="30" y="0" width="5" height="5" fill="rgb(154,154,154)"/><rect x="35" y="0" width="5" height="5" fill="rgb(229,229,229)"/><rect x="40" y="0" width="5" height="5" fill="rgb(222,222,222)"/><rect x="45" y="0" width="5" height="5" fill="rgb(190,190,190)"/><rect x="50" y="0" width="5" height="5" fill="rgb(165,165,165)"/><rect x="55" y="0" width="5" height="5" fill="rgb(162,162,162)"/><rect x="60" y="0" width="5" height="5" fill="rgb(157,157,157)"/><rect x="65" y="0" width="5" height="5" fill="rgb(175,175,175)"/><rect x="70" y="0" width="5" height="5" fill="rgb(166,166,166)"/><rect x="0" y="5" width="5" height="5" fill="rgb(183,183,183)"/><rect x="5" y="5" width="5" height="5" fill="rgb(168,168,168)"/><rect x="10" y="5" width="5" height="5" fill="rgb(163,163,163)"/><rect x="15" y="5" width="5" height="5" fill="rgb(202,202,202)"/><rect x="20" y="5" width="5" height="5" fill="rgb(199,199,199)"/><rect x="25" y="5" width="5" height="5" fill="rgb(190,190,190)"/><rect x="30" y="5" width="5" height="5" fill="rgb(165,165,165)"/><rect x="35" y="5" width="5" height="5" fill="rgb(191,191,191)"/><rect x="40" y="5" width="5" height="5" fill="rgb(209,209,209)"/><rect x="45" y="5" width="5" height="5" fill="rgb(182,182,182)"/><rect x="50" y="5" width="5" height="5" fill="rgb(190,190,190)"/><rect x="55" y="5" width="5" height="5" fill="rgb(165,165,165)"/><rect x="60" y="5" width="5" height="5" fill="rgb(162,162,162)"/><rect x="65" y="5" width="5" height="5" fill="rgb(189,189,189)"/><rect x="70" y="5" width="5" height="5" fill="rgb(171,171,171)"/><rect x="0" y="10" width="5" height="5" fill="rgb(246,246,246)"/><rect x="5" y="10" width="5" height="5" fill="rgb(251,251,251)"/><rect x="10" y="10" width="5" height="5" fill="rgb(244,244,244)"/><rect x="20" y="10" width="5" height="5" fill="rgb(245,245,245)"/><rect x="25" y="10" width="5" height="5" fill="rgb(245,245,245)"/><rect x="30" y="10" width="5" height="5" fill="rgb(245,245,245)"/><rect x="40" y="10" width="5" height="5" fill="rgb(248,248,248)"/><rect x="45" y="10" width="5" height="5" fill="rgb(242,242,242)"/><rect x="50" y="10" width="5" height="5" fill="rgb(246,246,246)"/><rect x="55" y="10" width="5" height="5" fill="rgb(251,251,251)"/><rect x="60" y="10" width="5" height="5" fill="rgb(244,244,244)"/><rect x="65" y="10" width="5" height="5" fill="rgb(249,249,249)"/><rect x="70" y="10" width="5" height="5" fill="rgb(248,248,248)"/></svg>
<div class="a" style="left:149px;top:718px;width:358px;height:5px;background:#f7f7f7"></div>
<div class="a" style="left:648px;top:718px;width:112px;height:5px;background:#f7f7f7"></div>
<div class="a" style="left:1055px;top:718px;width:113px;height:5px;background:#f7f7f7"></div>
<div class="a" style="left:48.299999999999955px;top:737px;width:76.5px;height:24px;background:#fafafa;border:1px solid #e4e4e7;border-radius:6px"></div>
<div class="t" style="left:56.792187499999955px;top:744.13px;font-size:12.6px;line-height:12.6px;font-weight:400;color:#3f3f46;">Muster AG</div>
<div class="a" style="left:575.3px;top:737px;width:42.2px;height:24px;background:#fafafa;border:1px solid #e4e4e7;border-radius:6px"></div>
<div class="t" style="left:582.7445312499999px;top:744.13px;font-size:12.6px;line-height:12.6px;font-weight:400;color:#3f3f46;">male</div>
<div class="a" style="left:803.3px;top:737px;width:23.3px;height:24px;background:#fafafa;border:1px solid #e4e4e7;border-radius:6px"></div>
<div class="t" style="left:811.44609375px;top:744.13px;font-size:12.6px;line-height:12.6px;font-weight:400;color:#3f3f46;">1</div>
<div class="a" style="left:964.5px;top:737px;width:23px;height:24px;background:#fafafa;border:1px solid #e4e4e7;border-radius:6px"></div>
<div class="t" style="left:972.49609375px;top:744.13px;font-size:12.6px;line-height:12.6px;font-weight:400;color:#3f3f46;">1</div>
<div class="a" style="left:1063px;top:735px;width:94.5px;height:30px;background:#f9f9f9;border-radius:3px"></div>
<svg class="a" style="left:1073px;top:745px" width="75" height="25" shape-rendering="crispEdges"><rect x="0" y="0" width="5" height="5" fill="rgb(212,212,212)"/><rect x="5" y="0" width="5" height="5" fill="rgb(188,188,188)"/><rect x="10" y="0" width="5" height="5" fill="rgb(209,209,209)"/><rect x="15" y="0" width="5" height="5" fill="rgb(210,210,210)"/><rect x="20" y="0" width="5" height="5" fill="rgb(212,212,212)"/><rect x="25" y="0" width="5" height="5" fill="rgb(239,239,239)"/><rect x="30" y="0" width="5" height="5" fill="rgb(153,153,153)"/><rect x="35" y="0" width="5" height="5" fill="rgb(190,190,190)"/><rect x="40" y="0" width="5" height="5" fill="rgb(213,213,213)"/><rect x="45" y="0" width="5" height="5" fill="rgb(215,215,215)"/><rect x="50" y="0" width="5" height="5" fill="rgb(217,217,217)"/><rect x="55" y="0" width="5" height="5" fill="rgb(191,191,191)"/><rect x="60" y="0" width="5" height="5" fill="rgb(223,223,223)"/><rect x="65" y="0" width="5" height="5" fill="rgb(217,217,217)"/><rect x="70" y="0" width="5" height="5" fill="rgb(219,219,219)"/><rect x="0" y="5" width="5" height="5" fill="rgb(195,195,195)"/><rect x="5" y="5" width="5" height="5" fill="rgb(180,180,180)"/><rect x="10" y="5" width="5" height="5" fill="rgb(187,187,187)"/><rect x="15" y="5" width="5" height="5" fill="rgb(179,179,179)"/><rect x="20" y="5" width="5" height="5" fill="rgb(176,176,176)"/><rect x="25" y="5" width="5" height="5" fill="rgb(236,236,236)"/><rect x="30" y="5" width="5" height="5" fill="rgb(178,178,178)"/><rect x="35" y="5" width="5" height="5" fill="rgb(169,169,169)"/><rect x="40" y="5" width="5" height="5" fill="rgb(200,200,200)"/><rect x="45" y="5" width="5" height="5" fill="rgb(180,180,180)"/><rect x="50" y="5" width="5" height="5" fill="rgb(189,189,189)"/><rect x="55" y="5" width="5" height="5" fill="rgb(174,174,174)"/><rect x="60" y="5" width="5" height="5" fill="rgb(179,179,179)"/><rect x="65" y="5" width="5" height="5" fill="rgb(174,174,174)"/><rect x="70" y="5" width="5" height="5" fill="rgb(200,200,200)"/><rect x="0" y="10" width="5" height="5" fill="rgb(247,247,247)"/><rect x="5" y="10" width="5" height="5" fill="rgb(250,250,250)"/><rect x="10" y="10" width="5" height="5" fill="rgb(249,249,249)"/><rect x="15" y="10" width="5" height="5" fill="rgb(237,237,237)"/><rect x="20" y="10" width="5" height="5" fill="rgb(202,202,202)"/><rect x="25" y="10" width="5" height="5" fill="rgb(252,252,252)"/><rect x="30" y="10" width="5" height="5" fill="rgb(243,243,243)"/><rect x="35" y="10" width="5" height="5" fill="rgb(249,249,249)"/><rect x="40" y="10" width="5" height="5" fill="rgb(251,251,251)"/><rect x="45" y="10" width="5" height="5" fill="rgb(247,247,247)"/><rect x="50" y="10" width="5" height="5" fill="rgb(247,247,247)"/><rect x="55" y="10" width="5" height="5" fill="rgb(250,250,250)"/><rect x="60" y="10" width="5" height="5" fill="rgb(249,249,249)"/><rect x="65" y="10" width="5" height="5" fill="rgb(247,247,247)"/><rect x="70" y="10" width="5" height="5" fill="rgb(251,251,251)"/></svg>
<div class="t" style="left:1189.7px;top:742.98px;font-size:14.2px;line-height:14.2px;font-weight:700;color:#c8440d;">Select</div>
<svg class="a" style="left:162px;top:740px" width="115" height="25" shape-rendering="crispEdges"><rect x="0" y="0" width="5" height="5" fill="rgb(246,246,246)"/><rect x="5" y="0" width="5" height="5" fill="rgb(250,250,250)"/><rect x="10" y="0" width="5" height="5" fill="rgb(244,244,244)"/><rect x="15" y="0" width="5" height="5" fill="rgb(250,250,250)"/><rect x="20" y="0" width="5" height="5" fill="rgb(246,246,246)"/><rect x="25" y="0" width="5" height="5" fill="rgb(244,244,244)"/><rect x="40" y="0" width="5" height="5" fill="rgb(246,246,246)"/><rect x="45" y="0" width="5" height="5" fill="rgb(247,247,247)"/><rect x="50" y="0" width="5" height="5" fill="rgb(250,250,250)"/><rect x="55" y="0" width="5" height="5" fill="rgb(251,251,251)"/><rect x="60" y="0" width="5" height="5" fill="rgb(240,240,240)"/><rect x="65" y="0" width="5" height="5" fill="rgb(250,250,250)"/><rect x="70" y="0" width="5" height="5" fill="rgb(250,250,250)"/><rect x="75" y="0" width="5" height="5" fill="rgb(246,246,246)"/><rect x="80" y="0" width="5" height="5" fill="rgb(252,252,252)"/><rect x="85" y="0" width="5" height="5" fill="rgb(249,249,249)"/><rect x="90" y="0" width="5" height="5" fill="rgb(248,248,248)"/><rect x="95" y="0" width="5" height="5" fill="rgb(250,250,250)"/><rect x="100" y="0" width="5" height="5" fill="rgb(244,244,244)"/><rect x="105" y="0" width="5" height="5" fill="rgb(251,251,251)"/><rect x="110" y="0" width="5" height="5" fill="rgb(247,247,247)"/><rect x="0" y="5" width="5" height="5" fill="rgb(204,204,204)"/><rect x="5" y="5" width="5" height="5" fill="rgb(169,169,169)"/><rect x="10" y="5" width="5" height="5" fill="rgb(175,175,175)"/><rect x="15" y="5" width="5" height="5" fill="rgb(196,196,196)"/><rect x="20" y="5" width="5" height="5" fill="rgb(174,174,174)"/><rect x="25" y="5" width="5" height="5" fill="rgb(172,172,172)"/><rect x="30" y="5" width="5" height="5" fill="rgb(225,225,225)"/><rect x="35" y="5" width="5" height="5" fill="rgb(202,202,202)"/><rect x="40" y="5" width="5" height="5" fill="rgb(176,176,176)"/><rect x="45" y="5" width="5" height="5" fill="rgb(165,165,165)"/><rect x="50" y="5" width="5" height="5" fill="rgb(186,186,186)"/><rect x="55" y="5" width="5" height="5" fill="rgb(244,244,244)"/><rect x="60" y="5" width="5" height="5" fill="rgb(176,176,176)"/><rect x="65" y="5" width="5" height="5" fill="rgb(205,205,205)"/><rect x="70" y="5" width="5" height="5" fill="rgb(202,202,202)"/><rect x="75" y="5" width="5" height="5" fill="rgb(196,196,196)"/><rect x="80" y="5" width="5" height="5" fill="rgb(188,188,188)"/><rect x="85" y="5" width="5" height="5" fill="rgb(169,169,169)"/><rect x="90" y="5" width="5" height="5" fill="rgb(169,169,169)"/><rect x="95" y="5" width="5" height="5" fill="rgb(207,207,207)"/><rect x="100" y="5" width="5" height="5" fill="rgb(179,179,179)"/><rect x="105" y="5" width="5" height="5" fill="rgb(171,171,171)"/><rect x="110" y="5" width="5" height="5" fill="rgb(195,195,195)"/><rect x="0" y="10" width="5" height="5" fill="rgb(178,178,178)"/><rect x="5" y="10" width="5" height="5" fill="rgb(193,193,193)"/><rect x="10" y="10" width="5" height="5" fill="rgb(175,175,175)"/><rect x="15" y="10" width="5" height="5" fill="rgb(178,178,178)"/><rect x="20" y="10" width="5" height="5" fill="rgb(188,188,188)"/><rect x="25" y="10" width="5" height="5" fill="rgb(183,183,183)"/><rect x="30" y="10" width="5" height="5" fill="rgb(198,198,198)"/><rect x="35" y="10" width="5" height="5" fill="rgb(190,190,190)"/><rect x="40" y="10" width="5" height="5" fill="rgb(176,176,176)"/><rect x="45" y="10" width="5" height="5" fill="rgb(170,170,170)"/><rect x="50" y="10" width="5" height="5" fill="rgb(174,174,174)"/><rect x="55" y="10" width="5" height="5" fill="rgb(230,230,230)"/><rect x="60" y="10" width="5" height="5" fill="rgb(199,199,199)"/><rect x="65" y="10" width="5" height="5" fill="rgb(218,218,218)"/><rect x="70" y="10" width="5" height="5" fill="rgb(185,185,185)"/><rect x="75" y="10" width="5" height="5" fill="rgb(172,172,172)"/><rect x="80" y="10" width="5" height="5" fill="rgb(183,183,183)"/><rect x="85" y="10" width="5" height="5" fill="rgb(164,164,164)"/><rect x="90" y="10" width="5" height="5" fill="rgb(172,172,172)"/><rect x="95" y="10" width="5" height="5" fill="rgb(177,177,177)"/><rect x="100" y="10" width="5" height="5" fill="rgb(171,171,171)"/><rect x="105" y="10" width="5" height="5" fill="rgb(184,184,184)"/><rect x="110" y="10" width="5" height="5" fill="rgb(177,177,177)"/><rect x="0" y="15" width="5" height="5" fill="rgb(242,242,242)"/><rect x="5" y="15" width="5" height="5" fill="rgb(247,247,247)"/><rect x="10" y="15" width="5" height="5" fill="rgb(245,245,245)"/><rect x="15" y="15" width="5" height="5" fill="rgb(245,245,245)"/><rect x="20" y="15" width="5" height="5" fill="rgb(243,243,243)"/><rect x="25" y="15" width="5" height="5" fill="rgb(244,244,244)"/><rect x="40" y="15" width="5" height="5" fill="rgb(246,246,246)"/><rect x="45" y="15" width="5" height="5" fill="rgb(247,247,247)"/><rect x="50" y="15" width="5" height="5" fill="rgb(249,249,249)"/><rect x="60" y="15" width="5" height="5" fill="rgb(251,251,251)"/><rect x="65" y="15" width="5" height="5" fill="rgb(247,247,247)"/><rect x="70" y="15" width="5" height="5" fill="rgb(243,243,243)"/><rect x="75" y="15" width="5" height="5" fill="rgb(241,241,241)"/><rect x="80" y="15" width="5" height="5" fill="rgb(249,249,249)"/><rect x="85" y="15" width="5" height="5" fill="rgb(250,250,250)"/><rect x="90" y="15" width="5" height="5" fill="rgb(247,247,247)"/><rect x="95" y="15" width="5" height="5" fill="rgb(247,247,247)"/><rect x="100" y="15" width="5" height="5" fill="rgb(240,240,240)"/><rect x="105" y="15" width="5" height="5" fill="rgb(249,249,249)"/><rect x="110" y="15" width="5" height="5" fill="rgb(247,247,247)"/></svg>
<svg class="a" style="left:317px;top:740px" width="35" height="25" shape-rendering="crispEdges"><rect x="30" y="0" width="5" height="5" fill="rgb(250,250,250)"/><rect x="0" y="5" width="5" height="5" fill="rgb(191,191,191)"/><rect x="5" y="5" width="5" height="5" fill="rgb(207,207,207)"/><rect x="10" y="5" width="5" height="5" fill="rgb(218,218,218)"/><rect x="15" y="5" width="5" height="5" fill="rgb(208,208,208)"/><rect x="20" y="5" width="5" height="5" fill="rgb(196,196,196)"/><rect x="25" y="5" width="5" height="5" fill="rgb(227,227,227)"/><rect x="30" y="5" width="5" height="5" fill="rgb(199,199,199)"/><rect x="0" y="10" width="5" height="5" fill="rgb(173,173,173)"/><rect x="5" y="10" width="5" height="5" fill="rgb(150,150,150)"/><rect x="10" y="10" width="5" height="5" fill="rgb(181,181,181)"/><rect x="15" y="10" width="5" height="5" fill="rgb(167,167,167)"/><rect x="20" y="10" width="5" height="5" fill="rgb(189,189,189)"/><rect x="25" y="10" width="5" height="5" fill="rgb(229,229,229)"/><rect x="30" y="10" width="5" height="5" fill="rgb(183,183,183)"/><rect x="0" y="15" width="5" height="5" fill="rgb(247,247,247)"/><rect x="5" y="15" width="5" height="5" fill="rgb(245,245,245)"/><rect x="10" y="15" width="5" height="5" fill="rgb(249,249,249)"/><rect x="15" y="15" width="5" height="5" fill="rgb(245,245,245)"/><rect x="20" y="15" width="5" height="5" fill="rgb(247,247,247)"/><rect x="25" y="15" width="5" height="5" fill="rgb(248,248,248)"/><rect x="30" y="15" width="5" height="5" fill="rgb(242,242,242)"/></svg>
<svg class="a" style="left:447px;top:740px" width="25" height="25" shape-rendering="crispEdges"><rect x="0" y="5" width="5" height="5" fill="rgb(188,188,188)"/><rect x="5" y="5" width="5" height="5" fill="rgb(207,207,207)"/><rect x="10" y="5" width="5" height="5" fill="rgb(221,221,221)"/><rect x="15" y="5" width="5" height="5" fill="rgb(206,206,206)"/><rect x="20" y="5" width="5" height="5" fill="rgb(186,186,186)"/><rect x="0" y="10" width="5" height="5" fill="rgb(174,174,174)"/><rect x="5" y="10" width="5" height="5" fill="rgb(148,148,148)"/><rect x="10" y="10" width="5" height="5" fill="rgb(182,182,182)"/><rect x="15" y="10" width="5" height="5" fill="rgb(161,161,161)"/><rect x="20" y="10" width="5" height="5" fill="rgb(175,175,175)"/><rect x="0" y="15" width="5" height="5" fill="rgb(247,247,247)"/><rect x="5" y="15" width="5" height="5" fill="rgb(245,245,245)"/><rect x="10" y="15" width="5" height="5" fill="rgb(249,249,249)"/><rect x="15" y="15" width="5" height="5" fill="rgb(244,244,244)"/><rect x="20" y="15" width="5" height="5" fill="rgb(247,247,247)"/></svg>
<svg class="a" style="left:661px;top:744px" width="80" height="25" shape-rendering="crispEdges"><rect x="0" y="0" width="5" height="5" fill="rgb(172,172,172)"/><rect x="5" y="0" width="5" height="5" fill="rgb(171,171,171)"/><rect x="10" y="0" width="5" height="5" fill="rgb(142,142,142)"/><rect x="15" y="0" width="5" height="5" fill="rgb(206,206,206)"/><rect x="20" y="0" width="5" height="5" fill="rgb(197,197,197)"/><rect x="25" y="0" width="5" height="5" fill="rgb(168,168,168)"/><rect x="30" y="0" width="5" height="5" fill="rgb(163,163,163)"/><rect x="35" y="0" width="5" height="5" fill="rgb(161,161,161)"/><rect x="40" y="0" width="5" height="5" fill="rgb(249,249,249)"/><rect x="45" y="0" width="5" height="5" fill="rgb(172,172,172)"/><rect x="50" y="0" width="5" height="5" fill="rgb(210,210,210)"/><rect x="55" y="0" width="5" height="5" fill="rgb(152,152,152)"/><rect x="60" y="0" width="5" height="5" fill="rgb(163,163,163)"/><rect x="65" y="0" width="5" height="5" fill="rgb(168,168,168)"/><rect x="70" y="0" width="5" height="5" fill="rgb(173,173,173)"/><rect x="75" y="0" width="5" height="5" fill="rgb(165,165,165)"/><rect x="0" y="5" width="5" height="5" fill="rgb(181,181,181)"/><rect x="5" y="5" width="5" height="5" fill="rgb(173,173,173)"/><rect x="10" y="5" width="5" height="5" fill="rgb(168,168,168)"/><rect x="15" y="5" width="5" height="5" fill="rgb(189,189,189)"/><rect x="20" y="5" width="5" height="5" fill="rgb(179,179,179)"/><rect x="25" y="5" width="5" height="5" fill="rgb(178,178,178)"/><rect x="30" y="5" width="5" height="5" fill="rgb(170,170,170)"/><rect x="35" y="5" width="5" height="5" fill="rgb(174,174,174)"/><rect x="40" y="5" width="5" height="5" fill="rgb(215,215,215)"/><rect x="45" y="5" width="5" height="5" fill="rgb(176,176,176)"/><rect x="50" y="5" width="5" height="5" fill="rgb(213,213,213)"/><rect x="55" y="5" width="5" height="5" fill="rgb(168,168,168)"/><rect x="60" y="5" width="5" height="5" fill="rgb(167,167,167)"/><rect x="65" y="5" width="5" height="5" fill="rgb(167,167,167)"/><rect x="70" y="5" width="5" height="5" fill="rgb(195,195,195)"/><rect x="75" y="5" width="5" height="5" fill="rgb(170,170,170)"/><rect x="0" y="10" width="5" height="5" fill="rgb(247,247,247)"/><rect x="5" y="10" width="5" height="5" fill="rgb(250,250,250)"/><rect x="10" y="10" width="5" height="5" fill="rgb(244,244,244)"/><rect x="25" y="10" width="5" height="5" fill="rgb(245,245,245)"/><rect x="30" y="10" width="5" height="5" fill="rgb(249,249,249)"/><rect x="35" y="10" width="5" height="5" fill="rgb(247,247,247)"/><rect x="45" y="10" width="5" height="5" fill="rgb(242,242,242)"/><rect x="50" y="10" width="5" height="5" fill="rgb(247,247,247)"/><rect x="55" y="10" width="5" height="5" fill="rgb(244,244,244)"/><rect x="60" y="10" width="5" height="5" fill="rgb(252,252,252)"/><rect x="65" y="10" width="5" height="5" fill="rgb(245,245,245)"/><rect x="70" y="10" width="5" height="5" fill="rgb(248,248,248)"/><rect x="75" y="10" width="5" height="5" fill="rgb(248,248,248)"/></svg>
<div class="a" style="left:24px;top:777px;width:1232px;height:1px;background:#e4e4e7"></div>
<div class="t" style="left:48.299999999999955px;top:801.86px;font-size:14.7px;line-height:14.7px;font-weight:400;color:#3f3f46;">Showing 1 to 10 of 23 results</div>
<div class="a" style="left:566.4000000000001px;top:789.2px;width:147px;height:37.5px;background:#fff;border:1px solid #e4e4e7;border-radius:8px;box-shadow:0 1px 2px rgba(0,0,0,0.05)"></div>
<div class="a" style="left:651px;top:790px;width:1px;height:36px;background:#e4e4e7"></div>
<div class="t" style="left:579.7px;top:801.73px;font-size:14.5px;line-height:14.5px;font-weight:400;color:#71717a;">Per page</div>
<div class="t" style="left:663.8px;top:801.73px;font-size:14.5px;line-height:14.5px;font-weight:400;color:#09090b;">10</div>
<svg class="a" style="left:686.5px;top:800.5px" width="16" height="16" viewBox="0 0 24 24" fill="none" stroke="#52525b" stroke-width="1.8" stroke-linecap="round" stroke-linejoin="round"><path d="m19.5 8.25-7.5 7.5-7.5-7.5"/></svg>
<div class="a" style="left:1081.4px;top:789.5px;width:151px;height:37px;background:#fff;border:1px solid #e4e4e7;border-radius:8px;box-shadow:0 1px 2px rgba(0,0,0,0.05);overflow:hidden"></div>
<div class="a" style="left:1082.4px;top:790.5px;width:35px;height:35px;background:#fafafa;border-radius:7px 0 0 7px"></div>
<div class="a" style="left:1116.5px;top:790.5px;width:1px;height:35px;background:#e4e4e7"></div>
<div class="a" style="left:1155.3px;top:790.5px;width:1px;height:35px;background:#e4e4e7"></div>
<div class="a" style="left:1194.4px;top:790.5px;width:1px;height:35px;background:#e4e4e7"></div>
<div class="t" style="left:1095.8px;top:801.73px;font-size:14.5px;line-height:14.5px;font-weight:400;color:#c2410c;-webkit-text-stroke:0.25px #c2410c">1</div>
<div class="t" style="left:1132.8px;top:801.73px;font-size:14.5px;line-height:14.5px;font-weight:400;color:#27272a;-webkit-text-stroke:0.25px #27272a">2</div>
<div class="t" style="left:1171.5px;top:801.73px;font-size:14.5px;line-height:14.5px;font-weight:400;color:#27272a;-webkit-text-stroke:0.25px #27272a">3</div>
<svg class="a" style="left:1207px;top:800.5px" width="16" height="16" viewBox="0 0 24 24" fill="none" stroke="#71717a" stroke-width="1.5" stroke-linecap="round" stroke-linejoin="round"><path d="m8.25 4.5 7.5 7.5-7.5 7.5"/></svg>
<div class="a" style="left:0px;top:842px;width:1280px;height:1px;background:#e4e4e7"></div>
<div class="a" style="left:23.299999999999955px;top:862.4px;width:72.4px;height:37px;background:#fff;border:1px solid #e4e4e7;border-radius:8px;box-shadow:0 1px 2px rgba(0,0,0,0.05)"></div>
<div class="t" style="left:36.39999999999998px;top:875.26px;font-size:14.1px;line-height:14.1px;font-weight:700;color:#09090b;">Cancel</div>
<div class="a" style="left:1275px;top:12px;width:2.2px;height:875px;background:#808080;border-radius:1px"></div>
<div class="a" style="left:1168px;top:322px;width:86px;height:58px;border:3.5px solid #ff0000"></div>
<svg class="a" style="left:0;top:0" width="1280" height="919"><defs><filter id="sh" x="-50%" y="-50%" width="200%" height="200%"><feDropShadow dx="2" dy="1.5" stdDeviation="1.3" flood-color="#000" flood-opacity="0.4"/></filter></defs><g filter="url(#sh)"><polygon points="1137.4,221 1141.6,219.5 1167.6,291 1163.6,292.5" fill="#ff0000"/><polygon points="1157.8,295 1172,289.5 1173.5,314" fill="#ff0000"/></g></svg>
</div>
</body></html>
